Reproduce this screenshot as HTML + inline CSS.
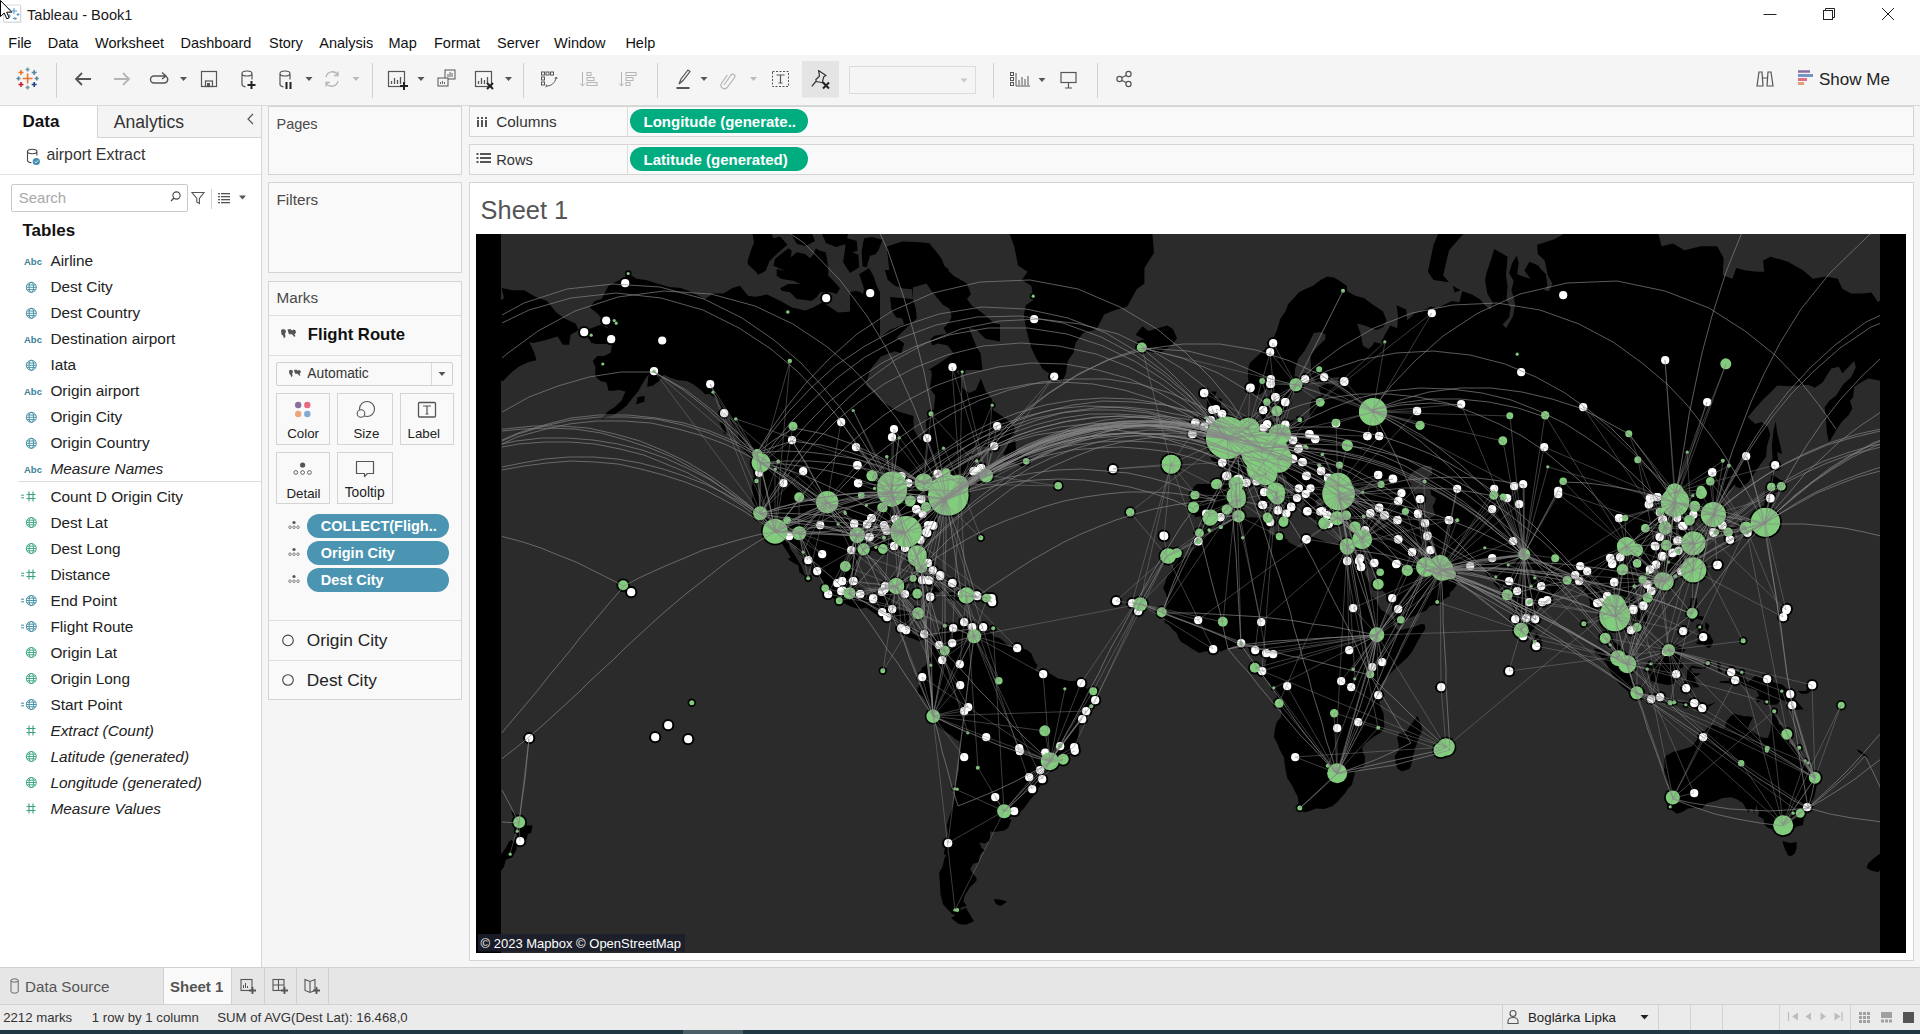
<!DOCTYPE html>
<html><head><meta charset="utf-8">
<style>
*{margin:0;padding:0;box-sizing:border-box}
html,body{width:1920px;height:1034px;overflow:hidden;background:#fff;font-family:"Liberation Sans",sans-serif;position:relative}
.a{position:absolute}
.t{position:absolute;white-space:nowrap;line-height:1}
</style></head><body>
<div class="t" style="left:27.0px;top:7.7px;font-size:14.6px;color:#1a1a1a;">Tableau - Book1</div>
<svg class="a" style="left:0.0px;top:0.0px;" width="26" height="26" viewBox="0 0 26 26"><rect x="4.5" y="6" width="17" height="17" fill="#e8e8e8"/><rect x="3.5" y="5" width="17" height="17" fill="#fff" stroke="#d0d0d0" stroke-width="0.8"/><g stroke="#5a9bd0" stroke-width="1.1"><path d="M14 8v6M11 11h6M9 14v4M7 16h4M15 17v3M13 18.5h4M9 8v3M7.5 9.5h3M18 13v3M16.5 14.5h3"/></g><path d="M0.5 0.5 L0.5 16.5 L4.2 13 L6.8 18.8 L9.2 17.8 L6.7 12.2 L11.8 12.2 Z" fill="#fff" stroke="#000" stroke-width="1"/></svg>
<svg class="a" style="left:1760.0px;top:4.0px;" width="140" height="20" viewBox="0 0 140 20"><g stroke="#222" stroke-width="1" fill="none"><path d="M3.5 10.5h13"/><rect x="63.5" y="6.5" width="9" height="9"/><path d="M65.5 6.5v-2h9v9h-2"/><path d="M122 4l12 12M134 4l-12 12"/></g></svg>
<div class="t" style="left:8.3px;top:35.5px;font-size:14.5px;color:#111;">File</div>
<div class="t" style="left:47.8px;top:35.5px;font-size:14.5px;color:#111;">Data</div>
<div class="t" style="left:95.0px;top:35.5px;font-size:14.5px;color:#111;">Worksheet</div>
<div class="t" style="left:180.5px;top:35.5px;font-size:14.5px;color:#111;">Dashboard</div>
<div class="t" style="left:269.0px;top:35.5px;font-size:14.5px;color:#111;">Story</div>
<div class="t" style="left:319.3px;top:35.5px;font-size:14.5px;color:#111;">Analysis</div>
<div class="t" style="left:388.5px;top:35.5px;font-size:14.5px;color:#111;">Map</div>
<div class="t" style="left:434.0px;top:35.5px;font-size:14.5px;color:#111;">Format</div>
<div class="t" style="left:497.0px;top:35.5px;font-size:14.5px;color:#111;">Server</div>
<div class="t" style="left:554.0px;top:35.5px;font-size:14.5px;color:#111;">Window</div>
<div class="t" style="left:625.4px;top:35.5px;font-size:14.5px;color:#111;">Help</div>
<div class="a" style="left:0.0px;top:55.0px;width:1920.0px;height:50.0px;background:#f5f5f5"></div>
<div class="a" style="left:0.0px;top:105.0px;width:1920.0px;height:1.0px;background:#d9d9d9"></div>
<div class="a" style="left:56.4px;top:63.0px;width:1.0px;height:35.0px;background:#d0d0d0"></div>
<div class="a" style="left:372.4px;top:63.0px;width:1.0px;height:35.0px;background:#d0d0d0"></div>
<div class="a" style="left:523.4px;top:63.0px;width:1.0px;height:35.0px;background:#d0d0d0"></div>
<div class="a" style="left:656.5px;top:63.0px;width:1.0px;height:35.0px;background:#d0d0d0"></div>
<div class="a" style="left:993.0px;top:63.0px;width:1.0px;height:35.0px;background:#d0d0d0"></div>
<div class="a" style="left:1097.0px;top:63.0px;width:1.0px;height:35.0px;background:#d0d0d0"></div>
<svg class="a" style="left:0.0px;top:0.0px;" width="1920" height="110" viewBox="0 0 1920 110"><g stroke-width="1.6"><path stroke="#e8762b" d="M22.6 78.5h10.0M27.6 73.5v10.0"/><path stroke="#e8762b" d="M18.5 72.5h5.0M21.0 70.0v5.0"/><path stroke="#5b879b" d="M31.7 72.5h5.0M34.2 70.0v5.0"/><path stroke="#c72035" d="M18.5 84.5h5.0M21.0 82.0v5.0"/><path stroke="#1f457e" d="M31.7 84.5h5.0M34.2 82.0v5.0"/><path stroke="#7099a6" d="M25.6 69.5h4.0M27.6 67.5v4.0"/><path stroke="#7099a6" d="M25.6 87.5h4.0M27.6 85.5v4.0"/><path stroke="#59879b" d="M16.5 78.5h4.0M18.5 76.5v4.0"/><path stroke="#59879b" d="M34.7 78.5h4.0M36.7 76.5v4.0"/></g><path d="M91 79H76M82 73l-6 6 6 6" stroke="#555" stroke-width="1.8" fill="none"/><path d="M114 79h15M123 73l6 6-6 6" stroke="#b5b5b5" stroke-width="1.8" fill="none"/><path d="M166 76h-12a3.5 3.5 0 0 0 0 7h10a3.5 3.5 0 0 0 2-6.5M162 72.5l4 3.5-4 3" stroke="#555" stroke-width="1.4" fill="none"/><path d="M180.0 77.0h7l-3.5 4z" fill="#555"/><rect x="201.5" y="71.5" width="15" height="15" fill="none" stroke="#555" stroke-width="1.2"/><rect x="205.5" y="81" width="7" height="5.5" fill="none" stroke="#555" stroke-width="1.2"/><rect x="207" y="83" width="3" height="3.5" fill="#555"/><path d="M242 73.5v11c0 1.2 1.5 2 3.5 2.3M242 73.5c0-1.5 2.5-2.5 5-2.5s5 1 5 2.5v6M242 73.5c0 1.5 2.5 2.5 5 2.5s5-1 5-2.5" stroke="#555" stroke-width="1.2" fill="none"/><path d="M247.5 85h8M251.5 81v8" stroke="#222" stroke-width="2"/><path d="M280 73.5v11c0 1.2 1.5 2 3.5 2.3M280 73.5c0-1.5 2.5-2.5 5-2.5s5 1 5 2.5v6M280 73.5c0 1.5 2.5 2.5 5 2.5s5-1 5-2.5" stroke="#555" stroke-width="1.2" fill="none"/><path d="M286.5 82v7M290.5 82v7" stroke="#222" stroke-width="2"/><path d="M305.5 77.0h7l-3.5 4z" fill="#555"/><path d="M326 77a6.5 6.5 0 0 1 12-2M338 81a6.5 6.5 0 0 1-12 2M338 71.5v4h-4M326 86.5v-4h4" stroke="#b5b5b5" stroke-width="1.3" fill="none"/><path d="M352.5 77.0h7l-3.5 4z" fill="#bbb"/><rect x="388.5" y="71.5" width="16" height="15" fill="none" stroke="#555" stroke-width="1.2"/><path d="M391.5 84v-3M394.5 84v-6M397.5 84v-4M400.5 84v-7" stroke="#555" stroke-width="1.3"/><path d="M400 86h8M404 82v8" stroke="#222" stroke-width="2"/><path d="M417.5 77.0h7l-3.5 4z" fill="#555"/><rect x="445" y="70" width="10" height="9" fill="#f4f4f4" stroke="#555" stroke-width="1"/><rect x="438" y="78" width="10" height="8" fill="#f4f4f4" stroke="#555" stroke-width="1"/><path d="M448 77v-3M450 77v-5M452 77v-4M440.5 84v-2M442.5 84v-3M444.5 84v-2" stroke="#555" stroke-width="0.9"/><rect x="475.5" y="71.5" width="16" height="15" fill="none" stroke="#555" stroke-width="1.2"/><path d="M478.5 84v-3M481.5 84v-6M484.5 84v-4M487.5 84v-7" stroke="#555" stroke-width="1.3"/><path d="M487 83l6 6M493 83l-6 6" stroke="#222" stroke-width="2"/><path d="M505.0 77.0h7l-3.5 4z" fill="#555"/><g fill="none" stroke="#555" stroke-width="1"><rect x="541.5" y="72" width="3" height="3"/><rect x="546" y="72" width="3" height="3"/><rect x="550.5" y="72" width="3" height="3"/><rect x="541.5" y="77" width="3" height="3"/><rect x="541.5" y="82" width="3" height="3"/><path d="M547 86c4 0 8-3 9-8M555 78.5l1.2-1.5 1 2M546 84.5l1 1.5-1.5 1"/></g><g fill="none" stroke="#b5b5b5" stroke-width="1"><path d="M582.5 72v14M580 83.5l2.5 2.5 2.5-2.5"/><rect x="587" y="72.5" width="4" height="3"/><rect x="587" y="77.5" width="7" height="3"/><rect x="587" y="82.5" width="10" height="3"/></g><g fill="none" stroke="#b5b5b5" stroke-width="1"><path d="M621.5 72v14M619 83.5l2.5 2.5 2.5-2.5"/><rect x="626" y="72.5" width="10" height="3"/><rect x="626" y="77.5" width="7" height="3"/><rect x="626" y="82.5" width="4" height="3"/></g><path d="M679 84l2-5 7-9 2 1.5-7 9-4 3.5z" fill="none" stroke="#555" stroke-width="1.2"/><path d="M676.5 88h13" stroke="#555" stroke-width="2"/><path d="M700.5 77.0h7l-3.5 4z" fill="#555"/><path d="M724 85l7-10a2.2 2.2 0 0 1 3.6 2.5l-7.5 10a3.5 3.5 0 0 1-5.7-4l6-8.5" fill="none" stroke="#b5b5b5" stroke-width="1.2"/><path d="M750.0 77.0h7l-3.5 4z" fill="#bbb"/><rect x="772.5" y="71.5" width="16" height="15" fill="none" stroke="#555" stroke-width="1" stroke-dasharray="2 1.5"/><path d="M776.5 75h8M780.5 75v8M778.5 83h4" stroke="#555" stroke-width="1.2" fill="none"/><rect x="802" y="61" width="37" height="36.5" fill="#e4e4e4"/><path d="M818.5 70.5l7.5 5-2.2 1.2-1.3 4.8 1.5 1.5-7.8-1.5-.3-2 3.5-3.3-.2-2.5z M815.8 81.5l-4 4.8" fill="none" stroke="#333" stroke-width="1.2" stroke-linejoin="round"/><path d="M823 82.5l6 6M829 82.5l-6 6" stroke="#222" stroke-width="2"/><rect x="849.5" y="66.5" width="126" height="27" fill="#f5f5f5" stroke="#dcdcdc"/><path d="M960.5 78.5h7l-3.5 4z" fill="#c8c8c8"/><g fill="none" stroke="#555" stroke-width="1"><rect x="1010.5" y="72.5" width="3" height="3"/><rect x="1010.5" y="77.5" width="3" height="3"/><rect x="1010.5" y="82.5" width="3" height="3"/><path d="M1016 73v13h14M1019 85v-5M1022 85v-8M1025 85v-6M1028 85v-9"/></g><path d="M1038.5 78.0h7l-3.5 4z" fill="#555"/><g fill="none" stroke="#555" stroke-width="1.2"><rect x="1061" y="72.5" width="15" height="10"/><path d="M1068.5 83v5M1065 88h7"/></g><g fill="none" stroke="#555" stroke-width="1.2"><circle cx="1119.5" cy="79" r="2.6"/><circle cx="1128.5" cy="74" r="2.6"/><circle cx="1128.5" cy="84" r="2.6"/><path d="M1121.7 77.8l4.6-2.5M1121.7 80.2l4.6 2.5"/></g><g fill="none" stroke="#555" stroke-width="1.2"><path d="M1757 86l2-14h3l1 14zM1767 86l1-14h3l2 14zM1762 78h6"/></g><path d="M1798 71.5h12M1798 75.5h15M1798 79.5h9M1798 83.5h6" stroke-width="2.6" stroke="#8b6ea3"/><path d="M1798 75.5h15" stroke-width="2.6" stroke="#7096c8"/><path d="M1798 79.5h9" stroke-width="2.6" stroke="#e86a7f"/><path d="M1798 83.5h6" stroke-width="2.6" stroke="#f0a070"/></svg>
<div class="t" style="left:1819.0px;top:70.9px;font-size:17.0px;color:#222;">Show Me</div>
<div class="a" style="left:0.0px;top:106.0px;width:1920.0px;height:861.0px;background:#f5f5f5"></div>
<div class="a" style="left:0.0px;top:106.0px;width:261.0px;height:861.0px;background:#fff"></div>
<div class="a" style="left:261.0px;top:106.0px;width:1.0px;height:861.0px;background:#d6d6d6"></div>
<div class="a" style="left:97.0px;top:106.0px;width:164.0px;height:32.0px;background:#f4f4f4;border-left:1px solid #d4d4d4;border-bottom:1px solid #d4d4d4"></div>
<div class="t" style="left:22.6px;top:112.6px;font-size:17.0px;color:#111;font-weight:bold">Data</div>
<div class="t" style="left:113.7px;top:113.7px;font-size:17.6px;color:#333;">Analytics</div>
<svg class="a" style="left:244.0px;top:112.0px;" width="12" height="14" viewBox="0 0 12 14"><path d="M9 2L4 7l5 5" fill="none" stroke="#555" stroke-width="1.2"/></svg>
<div class="a" style="left:0.0px;top:174.0px;width:261.0px;height:1.0px;background:#e2e2e2"></div>
<svg class="a" style="left:24.0px;top:147.0px;" width="20" height="20" viewBox="0 0 20 20"><path d="M3.5 4.5v9c0 1.3 2 2 4 2.2M3.5 4.5c0-1.4 2.3-2.2 4.7-2.2s4.7.8 4.7 2.2v4M3.5 4.5c0 1.4 2.3 2.2 4.7 2.2s4.7-.8 4.7-2.2" fill="none" stroke="#444" stroke-width="1.1"/><circle cx="12.3" cy="14.5" r="3.6" fill="#3d8bb0"/><path d="M10.5 14.5l1.3 1.3 2.3-2.5" fill="none" stroke="#fff" stroke-width="1"/></svg>
<div class="t" style="left:46.4px;top:146.7px;font-size:15.9px;color:#333;">airport Extract</div>
<div class="a" style="left:10.5px;top:184.0px;width:177.0px;height:27.5px;border:1px solid #c9c9c9;border-radius:2px;background:#fff"></div>
<div class="t" style="left:18.7px;top:190.0px;font-size:15.0px;color:#a8a8a8;">Search</div>
<svg class="a" style="left:165.0px;top:186.0px;" width="90" height="24" viewBox="0 0 90 24"><circle cx="11.5" cy="9.5" r="3.6" fill="none" stroke="#444" stroke-width="1.1"/><path d="M9 12l-3 3" stroke="#444" stroke-width="1.2"/><path d="M27 6.5h12l-4.6 6v5l-2.6-1.5v-3.5z" fill="none" stroke="#555" stroke-width="1.1"/><path d="M46.5 3v20" stroke="#d0d0d0"/><g fill="#555"><rect x="53" y="7" width="2" height="1.3"/><rect x="56" y="7" width="9" height="1.3"/><rect x="53" y="10" width="2" height="1.3"/><rect x="56" y="10" width="9" height="1.3"/><rect x="53" y="13" width="2" height="1.3"/><rect x="56" y="13" width="9" height="1.3"/><rect x="53" y="16" width="2" height="1.3"/><rect x="56" y="16" width="9" height="1.3"/></g><path d="M74 9.5h7l-3.5 4z" fill="#555"/></svg>
<div class="t" style="left:22.5px;top:222.1px;font-size:17.0px;color:#111;font-weight:bold">Tables</div>
<div class="t" style="left:50.4px;top:253.3px;font-size:15.4px;color:#222;">Airline</div>
<div class="t" style="left:50.4px;top:279.3px;font-size:15.4px;color:#222;">Dest City</div>
<div class="t" style="left:50.4px;top:305.3px;font-size:15.4px;color:#222;">Dest Country</div>
<div class="t" style="left:50.4px;top:331.3px;font-size:15.4px;color:#222;">Destination airport</div>
<div class="t" style="left:50.4px;top:357.3px;font-size:15.4px;color:#222;">Iata</div>
<div class="t" style="left:50.4px;top:383.3px;font-size:15.4px;color:#222;">Origin airport</div>
<div class="t" style="left:50.4px;top:409.3px;font-size:15.4px;color:#222;">Origin City</div>
<div class="t" style="left:50.4px;top:435.3px;font-size:15.4px;color:#222;">Origin Country</div>
<div class="t" style="left:50.4px;top:461.3px;font-size:15.4px;color:#222;font-style:italic">Measure Names</div>
<div class="a" style="left:18.0px;top:481.0px;width:243.0px;height:1.0px;background:#dcdcdc"></div>
<div class="t" style="left:50.4px;top:488.5px;font-size:15.4px;color:#222;">Count D Origin City</div>
<div class="t" style="left:50.4px;top:514.5px;font-size:15.4px;color:#222;">Dest Lat</div>
<div class="t" style="left:50.4px;top:540.5px;font-size:15.4px;color:#222;">Dest Long</div>
<div class="t" style="left:50.4px;top:566.5px;font-size:15.4px;color:#222;">Distance</div>
<div class="t" style="left:50.4px;top:592.5px;font-size:15.4px;color:#222;">End Point</div>
<div class="t" style="left:50.4px;top:618.5px;font-size:15.4px;color:#222;">Flight Route</div>
<div class="t" style="left:50.4px;top:644.5px;font-size:15.4px;color:#222;">Origin Lat</div>
<div class="t" style="left:50.4px;top:670.5px;font-size:15.4px;color:#222;">Origin Long</div>
<div class="t" style="left:50.4px;top:696.5px;font-size:15.4px;color:#222;">Start Point</div>
<div class="t" style="left:50.4px;top:722.5px;font-size:15.4px;color:#222;font-style:italic">Extract (Count)</div>
<div class="t" style="left:50.4px;top:748.5px;font-size:15.4px;color:#222;font-style:italic">Latitude (generated)</div>
<div class="t" style="left:50.4px;top:774.5px;font-size:15.4px;color:#222;font-style:italic">Longitude (generated)</div>
<div class="t" style="left:50.4px;top:800.5px;font-size:15.4px;color:#222;font-style:italic">Measure Values</div>
<svg class="a" style="left:0.0px;top:0.0px;" width="60" height="830" viewBox="0 0 60 830"><text x="24" y="264.8" font-family="Liberation Sans" font-size="9.5" font-weight="bold" fill="#3b7f98">Abc</text><g fill="none" stroke="#3c8aa2" stroke-width="0.9"><circle cx="31.3" cy="287.3" r="5"/><ellipse cx="31.3" cy="287.3" rx="2.2" ry="5"/><path d="M26.3 287.3h10M26.8 285.0h9M26.8 289.6h9"/></g><g fill="none" stroke="#3c8aa2" stroke-width="0.9"><circle cx="31.3" cy="313.3" r="5"/><ellipse cx="31.3" cy="313.3" rx="2.2" ry="5"/><path d="M26.3 313.3h10M26.8 311.0h9M26.8 315.6h9"/></g><text x="24" y="342.8" font-family="Liberation Sans" font-size="9.5" font-weight="bold" fill="#3b7f98">Abc</text><g fill="none" stroke="#3c8aa2" stroke-width="0.9"><circle cx="31.3" cy="365.3" r="5"/><ellipse cx="31.3" cy="365.3" rx="2.2" ry="5"/><path d="M26.3 365.3h10M26.8 363.0h9M26.8 367.6h9"/></g><text x="24" y="394.8" font-family="Liberation Sans" font-size="9.5" font-weight="bold" fill="#3b7f98">Abc</text><g fill="none" stroke="#3c8aa2" stroke-width="0.9"><circle cx="31.3" cy="417.3" r="5"/><ellipse cx="31.3" cy="417.3" rx="2.2" ry="5"/><path d="M26.3 417.3h10M26.8 415.0h9M26.8 419.6h9"/></g><g fill="none" stroke="#3c8aa2" stroke-width="0.9"><circle cx="31.3" cy="443.3" r="5"/><ellipse cx="31.3" cy="443.3" rx="2.2" ry="5"/><path d="M26.3 443.3h10M26.8 441.0h9M26.8 445.6h9"/></g><text x="24" y="472.8" font-family="Liberation Sans" font-size="9.5" font-weight="bold" fill="#3b7f98">Abc</text><path d="M29 491.5v10M33 491.5v10M26.5 494.5h9M26.5 498.5h9" stroke="#38a37a" stroke-width="1.1"/><path d="M21 495.2h3M21 497.8h3" stroke="#38a37a" stroke-width="1"/><g fill="none" stroke="#38a37a" stroke-width="0.9"><circle cx="31.3" cy="522.5" r="5"/><ellipse cx="31.3" cy="522.5" rx="2.2" ry="5"/><path d="M26.3 522.5h10M26.8 520.2h9M26.8 524.8h9"/></g><g fill="none" stroke="#38a37a" stroke-width="0.9"><circle cx="31.3" cy="548.5" r="5"/><ellipse cx="31.3" cy="548.5" rx="2.2" ry="5"/><path d="M26.3 548.5h10M26.8 546.2h9M26.8 550.8h9"/></g><path d="M29 569.5v10M33 569.5v10M26.5 572.5h9M26.5 576.5h9" stroke="#38a37a" stroke-width="1.1"/><path d="M21 573.2h3M21 575.8h3" stroke="#38a37a" stroke-width="1"/><g fill="none" stroke="#3c8aa2" stroke-width="0.9"><circle cx="31.3" cy="600.5" r="5"/><ellipse cx="31.3" cy="600.5" rx="2.2" ry="5"/><path d="M26.3 600.5h10M26.8 598.2h9M26.8 602.8h9"/></g><path d="M21 599.2h3M21 601.8h3" stroke="#3c8aa2" stroke-width="1"/><g fill="none" stroke="#3c8aa2" stroke-width="0.9"><circle cx="31.3" cy="626.5" r="5"/><ellipse cx="31.3" cy="626.5" rx="2.2" ry="5"/><path d="M26.3 626.5h10M26.8 624.2h9M26.8 628.8h9"/></g><path d="M21 625.2h3M21 627.8h3" stroke="#3c8aa2" stroke-width="1"/><g fill="none" stroke="#38a37a" stroke-width="0.9"><circle cx="31.3" cy="652.5" r="5"/><ellipse cx="31.3" cy="652.5" rx="2.2" ry="5"/><path d="M26.3 652.5h10M26.8 650.2h9M26.8 654.8h9"/></g><g fill="none" stroke="#38a37a" stroke-width="0.9"><circle cx="31.3" cy="678.5" r="5"/><ellipse cx="31.3" cy="678.5" rx="2.2" ry="5"/><path d="M26.3 678.5h10M26.8 676.2h9M26.8 680.8h9"/></g><g fill="none" stroke="#3c8aa2" stroke-width="0.9"><circle cx="31.3" cy="704.5" r="5"/><ellipse cx="31.3" cy="704.5" rx="2.2" ry="5"/><path d="M26.3 704.5h10M26.8 702.2h9M26.8 706.8h9"/></g><path d="M21 703.2h3M21 705.8h3" stroke="#3c8aa2" stroke-width="1"/><path d="M29 725.5v10M33 725.5v10M26.5 728.5h9M26.5 732.5h9" stroke="#38a37a" stroke-width="1.1"/><g fill="none" stroke="#38a37a" stroke-width="0.9"><circle cx="31.3" cy="756.5" r="5"/><ellipse cx="31.3" cy="756.5" rx="2.2" ry="5"/><path d="M26.3 756.5h10M26.8 754.2h9M26.8 758.8h9"/></g><g fill="none" stroke="#38a37a" stroke-width="0.9"><circle cx="31.3" cy="782.5" r="5"/><ellipse cx="31.3" cy="782.5" rx="2.2" ry="5"/><path d="M26.3 782.5h10M26.8 780.2h9M26.8 784.8h9"/></g><path d="M29 803.5v10M33 803.5v10M26.5 806.5h9M26.5 810.5h9" stroke="#38a37a" stroke-width="1.1"/></svg>
<div class="a" style="left:268.0px;top:105.5px;width:194.0px;height:69.5px;border:1px solid #d4d4d4;background:#f9f9f9"></div>
<div class="t" style="left:276.5px;top:116.9px;font-size:14.5px;color:#4a4a4a;">Pages</div>
<div class="a" style="left:268.0px;top:181.5px;width:194.0px;height:91.5px;border:1px solid #d4d4d4;background:#f9f9f9"></div>
<div class="t" style="left:276.5px;top:192.2px;font-size:15.3px;color:#4a4a4a;">Filters</div>
<div class="a" style="left:268.0px;top:281.0px;width:194.0px;height:419.0px;border:1px solid #d4d4d4;background:#f9f9f9"></div>
<div class="t" style="left:276.4px;top:290.2px;font-size:15.3px;color:#4a4a4a;">Marks</div>
<div class="a" style="left:269.0px;top:315.0px;width:192.0px;height:1.0px;background:#dedede"></div>
<div class="t" style="left:307.8px;top:326.9px;font-size:16.7px;color:#111;font-weight:bold">Flight Route</div>
<div class="a" style="left:269.0px;top:355.0px;width:192.0px;height:1.0px;background:#dedede"></div>
<div class="a" style="left:276.4px;top:362.3px;width:177.0px;height:23.5px;border:1px solid #d0d0d0;background:#f9f9f9;border-radius:2px"></div>
<div class="a" style="left:431.0px;top:363.0px;width:1.0px;height:22.0px;background:#d8d8d8"></div>
<div class="t" style="left:307.3px;top:367.2px;font-size:13.8px;color:#333;">Automatic</div>
<svg class="a" style="left:0.0px;top:0.0px;" width="470" height="700" viewBox="0 0 470 700"><path d="M281 330l2.5-1 2 1 .5 2-1 1.5.5 3-1.5 2-1-3-1.5-1z M287.5 329.5l3-.5 1.5 1.5 1.5-1 2 .8.5 2.5-1.5 1.5 1 2-1.5.5-1-1.5-2-1.5-1 1-1.5-1.5z" fill="#555"/><path d="M289 370.5l2-.8 1.6.8.4 1.6-.8 1.2.4 2.4-1.2 1.6-.8-2.4-1.2-.8z M294 370l2.4-.4 1.2 1.2 1.2-.8 1.6.6.4 2-1.2 1.2.8 1.6-1.2.4-.8-1.2-1.6-1.2-.8.8-1.2-1.2z" fill="#555"/><path d="M438.5 372h7l-3.5 4z" fill="#555"/><g fill="#f9f9f9" stroke="#d4d4d4"><rect x="276.5" y="393.5" width="53" height="51"/><rect x="337.5" y="393.5" width="55" height="51"/><rect x="400.5" y="393.5" width="53" height="51"/><rect x="276.5" y="452.5" width="53" height="51"/><rect x="337.5" y="452.5" width="55" height="51"/></g><circle cx="298.2" cy="405" r="3.2" fill="#8a6f9e"/><circle cx="307.3" cy="405" r="3.2" fill="#e8697e"/><circle cx="298.2" cy="414" r="3.2" fill="#eea57a"/><circle cx="307.3" cy="414" r="3.2" fill="#85aad2"/><g fill="none" stroke="#555" stroke-width="1.1"><circle cx="367" cy="409" r="7.5"/><circle cx="361" cy="413.5" r="3.8" fill="#f9f9f9"/></g><rect x="418.5" y="402.5" width="17" height="14.5" rx="1" fill="none" stroke="#555" stroke-width="1.3"/><path d="M423 406h8M427 406v8M425.5 414h3" stroke="#555" stroke-width="1.2" fill="none"/><circle cx="302.6" cy="465" r="2.6" fill="#555"/><g fill="none" stroke="#555" stroke-width="0.9"><circle cx="295.8" cy="472.5" r="1.9"/><circle cx="302.6" cy="472.5" r="1.9"/><circle cx="309.4" cy="472.5" r="1.9"/></g><path d="M356.5 461.5h17v12h-6l-3 3v-3h-8z" fill="none" stroke="#555" stroke-width="1.2" stroke-linejoin="round"/><circle cx="294" cy="522.5" r="1.6" fill="#555"/><g fill="none" stroke="#555" stroke-width="0.7"><circle cx="290" cy="527.2" r="1.3"/><circle cx="294" cy="527.2" r="1.3"/><circle cx="298" cy="527.2" r="1.3"/></g><circle cx="294" cy="549.5" r="1.6" fill="#555"/><g fill="none" stroke="#555" stroke-width="0.7"><circle cx="290" cy="554.2" r="1.3"/><circle cx="294" cy="554.2" r="1.3"/><circle cx="298" cy="554.2" r="1.3"/></g><circle cx="294" cy="576.5" r="1.6" fill="#555"/><g fill="none" stroke="#555" stroke-width="0.7"><circle cx="290" cy="581.2" r="1.3"/><circle cx="294" cy="581.2" r="1.3"/><circle cx="298" cy="581.2" r="1.3"/></g><g fill="none" stroke="#444" stroke-width="1.1"><circle cx="288" cy="640.4" r="5.3"/><circle cx="288" cy="680" r="5.3"/></g><path d="M269 620.5h192M269 660.5h192" stroke="#dedede"/></svg>
<div class="t" style="left:287.2px;top:427.4px;font-size:13.3px;color:#222;">Color</div>
<div class="t" style="left:353.5px;top:427.4px;font-size:13.3px;color:#222;">Size</div>
<div class="t" style="left:407.5px;top:427.4px;font-size:13.3px;color:#222;">Label</div>
<div class="t" style="left:286.5px;top:486.5px;font-size:13.3px;color:#222;">Detail</div>
<div class="t" style="left:344.7px;top:486.1px;font-size:13.8px;color:#222;">Tooltip</div>
<div class="a" style="left:307.0px;top:514.0px;width:142.0px;height:24.0px;background:#4b95b2;border-radius:12px"></div>
<div class="t" style="left:320.8px;top:519.1px;font-size:14.5px;color:#fff;font-weight:bold">COLLECT(Fligh..</div>
<div class="a" style="left:307.0px;top:541.0px;width:142.0px;height:24.0px;background:#4b95b2;border-radius:12px"></div>
<div class="t" style="left:320.8px;top:546.1px;font-size:14.5px;color:#fff;font-weight:bold">Origin City</div>
<div class="a" style="left:307.0px;top:568.0px;width:142.0px;height:24.0px;background:#4b95b2;border-radius:12px"></div>
<div class="t" style="left:320.8px;top:573.0px;font-size:14.5px;color:#fff;font-weight:bold">Dest City</div>
<div class="t" style="left:306.8px;top:632.2px;font-size:17.3px;color:#222;">Origin City</div>
<div class="t" style="left:306.8px;top:671.8px;font-size:17.3px;color:#222;">Dest City</div>
<div class="a" style="left:468.5px;top:105.5px;width:1445.0px;height:31.5px;border:1px solid #d4d4d4;background:#f9f9f9"></div>
<div class="a" style="left:627.0px;top:106.0px;width:1.0px;height:30.0px;background:#dcdcdc"></div>
<div class="a" style="left:468.5px;top:143.5px;width:1445.0px;height:31.5px;border:1px solid #d4d4d4;background:#f9f9f9"></div>
<div class="a" style="left:627.0px;top:144.0px;width:1.0px;height:30.0px;background:#dcdcdc"></div>
<svg class="a" style="left:474.0px;top:110.0px;" width="20" height="60" viewBox="0 0 20 60"><g fill="#555"><rect x="3" y="7" width="2" height="2"/><rect x="7" y="7" width="2" height="2"/><rect x="11" y="7" width="2" height="2"/><rect x="3" y="10" width="2" height="7"/><rect x="7" y="10" width="2" height="7"/><rect x="11" y="10" width="2" height="7"/><rect x="2.5" y="43" width="2" height="2"/><rect x="6" y="43" width="11" height="2"/><rect x="2.5" y="47" width="2" height="2"/><rect x="6" y="47" width="11" height="2"/><rect x="2.5" y="51" width="2" height="2"/><rect x="6" y="51" width="11" height="2"/></g></svg>
<div class="t" style="left:496.3px;top:114.1px;font-size:15.3px;color:#333;">Columns</div>
<div class="t" style="left:496.3px;top:152.6px;font-size:14.6px;color:#333;">Rows</div>
<div class="a" style="left:630.0px;top:109.0px;width:178.0px;height:24.0px;background:#00ac80;border-radius:12px"></div>
<div class="t" style="left:643.5px;top:114.2px;font-size:15.0px;color:#fff;font-weight:bold">Longitude (generate..</div>
<div class="a" style="left:630.0px;top:147.0px;width:178.0px;height:24.0px;background:#00ac80;border-radius:12px"></div>
<div class="t" style="left:643.5px;top:151.9px;font-size:15.0px;color:#fff;font-weight:bold">Latitude (generated)</div>
<div class="a" style="left:468.5px;top:181.5px;width:1445.0px;height:779.0px;background:#fff;border:1px solid #d4d4d4"></div>
<div class="t" style="left:480.6px;top:198.3px;font-size:25.4px;color:#555;">Sheet 1</div>
<svg class="a" style="left:476px;top:234px" width="1430" height="719" viewBox="0 0 1430 719">
<rect width="1430" height="719" fill="#2b2b2b"/>
<g fill="#000"><path d="M108.8,99.9 114.9,94.2 125.2,90.4 132.9,95.2 126.0,85.5 122.6,80.6 113.8,73.4 118.7,67.1 125.6,65.0 132.5,51.7 143.6,46.0 153.2,40.1 160.5,44.8 169.7,46.0 181.2,49.4 193.4,52.9 204.9,54.0 216.4,58.5 228.7,65.0 237.5,59.6 247.1,59.6 256.6,54.0 263.9,51.7 272.0,61.7 279.6,62.8 291.1,60.6 304.5,67.1 316.0,73.4 329.4,76.5 337.1,73.4 346.7,68.2 362.0,78.5 375.4,77.5 385.0,73.4 388.8,49.4 394.5,37.7 398.4,55.1 405.6,62.8 413.7,72.4 421.4,82.6 425.2,60.6 436.7,59.6 440.9,71.3 432.8,91.4 423.3,96.1 417.5,108.1 407.9,114.3 404.5,122.9 394.5,135.2 389.6,150.8 395.7,156.7 406.0,167.6 421.4,177.3 437.4,182.0 437.8,195.7 444.3,206.3 448.2,204.5 450.8,198.9 449.7,186.0 457.7,175.9 459.3,161.8 453.9,154.5 455.8,140.8 453.9,128.7 467.3,129.5 476.9,135.2 484.6,141.5 486.5,153.8 493.0,158.9 499.9,156.0 504.9,144.6 509.5,156.7 516.0,165.4 517.1,175.9 524.8,181.3 532.4,186.6 538.2,192.5 539.0,200.8 533.6,205.7 522.9,213.0 511.4,212.4 499.1,213.0 491.5,218.3 483.8,228.7 480.0,232.6 486.5,227.0 494.1,220.1 506.0,221.2 504.5,228.7 504.5,233.8 511.4,237.6 517.9,239.3 522.1,235.4 523.6,237.6 519.0,241.5 509.5,245.3 502.6,250.6 499.5,247.9 505.6,240.9 498.0,242.0 494.1,245.3 486.5,248.5 481.9,253.7 484.2,257.9 484.7,260.2 478.8,261.5 470.4,264.5 469.2,266.0 468.9,270.1 465.8,274.0 463.5,271.5 465.0,277.0 462.0,281.3 460.4,283.2 462.3,287.5 463.5,291.8 459.3,294.1 454.3,297.4 449.3,301.0 444.0,305.1 440.9,311.0 441.3,317.2 444.0,322.5 445.9,329.4 445.5,334.5 442.8,336.6 439.7,333.2 435.9,326.4 435.5,319.8 430.9,315.4 425.6,316.8 421.4,313.7 415.6,313.7 410.2,315.0 411.0,319.4 406.0,319.4 399.1,317.2 393.4,316.8 389.6,318.5 383.0,323.3 379.6,327.7 380.0,333.2 378.5,340.4 378.1,348.3 380.4,354.9 384.2,360.6 388.8,363.5 392.6,365.1 398.4,363.5 402.2,363.9 406.0,359.4 406.4,353.7 413.7,351.6 419.4,351.6 417.5,356.6 416.4,363.9 414.8,367.9 413.3,373.9 417.1,374.7 423.3,374.3 429.8,375.1 434.0,377.9 432.8,383.8 432.5,389.7 431.7,393.6 434.8,397.5 437.8,400.6 441.7,402.2 446.3,400.2 450.5,399.8 456.2,402.9 454.7,407.2 452.8,404.1 448.2,401.8 444.7,404.5 444.7,408.0 441.7,406.8 436.7,404.5 432.1,402.9 424.4,397.9 424.4,393.2 419.8,388.5 417.1,385.8 409.9,384.2 402.6,382.2 396.5,377.9 390.7,373.5 383.0,375.1 375.4,372.7 367.7,369.1 360.1,365.9 353.2,361.8 348.2,356.2 349.3,351.6 347.4,347.1 344.7,344.2 339.4,338.7 334.4,334.5 332.9,329.4 329.0,325.9 326.4,322.0 322.9,319.8 319.5,313.2 312.9,307.9 313.7,314.1 317.9,319.8 321.8,325.9 325.6,332.4 328.3,340.0 331.7,345.8 330.2,343.8 323.3,337.9 322.5,331.5 316.0,328.1 311.8,325.1 314.9,323.3 311.0,317.6 306.1,309.7 304.1,304.2 302.2,300.1 298.8,297.4 294.9,295.5 290.7,294.6 289.2,290.4 285.7,285.2 283.5,280.4 281.5,278.4 278.5,272.0 276.2,266.6 276.9,258.4 275.8,253.2 277.7,244.7 278.1,235.4 277.3,228.7 275.0,223.6 281.5,224.7 283.1,220.1 279.6,215.4 273.9,212.4 268.1,208.8 262.8,205.1 261.6,198.9 256.6,192.5 254.0,186.0 252.8,181.3 249.0,180.7 244.8,172.5 240.9,165.4 233.7,159.7 229.4,160.4 224.1,155.2 216.8,150.0 210.7,147.0 202.6,146.2 195.3,143.9 187.7,140.8 183.9,146.2 177.0,151.5 171.2,153.0 172.4,142.3 177.3,137.6 170.4,143.1 165.9,150.8 162.0,157.5 155.9,164.7 150.5,171.8 145.2,175.9 137.1,181.3 130.2,183.3 124.9,185.3 132.1,177.3 137.9,173.8 145.5,166.8 149.4,157.5 143.6,156.0 137.9,156.7 132.5,156.7 130.6,148.5 124.5,147.0 119.1,142.3 119.5,133.6 116.8,127.0 121.4,122.0 128.3,122.0 134.8,118.6 136.0,110.7 129.5,109.9 120.7,109.9 115.7,109.0 111.8,103.5Z"/><path d="M456.2,402.9 459.3,402.5 463.1,396.7 466.2,393.6 468.9,392.4 473.4,391.3 478.0,388.1 479.2,390.5 477.3,392.8 478.8,395.9 480.3,393.6 483.8,391.3 484.6,388.9 485.3,391.6 491.1,394.0 496.4,395.2 503.7,397.1 509.5,395.2 515.6,394.8 513.3,397.5 519.0,402.9 523.6,404.1 529.4,409.1 533.6,413.0 540.1,413.4 545.8,414.1 551.2,416.1 555.4,419.5 557.3,424.5 559.3,428.7 561.6,431.0 559.3,436.0 565.0,439.4 569.6,438.3 575.3,440.2 581.9,444.4 586.5,445.2 593.0,447.1 599.9,447.1 605.2,450.2 610.6,454.4 616.7,455.9 618.6,462.1 619.0,466.7 617.9,471.4 613.3,476.4 609.4,480.7 605.6,485.8 603.7,489.4 602.9,496.1 602.5,504.5 600.6,508.5 599.1,513.4 596.0,519.1 592.2,524.1 589.9,526.6 586.1,527.0 581.5,528.2 575.7,530.7 570.7,534.1 566.9,538.3 566.5,545.6 565.4,550.4 561.6,554.8 558.5,561.0 553.9,566.0 550.8,570.5 547.8,574.6 543.9,577.9 538.6,578.3 534.4,577.0 529.0,574.6 528.6,577.4 533.6,580.7 533.2,584.9 535.5,585.9 532.4,593.6 528.6,596.5 518.3,598.0 514.1,597.5 514.4,603.4 513.7,607.0 508.3,609.5 503.3,608.5 505.6,614.1 509.1,616.7 506.0,618.3 503.7,621.4 502.6,628.4 497.6,629.4 494.1,634.9 496.0,638.2 500.6,643.9 500.3,647.3 494.1,653.1 490.7,658.4 488.4,662.6 487.6,667.5 490.7,671.9 486.5,673.1 482.6,674.4 480.7,681.4 476.1,680.1 471.2,675.0 466.9,670.0 464.6,660.8 463.9,649.0 463.1,638.8 466.6,632.7 468.5,624.1 471.5,619.8 470.4,613.6 471.2,606.0 471.9,600.0 470.8,590.7 473.8,581.6 476.9,572.3 478.4,565.5 479.2,556.6 479.6,550.0 481.1,543.5 483.0,535.0 482.6,527.8 483.8,519.1 484.2,512.2 483.4,507.3 479.2,504.9 475.0,501.3 467.3,496.5 461.6,491.4 460.0,486.2 457.4,482.3 453.1,475.3 450.1,468.3 447.0,462.9 442.0,459.0 441.3,454.0 445.1,449.0 446.6,446.0 442.8,444.4 444.3,439.4 445.9,433.7 449.7,431.4 451.6,427.2 455.8,421.8 456.2,414.9 455.8,409.9 454.7,407.2Z"/><path d="M730.1,289.0 726.7,297.4 723.6,299.2 720.1,301.0 717.1,304.7 715.2,311.9 715.9,314.6 712.5,319.0 708.6,322.9 703.3,324.6 697.5,331.5 695.6,337.0 691.4,342.1 689.1,348.7 687.2,354.1 689.9,359.4 691.0,364.7 689.5,373.1 688.3,376.3 685.7,379.1 688.3,384.2 688.7,388.5 693.3,391.6 696.4,395.2 700.6,399.1 702.1,403.3 705.2,408.0 710.6,411.0 716.3,414.9 723.2,419.1 729.7,417.2 737.4,416.1 745.0,417.6 750.8,414.9 757.3,412.6 763.0,411.4 769.9,411.8 773.8,416.1 776.4,419.5 780.3,419.1 785.3,418.4 788.7,421.4 790.2,426.4 789.5,432.2 788.3,437.1 786.4,439.1 789.1,443.7 794.8,450.2 798.7,455.2 799.8,459.4 802.1,464.8 804.0,470.6 805.6,477.2 805.2,482.7 800.6,488.2 799.1,494.1 797.9,503.3 800.6,508.1 804.0,516.3 807.9,523.3 808.2,526.6 809.8,537.1 811.3,543.9 815.5,550.4 819.0,557.4 822.0,563.2 822.4,569.1 823.2,575.6 826.2,577.4 829.3,578.3 835.1,576.5 840.0,574.6 848.1,575.1 851.5,573.7 856.1,572.3 860.7,568.7 865.3,563.2 869.5,558.8 871.8,554.8 876.0,550.4 877.6,544.3 878.7,540.1 878.3,537.9 882.9,535.8 887.2,533.3 888.7,529.9 889.1,522.8 887.5,519.5 886.0,514.2 889.1,509.7 893.7,505.7 899.0,502.1 904.8,498.5 908.2,494.1 908.2,487.8 907.5,479.6 904.4,472.6 903.2,467.5 903.6,462.1 901.3,459.4 902.9,455.2 904.8,451.3 906.7,447.5 910.5,443.7 914.4,439.4 919.7,434.1 926.2,428.3 932.0,423.0 936.2,417.6 939.3,411.8 942.3,406.0 946.1,399.4 949.2,395.2 948.8,390.5 945.0,390.1 938.5,392.8 930.8,394.4 925.1,395.9 921.2,395.6 918.6,392.4 916.3,388.5 918.6,387.3 913.6,381.8 910.5,378.7 905.2,375.9 902.9,371.9 900.2,365.9 896.3,362.7 895.2,359.4 894.0,349.6 889.8,342.1 888.3,337.5 885.2,332.4 882.6,327.7 880.3,323.3 877.6,316.3 876.4,310.1 872.2,308.3 867.6,310.1 863.4,311.4 857.3,310.1 848.8,307.4 842.7,305.1 836.6,302.9 831.2,304.2 828.5,310.1 825.5,314.1 819.7,311.9 812.8,308.3 810.9,305.1 804.4,302.9 796.8,301.5 792.9,299.2 791.4,296.9 794.5,293.2 794.8,289.9 793.3,286.1 795.2,283.2 791.4,282.3 787.9,282.3 782.2,283.7 775.7,283.2 769.9,283.7 764.2,284.2 758.4,285.6 752.7,288.5 748.1,291.3 744.3,292.2 739.3,291.8 733.9,291.8 732.0,288.5Z"/><path d="M1298.6,477.2 1302.0,484.7 1302.8,490.2 1306.2,491.4 1309.3,494.1 1309.7,499.3 1311.6,502.1 1313.1,509.7 1317.7,512.2 1322.7,515.4 1325.4,520.4 1329.2,524.1 1331.1,528.7 1336.9,534.1 1338.8,538.3 1339.5,544.8 1341.1,550.4 1339.2,558.8 1338.0,563.7 1334.2,569.6 1331.9,574.6 1330.4,579.3 1327.7,585.4 1326.9,591.2 1320.8,592.6 1317.3,594.6 1313.1,598.5 1309.3,595.0 1306.2,594.6 1302.4,597.5 1296.6,595.5 1291.3,593.6 1288.2,590.2 1287.5,584.9 1282.1,582.1 1283.2,578.3 1281.3,575.6 1280.6,570.0 1279.8,574.6 1277.1,580.7 1278.6,578.8 1275.6,574.6 1272.1,578.3 1270.6,575.6 1266.8,569.1 1261.4,565.5 1255.3,563.2 1246.8,564.1 1239.2,566.9 1231.5,569.1 1226.2,574.2 1219.7,573.7 1212.0,574.6 1205.9,578.3 1200.9,579.8 1195.5,576.0 1193.2,575.6 1195.9,571.0 1195.9,565.5 1193.6,558.8 1192.8,552.2 1190.2,546.5 1187.1,540.1 1188.6,532.8 1188.2,524.9 1190.5,521.6 1197.0,517.9 1203.9,516.3 1208.2,515.0 1215.8,512.6 1220.8,506.1 1221.9,501.3 1225.8,503.3 1226.9,498.5 1231.5,494.1 1236.1,490.2 1241.9,491.4 1244.2,493.7 1249.1,494.1 1249.9,488.2 1253.0,483.9 1257.6,479.6 1262.2,480.7 1267.9,482.3 1273.3,482.3 1277.1,483.5 1274.8,487.4 1273.3,490.2 1271.7,494.1 1274.8,496.5 1280.6,500.5 1286.3,503.7 1292.0,503.7 1294.7,496.1 1295.1,488.2 1295.9,483.1 1297.4,478.4Z"/><path d="M1306.6,607.0 1313.9,609.0 1320.8,608.0 1320.4,614.6 1318.9,619.3 1315.4,621.9 1312.0,621.4 1308.9,615.1 1307.0,609.5Z"/><path d="M1414.2,576.5 1420.4,581.6 1425.0,586.4 1428.0,591.6 1435.7,591.6 1434.2,599.0 1430.7,600.0 1430.0,604.4 1425.4,611.0 1422.3,610.0 1423.1,603.4 1418.5,599.5 1421.5,594.1 1421.1,588.8 1415.4,580.7Z"/><path d="M1414.6,606.0 1420.4,609.5 1419.2,616.2 1415.0,623.5 1408.9,625.7 1406.6,633.8 1402.0,638.2 1395.1,636.6 1390.5,633.8 1392.4,628.9 1398.2,624.1 1405.8,618.3 1409.6,612.6 1411.9,607.5Z"/><path d="M941.5,481.9 945.4,492.1 946.1,496.9 943.5,502.1 938.5,516.3 934.7,532.8 933.1,535.0 925.8,537.5 921.2,534.5 919.7,528.7 918.6,522.4 922.4,516.3 922.8,510.2 921.2,504.1 923.2,499.3 930.4,497.3 933.9,492.1 936.6,488.6 939.6,483.9Z"/><path d="M731.2,288.0 728.6,285.6 724.4,282.3 718.6,283.2 719.0,276.5 716.3,274.5 718.2,268.1 719.4,262.5 718.6,257.9 717.1,253.2 721.3,250.1 729.7,250.1 738.1,250.6 745.8,251.1 748.1,244.7 748.1,237.1 744.3,230.4 735.8,226.4 734.3,223.6 741.2,221.2 746.6,222.4 745.4,216.0 748.1,217.7 753.5,217.1 758.4,213.0 760.0,208.2 765.0,206.3 768.8,202.6 770.7,197.0 774.9,193.2 780.3,192.5 784.5,191.9 786.8,189.3 785.6,183.3 783.7,179.3 784.1,171.8 785.6,168.3 793.3,164.0 792.2,170.4 794.5,173.2 791.8,177.3 789.5,181.3 791.0,184.7 794.8,189.3 800.6,186.6 807.5,189.9 815.9,186.0 823.9,184.7 828.2,186.6 833.5,183.3 833.9,175.2 835.4,166.1 839.3,164.0 844.3,169.0 846.2,163.3 844.6,159.7 842.7,153.0 850.4,150.0 860.0,150.8 868.4,147.7 863.0,143.1 854.2,143.9 840.4,147.7 834.7,141.5 835.1,131.1 833.9,121.2 842.7,111.6 849.2,105.4 849.6,100.8 845.0,98.0 837.7,98.9 834.3,106.3 828.5,116.9 822.4,124.5 819.0,135.2 818.6,142.3 824.3,145.4 822.4,152.3 817.4,159.7 815.9,169.0 813.6,175.2 807.5,178.6 802.1,180.0 801.7,172.5 797.9,164.0 795.6,155.2 792.9,148.5 791.8,153.8 785.3,159.7 779.5,161.8 774.2,156.0 773.0,150.0 771.9,142.3 772.2,134.4 773.8,128.7 779.5,123.7 785.3,118.6 792.2,112.5 796.8,105.4 801.0,96.1 804.4,84.6 809.4,77.5 812.1,70.3 817.1,65.0 822.8,58.5 829.3,55.1 837.0,51.7 844.6,46.0 851.5,42.5 858.0,43.6 863.8,47.1 870.7,51.7 871.4,57.3 879.1,61.7 887.9,63.9 896.3,70.3 907.1,77.5 910.5,86.5 907.1,93.3 900.2,96.1 888.7,91.4 881.0,89.4 884.9,100.8 886.8,111.6 892.5,115.1 896.3,111.6 898.3,108.1 905.9,109.9 907.8,102.6 914.4,91.4 921.2,94.2 922.0,81.6 920.5,71.3 930.1,75.5 931.2,86.5 938.5,79.6 944.2,77.5 955.0,72.4 961.5,74.5 967.2,71.3 976.0,67.1 983.3,68.2 986.4,57.3 995.9,60.6 1003.6,65.0 1010.1,72.4 1014.3,75.5 1016.6,68.2 1011.3,59.6 1009.0,46.0 1010.5,38.9 1015.1,25.3 1018.2,14.9 1024.7,18.8 1031.6,22.7 1030.0,41.3 1031.6,51.7 1030.4,66.1 1034.6,73.4 1033.1,83.6 1026.6,90.4 1030.0,94.2 1036.9,82.6 1039.2,71.3 1038.1,65.0 1035.4,56.2 1037.7,47.1 1033.1,38.9 1036.2,29.1 1040.8,21.4 1042.7,29.1 1041.1,40.1 1046.9,42.5 1054.6,44.8 1048.4,36.5 1053.4,27.8 1062.2,31.6 1064.9,35.3 1069.9,40.1 1071.4,51.7 1068.0,56.2 1072.9,57.3 1076.4,49.4 1071.8,41.3 1068.7,26.6 1061.8,20.1 1061.1,10.8 1078.3,5.3 1086.0,1.1 1089.8,-3.2 1135.8,-3.2 1181.7,-3.2 1185.6,12.2 1197.0,9.5 1208.5,16.2 1225.0,12.2 1234.2,12.2 1241.1,12.2 1247.6,24.0 1246.8,41.3 1256.4,44.8 1260.3,34.0 1269.8,36.5 1280.6,37.7 1288.2,37.7 1287.1,26.6 1294.7,22.7 1312.0,27.8 1327.3,36.5 1336.9,44.8 1350.3,42.5 1361.8,44.8 1366.4,55.1 1375.2,59.6 1386.7,59.6 1395.5,58.5 1402.0,68.2 1407.0,63.9 1404.7,54.0 1415.4,56.2 1427.3,56.2 1438.4,62.8 1449.9,67.1 1459.4,78.5 1467.5,84.6 1478.6,89.4 1481.7,96.1 1473.6,100.8 1472.1,110.7 1466.0,110.7 1460.6,102.6 1448.0,106.3 1436.5,109.0 1432.2,108.1 1437.2,118.6 1439.5,126.2 1431.5,127.9 1421.5,132.8 1413.5,139.2 1406.2,147.0 1392.4,144.6 1384.7,148.5 1378.2,153.0 1377.1,163.3 1374.0,166.8 1376.3,174.5 1372.5,181.3 1365.6,188.0 1360.2,196.3 1353.0,208.2 1351.0,198.9 1349.9,186.0 1348.7,173.2 1353.3,166.8 1359.9,161.8 1367.5,150.0 1375.2,143.1 1379.8,133.6 1378.2,127.0 1370.2,135.2 1366.4,139.2 1362.9,132.8 1355.3,134.4 1346.4,148.5 1338.8,153.8 1332.3,150.8 1323.5,151.5 1313.9,152.3 1301.2,151.5 1294.7,158.2 1287.1,165.4 1279.0,174.5 1271.7,183.3 1279.4,189.9 1285.2,188.0 1291.7,192.5 1294.3,200.8 1290.9,212.4 1290.1,222.4 1283.6,231.5 1278.3,239.3 1271.7,249.0 1264.1,254.3 1258.3,252.2 1255.3,255.3 1252.6,256.9 1249.5,263.5 1244.9,268.6 1241.5,270.1 1244.5,275.5 1248.4,283.2 1248.8,289.4 1247.2,292.2 1241.1,294.1 1236.9,295.5 1237.3,290.4 1238.4,284.2 1235.7,279.9 1233.1,279.4 1230.8,277.0 1232.7,271.0 1228.8,269.1 1223.5,270.6 1218.5,274.0 1217.0,271.0 1220.4,266.6 1218.1,264.0 1214.7,267.1 1210.5,269.6 1206.6,273.0 1203.2,274.5 1205.1,277.9 1208.2,281.3 1211.6,282.3 1215.1,279.4 1221.2,281.3 1221.9,283.7 1216.2,285.2 1213.1,288.5 1210.1,292.7 1213.1,296.0 1215.4,303.3 1219.3,307.9 1219.7,311.4 1216.6,313.2 1219.7,315.9 1218.1,321.6 1215.1,325.5 1212.4,330.2 1210.8,334.5 1207.4,338.7 1203.9,341.3 1200.5,344.2 1195.5,346.3 1190.5,347.9 1187.9,348.7 1184.0,350.4 1178.3,351.6 1175.6,352.9 1174.4,356.2 1172.5,351.6 1168.3,351.2 1163.7,352.5 1161.4,355.3 1158.4,359.0 1157.6,362.7 1160.7,366.7 1164.5,371.5 1167.6,374.3 1169.9,377.1 1171.4,382.6 1171.0,388.1 1170.2,392.0 1166.4,394.0 1162.2,395.9 1160.7,399.1 1156.1,402.5 1154.1,402.2 1154.1,397.1 1152.6,395.6 1148.4,394.4 1146.5,389.3 1144.6,388.5 1141.9,386.9 1139.2,384.2 1136.1,384.2 1135.4,387.7 1132.7,394.4 1132.7,400.2 1136.5,403.3 1137.7,408.0 1140.7,409.5 1144.2,412.2 1147.6,415.7 1149.2,420.3 1148.8,424.1 1150.7,427.6 1151.8,430.6 1149.2,431.0 1144.6,427.6 1140.7,424.9 1138.4,421.0 1137.3,416.8 1136.9,411.8 1134.6,409.1 1131.5,405.6 1129.2,404.5 1129.6,399.4 1130.4,395.6 1130.8,390.1 1130.4,383.8 1127.3,378.7 1126.6,371.9 1124.3,370.3 1121.6,371.5 1117.8,374.7 1113.9,373.9 1113.9,368.3 1112.0,362.3 1109.3,358.6 1106.6,354.9 1105.1,351.2 1104.3,348.3 1102.4,346.7 1099.4,347.5 1096.7,350.0 1093.6,351.2 1090.6,350.8 1086.3,352.9 1085.2,356.6 1080.2,359.0 1075.6,363.5 1071.8,366.7 1068.0,369.9 1064.1,372.7 1060.7,377.1 1059.9,383.8 1058.8,388.9 1058.4,395.6 1056.1,396.3 1053.4,401.4 1049.6,404.9 1046.1,401.8 1044.2,395.9 1041.9,390.5 1039.2,386.2 1038.1,379.5 1035.4,374.7 1033.1,367.5 1032.0,361.8 1031.2,355.7 1030.8,352.0 1031.2,348.7 1029.3,348.3 1025.4,353.7 1022.8,354.5 1019.3,351.2 1017.0,347.9 1020.1,346.3 1015.5,344.2 1011.3,341.7 1009.0,337.9 1007.4,335.3 999.8,335.8 990.2,336.2 988.3,336.6 980.6,335.3 974.1,334.1 971.8,329.4 968.4,328.1 963.4,329.8 957.6,329.4 952.7,325.9 948.8,324.2 947.3,319.8 945.0,314.6 940.4,314.1 937.7,316.3 936.6,319.0 938.5,322.9 941.5,326.4 944.2,330.2 945.0,334.9 947.3,337.9 948.8,332.4 950.4,334.9 950.4,340.0 954.2,340.4 959.6,340.8 965.3,335.3 968.4,331.1 969.1,337.0 969.9,340.4 974.1,342.5 977.2,342.9 981.8,347.5 979.9,352.0 976.8,356.2 974.1,358.6 973.7,362.3 969.5,364.3 964.5,368.7 960.3,369.9 953.4,372.3 950.0,376.7 942.3,379.5 938.9,381.8 932.7,384.2 927.0,385.8 923.2,386.9 919.3,386.9 918.2,383.8 916.6,378.7 916.3,375.1 915.9,370.7 912.8,366.7 909.0,359.0 904.4,354.9 902.5,351.2 901.7,345.8 899.0,340.8 896.0,337.5 894.0,333.2 891.8,330.2 889.1,325.9 887.2,323.8 886.0,319.4 885.2,323.3 883.7,325.1 881.4,322.5 878.7,317.2 877.6,315.9 876.4,310.1 878.3,311.0 883.7,309.7 885.2,307.0 886.8,302.9 888.7,297.8 890.2,292.7 889.8,289.0 891.4,285.2 889.1,285.2 885.2,284.2 882.2,287.1 877.6,287.5 873.0,284.2 869.9,284.7 866.5,287.5 861.1,284.7 857.7,283.2 857.3,278.9 855.4,276.5 855.7,271.0 853.1,271.0 854.6,267.1 857.3,266.6 861.9,266.6 864.6,264.0 863.8,262.5 861.1,261.5 860.0,258.9 860.0,255.8 858.0,255.8 860.0,251.1 862.3,249.0 863.0,244.7 866.5,240.9 869.5,237.1 871.4,233.8 877.6,234.9 881.4,237.6 877.2,240.4 881.4,245.3 888.7,242.6 892.9,240.4 887.5,237.6 886.4,235.4 896.0,231.5 902.9,230.4 899.0,234.3 897.5,237.1 897.5,241.5 894.4,243.1 898.3,244.7 904.8,250.1 908.6,253.2 912.1,257.4 912.1,261.0 907.8,263.5 904.0,263.0 899.4,264.0 894.4,262.5 891.8,262.0 887.5,258.4 882.9,258.9 879.1,259.4 875.3,261.5 869.9,263.0 864.6,262.5 863.8,263.5 858.8,264.0 856.1,265.0 853.8,267.6 853.1,265.5 849.6,264.0 844.6,264.5 840.4,265.5 839.3,268.6 842.0,272.5 840.0,274.0 844.6,277.4 841.6,278.9 840.0,281.8 841.2,285.6 838.9,286.1 835.8,283.7 833.5,279.4 834.3,277.0 832.0,274.0 829.7,270.6 827.0,266.6 827.4,262.0 825.5,258.4 823.6,255.8 819.7,253.2 815.5,250.6 810.9,246.9 809.8,242.6 807.5,240.9 804.8,238.7 802.5,238.7 799.8,240.9 799.8,245.3 801.7,248.5 804.8,250.6 806.7,255.8 810.5,258.9 814.0,258.9 814.0,261.0 818.6,263.5 823.6,267.6 822.8,269.6 818.6,266.6 816.3,270.1 818.2,274.0 816.3,276.5 814.0,278.9 812.5,277.4 813.6,275.0 812.8,268.6 810.2,267.6 807.5,264.5 805.2,262.5 801.0,261.0 799.1,258.9 795.6,256.3 792.9,253.7 791.8,248.5 786.8,245.8 784.1,248.5 781.4,249.0 777.6,252.7 772.6,251.6 770.3,251.1 765.3,251.6 764.6,256.9 760.7,262.5 755.8,263.5 751.6,271.0 753.5,275.0 750.0,280.4 746.6,282.3 744.3,284.7 735.8,284.7 733.5,286.1Z"/><path d="M730.9,213.6 736.6,211.8 741.2,210.0 747.7,209.4 758.1,206.9 759.2,198.2 753.8,193.2 751.9,188.6 746.6,178.6 744.3,173.8 745.8,164.7 738.1,164.0 740.8,157.5 733.5,157.5 730.9,165.4 731.2,173.8 730.9,180.7 733.9,184.0 739.7,183.3 741.2,189.9 740.8,193.8 734.7,193.8 737.0,200.1 732.8,203.2 739.3,205.7 735.5,207.5 732.8,210.6Z"/><path d="M729.7,200.8 729.0,193.8 729.7,188.6 731.6,186.0 729.0,181.3 724.0,180.7 720.1,184.0 719.8,188.0 714.4,188.0 714.8,193.2 715.9,198.2 712.9,201.4 715.2,205.1 722.1,204.5 728.2,201.4Z"/><path d="M666.5,116.0 676.1,118.6 683.7,119.5 695.2,111.6 701.0,104.5 697.2,95.2 691.4,91.4 681.8,94.2 672.3,97.1 666.5,92.3 659.6,100.8 668.4,105.4 660.8,107.2 665.7,113.4Z"/><path d="M586.1,148.5 578.4,143.1 566.9,135.2 560.4,124.5 555.4,114.3 550.4,96.1 547.8,81.6 549.7,71.3 557.3,66.1 555.4,51.7 545.8,46.0 551.6,37.7 542.0,31.6 538.2,12.2 532.4,-3.2 676.1,-3.2 678.0,18.8 668.4,34.0 668.4,49.4 660.8,55.1 651.2,72.4 637.8,76.5 628.2,80.6 620.5,95.2 607.1,98.9 599.5,109.0 597.6,118.6 591.8,127.0 589.9,139.2Z"/><path d="M525.5,228.1 538.2,228.7 547.4,233.2 550.8,228.7 549.7,223.0 540.1,216.6 539.3,205.1 532.4,210.0 527.5,220.1 529.4,223.0Z"/><path d="M505.6,214.8 516.4,217.7 515.2,219.5Z"/><path d="M506.4,233.8 515.2,234.3 511.4,236.5Z"/><path d="M279.6,224.1 274.6,222.4 265.4,214.2 260.9,209.4 264.3,208.8 272.0,212.4 277.7,217.1Z"/><path d="M247.8,188.6 243.2,188.6 248.6,200.1 250.9,200.1Z"/><path d="M168.5,167.6 160.1,170.4 161.6,163.3 168.5,161.8Z"/><path d="M427.5,350.0 434.8,345.8 441.3,344.6 447.8,346.3 455.8,350.4 462.7,353.3 468.5,356.6 465.4,358.2 455.1,358.2 457.0,355.3 452.0,351.6 444.3,349.6 438.6,348.3 432.8,350.0Z"/><path d="M467.3,364.3 473.8,358.2 481.5,358.6 488.4,361.8 490.7,363.5 484.6,365.1 478.8,367.5 475.0,365.1Z"/><path d="M452.8,364.3 458.1,363.9 460.8,366.3 456.2,366.7Z"/><path d="M495.3,363.9 501.4,364.3 501.0,365.9 495.3,365.9Z"/><path d="M455.8,328.9 457.7,330.7 454.7,337.0 453.1,336.2Z"/><path d="M1058.4,411.0 1063.7,412.6 1066.4,407.2 1063.7,402.9 1059.9,398.3 1058.8,403.3Z"/><path d="M1216.2,337.0 1219.7,337.0 1218.1,343.3 1215.4,349.6 1213.1,346.3 1213.1,342.1Z"/><path d="M1168.7,361.0 1174.8,357.4 1177.9,359.4 1176.0,363.9 1172.2,365.1 1168.7,363.9Z"/><path d="M1254.1,296.0 1260.3,291.3 1267.9,289.9 1273.7,289.0 1277.1,282.3 1278.6,284.2 1283.2,281.3 1287.1,276.0 1288.6,268.6 1289.8,262.5 1294.7,261.5 1295.9,268.6 1296.6,272.0 1292.8,277.0 1292.4,283.7 1291.3,289.4 1289.0,292.7 1285.2,294.1 1282.1,294.6 1277.5,294.6 1272.9,299.7 1269.8,295.0 1264.1,295.5 1259.1,297.8Z"/><path d="M1289.0,261.0 1293.6,259.4 1301.2,258.4 1306.2,253.7 1310.1,251.6 1307.0,247.9 1296.6,240.4 1295.1,242.6 1294.3,251.6 1290.1,251.6 1288.6,256.9Z"/><path d="M1249.1,300.6 1254.1,297.4 1258.0,301.5 1256.4,308.8 1253.4,311.0 1251.4,309.7 1249.9,302.9Z"/><path d="M1260.3,300.6 1266.0,296.0 1268.7,296.4 1267.5,300.6 1262.2,302.9Z"/><path d="M1297.4,237.1 1302.4,232.6 1301.2,218.3 1306.2,220.1 1301.2,198.9 1299.7,187.3 1297.4,197.0 1295.9,211.2 1296.6,225.9 1296.3,233.8Z"/><path d="M1214.7,363.9 1220.8,363.9 1221.2,369.9 1218.5,374.7 1220.0,381.8 1227.7,382.6 1226.9,386.6 1222.3,385.0 1217.4,383.4 1214.7,380.2 1215.8,377.1 1211.6,376.3 1213.9,371.9Z"/><path d="M1219.7,409.1 1224.2,406.0 1227.3,403.3 1233.4,399.8 1237.3,407.2 1235.7,411.8 1232.7,414.5 1227.7,410.7 1221.2,409.9Z"/><path d="M1220.0,390.5 1224.6,393.6 1223.9,399.4 1221.6,395.6Z"/><path d="M1229.6,387.7 1233.4,391.6 1231.5,397.5 1229.2,393.6Z"/><path d="M1201.6,403.3 1210.5,392.0 1211.6,395.6 1203.9,403.3Z"/><path d="M1213.9,383.8 1218.1,385.8 1217.0,388.5 1213.9,386.6Z"/><path d="M1117.8,414.5 1126.2,416.1 1130.8,421.4 1137.3,427.6 1141.5,429.1 1150.3,434.1 1153.0,439.8 1158.7,447.5 1158.0,458.3 1153.4,458.6 1144.6,451.3 1139.6,445.6 1133.1,435.2 1130.4,429.5 1124.3,422.2 1119.3,419.1Z"/><path d="M1156.1,462.1 1158.7,459.0 1167.6,460.2 1176.0,462.5 1184.0,462.5 1191.3,465.6 1190.9,469.1 1177.9,467.5 1168.3,466.0 1160.7,464.4Z"/><path d="M1193.2,468.3 1208.5,468.3 1223.1,468.7 1223.1,470.2 1208.5,470.2 1195.1,469.8Z"/><path d="M1226.2,476.1 1231.5,471.0 1240.0,468.3 1233.4,472.6 1228.5,474.9Z"/><path d="M1170.2,429.9 1172.9,428.3 1177.9,429.9 1185.6,423.7 1189.4,418.4 1195.1,416.1 1200.1,409.5 1203.6,412.2 1209.7,416.1 1205.9,419.1 1203.6,424.1 1207.8,432.2 1203.2,436.0 1200.1,442.9 1198.2,449.8 1191.7,451.0 1181.7,449.0 1174.8,447.1 1173.3,440.6 1170.2,436.0Z"/><path d="M1210.5,457.1 1213.9,457.5 1213.5,447.1 1217.7,453.6 1223.1,453.3 1218.1,443.3 1225.0,439.4 1216.6,439.1 1214.7,434.1 1225.8,434.9 1232.3,430.3 1228.8,434.5 1216.2,431.4 1211.6,435.6 1210.5,445.6 1207.8,447.5Z"/><path d="M1241.1,427.6 1245.3,430.6 1243.8,434.1 1246.5,437.9 1242.3,437.1 1241.5,432.2Z"/><path d="M1243.0,448.6 1253.7,449.4 1252.6,446.7 1244.9,447.1Z"/><path d="M1254.5,440.6 1260.3,437.5 1266.8,439.4 1271.7,448.6 1279.4,441.7 1289.0,445.2 1296.6,447.9 1306.2,450.6 1312.0,455.9 1318.9,459.0 1316.6,463.7 1320.4,467.1 1327.7,475.3 1321.5,475.7 1313.9,470.6 1304.3,466.4 1301.2,470.6 1292.8,471.0 1285.9,467.1 1281.3,468.3 1279.8,464.0 1283.2,462.1 1280.6,456.3 1270.6,452.9 1264.9,450.2 1261.4,451.3 1258.3,446.7 1264.9,444.4 1258.3,443.7Z"/><path d="M1321.5,457.1 1329.2,457.1 1335.0,452.1 1336.1,456.3 1331.1,459.8 1325.4,459.8Z"/><path d="M1380.9,515.0 1386.7,518.3 1392.4,523.7 1389.7,523.3 1382.1,517.5Z"/><path d="M951.9,37.7 957.6,10.8 963.4,-3.2 990.2,-3.2 973.0,16.2 967.2,41.3 973.0,48.3 957.6,46.0Z"/><path d="M976.8,51.7 984.5,56.2 978.7,58.5Z"/><path d="M800.2,278.9 804.0,277.4 812.5,277.0 810.5,284.7 807.5,283.2 801.0,280.4Z"/><path d="M784.1,263.5 790.2,263.0 789.5,273.0 786.8,274.0 784.9,273.0Z"/><path d="M785.6,256.3 788.7,253.2 789.5,257.4 787.9,261.5 786.0,259.9Z"/><path d="M842.7,291.3 853.4,291.3 852.7,292.7 846.5,293.2 842.7,292.2Z"/><path d="M876.4,292.7 882.6,290.8 885.2,289.4 882.6,293.2 878.7,294.6Z"/><path d="M517.9,665.1 525.5,665.7 531.3,667.5 524.8,671.9 519.8,670.0Z"/><path d="M489.9,673.8 498.0,687.3 489.9,690.7 482.6,690.0 475.0,684.0 482.6,679.5 486.5,675.0Z"/><path d="M1330.0,476.8 1331.1,475.7 1329.2,476.1Z"/><path d="M469.2,612.6 471.2,613.6 471.2,620.9 467.7,620.4Z"/><path d="M-647.8,288.0 -650.4,285.6 -654.7,282.3 -660.4,283.2 -660.0,276.5 -662.7,274.5 -660.8,268.1 -659.6,262.5 -660.4,257.9 -661.9,253.2 -657.7,250.1 -649.3,250.1 -640.9,250.6 -633.2,251.1 -630.9,244.7 -630.9,237.1 -634.7,230.4 -643.2,226.4 -644.7,223.6 -637.8,221.2 -632.4,222.4 -633.6,216.0 -630.9,217.7 -625.5,217.1 -620.6,213.0 -619.0,208.2 -614.1,206.3 -610.2,202.6 -608.3,197.0 -604.1,193.2 -598.7,192.5 -594.5,191.9 -592.2,189.3 -593.4,183.3 -595.3,179.3 -594.9,171.8 -593.4,168.3 -585.7,164.0 -586.9,170.4 -584.6,173.2 -587.2,177.3 -589.5,181.3 -588.0,184.7 -584.2,189.3 -578.4,186.6 -571.5,189.9 -563.1,186.0 -555.1,184.7 -550.9,186.6 -545.5,183.3 -545.1,175.2 -543.6,166.1 -539.7,164.0 -534.8,169.0 -532.8,163.3 -534.4,159.7 -536.3,153.0 -528.6,150.0 -519.1,150.8 -510.6,147.7 -516.0,143.1 -524.8,143.9 -538.6,147.7 -544.3,141.5 -544.0,131.1 -545.1,121.2 -536.3,111.6 -529.8,105.4 -529.4,100.8 -534.0,98.0 -541.3,98.9 -544.7,106.3 -550.5,116.9 -556.6,124.5 -560.0,135.2 -560.4,142.3 -554.7,145.4 -556.6,152.3 -561.6,159.7 -563.1,169.0 -565.4,175.2 -571.5,178.6 -576.9,180.0 -577.3,172.5 -581.1,164.0 -583.4,155.2 -586.1,148.5 -587.2,153.8 -593.8,159.7 -599.5,161.8 -604.9,156.0 -606.0,150.0 -607.2,142.3 -606.8,134.4 -605.2,128.7 -599.5,123.7 -593.8,118.6 -586.9,112.5 -582.3,105.4 -578.1,96.1 -574.6,84.6 -569.6,77.5 -566.9,70.3 -562.0,65.0 -556.2,58.5 -549.7,55.1 -542.0,51.7 -534.4,46.0 -527.5,42.5 -521.0,43.6 -515.2,47.1 -508.3,51.7 -507.6,57.3 -499.9,61.7 -491.1,63.9 -482.7,70.3 -471.9,77.5 -468.5,86.5 -471.9,93.3 -478.8,96.1 -490.3,91.4 -498.0,89.4 -494.2,100.8 -492.2,111.6 -486.5,115.1 -482.7,111.6 -480.8,108.1 -473.1,109.9 -471.2,102.6 -464.7,91.4 -457.8,94.2 -457.0,81.6 -458.5,71.3 -449.0,75.5 -447.8,86.5 -440.5,79.6 -434.8,77.5 -424.1,72.4 -417.5,74.5 -411.8,71.3 -403.0,67.1 -395.7,68.2 -392.6,57.3 -383.1,60.6 -375.4,65.0 -368.9,72.4 -364.7,75.5 -362.4,68.2 -367.8,59.6 -370.0,46.0 -368.5,38.9 -363.9,25.3 -360.9,14.9 -354.3,18.8 -347.4,22.7 -349.0,41.3 -347.4,51.7 -348.6,66.1 -344.4,73.4 -345.9,83.6 -352.4,90.4 -349.0,94.2 -342.1,82.6 -339.8,71.3 -340.9,65.0 -343.6,56.2 -341.3,47.1 -345.9,38.9 -342.9,29.1 -338.3,21.4 -336.3,29.1 -337.9,40.1 -332.1,42.5 -324.5,44.8 -330.6,36.5 -325.6,27.8 -316.8,31.6 -314.1,35.3 -309.1,40.1 -307.6,51.7 -311.1,56.2 -306.1,57.3 -302.6,49.4 -307.2,41.3 -310.3,26.6 -317.2,20.1 -318.0,10.8 -300.7,5.3 -293.1,1.1 -289.2,-3.2 -243.3,-3.2 -197.3,-3.2 -193.5,12.2 -182.0,9.5 -170.5,16.2 -154.0,12.2 -144.8,12.2 -137.9,12.2 -131.4,24.0 -132.2,41.3 -122.6,44.8 -118.8,34.0 -109.2,36.5 -98.5,37.7 -90.8,37.7 -91.9,26.6 -84.3,22.7 -67.0,27.8 -51.7,36.5 -42.1,44.8 -28.7,42.5 -17.3,44.8 -12.7,55.1 -3.8,59.6 7.6,59.6 16.5,58.5 23.0,68.2 28.0,63.9 25.7,54.0 36.4,56.2 48.3,56.2 59.4,62.8 70.9,67.1 80.4,78.5 88.5,84.6 99.6,89.4 102.6,96.1 94.6,100.8 93.1,110.7 86.9,110.7 81.6,102.6 68.9,106.3 57.4,109.0 53.2,108.1 58.2,118.6 60.5,126.2 52.5,127.9 42.5,132.8 34.5,139.2 27.2,147.0 13.4,144.6 5.7,148.5 -0.8,153.0 -1.9,163.3 -5.0,166.8 -2.7,174.5 -6.5,181.3 -13.4,188.0 -18.8,196.3 -26.1,208.2 -28.0,198.9 -29.1,186.0 -30.3,173.2 -25.7,166.8 -19.2,161.8 -11.5,150.0 -3.8,143.1 0.8,133.6 -0.8,127.0 -8.8,135.2 -12.7,139.2 -16.1,132.8 -23.8,134.4 -32.6,148.5 -40.2,153.8 -46.7,150.8 -55.6,151.5 -65.1,152.3 -77.8,151.5 -84.3,158.2 -91.9,165.4 -100.0,174.5 -107.3,183.3 -99.6,189.9 -93.9,188.0 -87.4,192.5 -84.7,200.8 -88.1,212.4 -88.9,222.4 -95.4,231.5 -100.8,239.3 -107.3,249.0 -114.9,254.3 -120.7,252.2 -123.7,255.3 -126.4,256.9 -129.5,263.5 -134.1,268.6 -137.5,270.1 -134.5,275.5 -130.6,283.2 -130.3,289.4 -131.8,292.2 -137.9,294.1 -142.1,295.5 -141.7,290.4 -140.6,284.2 -143.3,279.9 -146.0,279.4 -148.3,277.0 -146.3,271.0 -150.2,269.1 -155.5,270.6 -160.5,274.0 -162.0,271.0 -158.6,266.6 -160.9,264.0 -164.3,267.1 -168.6,269.6 -172.4,273.0 -175.8,274.5 -173.9,277.9 -170.9,281.3 -167.4,282.3 -164.0,279.4 -157.8,281.3 -157.1,283.7 -162.8,285.2 -165.9,288.5 -168.9,292.7 -165.9,296.0 -163.6,303.3 -159.7,307.9 -159.4,311.4 -162.4,313.2 -159.4,315.9 -160.9,321.6 -164.0,325.5 -166.6,330.2 -168.2,334.5 -171.6,338.7 -175.1,341.3 -178.5,344.2 -183.5,346.3 -188.5,347.9 -191.2,348.7 -195.0,350.4 -200.7,351.6 -203.4,352.9 -204.6,356.2 -206.5,351.6 -210.7,351.2 -215.3,352.5 -217.6,355.3 -220.7,359.0 -221.4,362.7 -218.4,366.7 -214.5,371.5 -211.5,374.3 -209.2,377.1 -207.6,382.6 -208.0,388.1 -208.8,392.0 -212.6,394.0 -216.8,395.9 -218.4,399.1 -223.0,402.5 -224.9,402.2 -224.9,397.1 -226.4,395.6 -230.6,394.4 -232.5,389.3 -234.4,388.5 -237.1,386.9 -239.8,384.2 -242.9,384.2 -243.6,387.7 -246.3,394.4 -246.3,400.2 -242.5,403.3 -241.3,408.0 -238.3,409.5 -234.8,412.2 -231.4,415.7 -229.8,420.3 -230.2,424.1 -228.3,427.6 -227.2,430.6 -229.8,431.0 -234.4,427.6 -238.3,424.9 -240.6,421.0 -241.7,416.8 -242.1,411.8 -244.4,409.1 -247.5,405.6 -249.8,404.5 -249.4,399.4 -248.6,395.6 -248.2,390.1 -248.6,383.8 -251.7,378.7 -252.4,371.9 -254.7,370.3 -257.4,371.5 -261.3,374.7 -265.1,373.9 -265.1,368.3 -267.0,362.3 -269.7,358.6 -272.4,354.9 -273.9,351.2 -274.7,348.3 -276.6,346.7 -279.6,347.5 -282.3,350.0 -285.4,351.2 -288.5,350.8 -292.7,352.9 -293.8,356.6 -298.8,359.0 -303.4,363.5 -307.2,366.7 -311.1,369.9 -314.9,372.7 -318.3,377.1 -319.1,383.8 -320.3,388.9 -320.6,395.6 -322.9,396.3 -325.6,401.4 -329.4,404.9 -332.9,401.8 -334.8,395.9 -337.1,390.5 -339.8,386.2 -340.9,379.5 -343.6,374.7 -345.9,367.5 -347.1,361.8 -347.8,355.7 -348.2,352.0 -347.8,348.7 -349.7,348.3 -353.6,353.7 -356.3,354.5 -359.7,351.2 -362.0,347.9 -358.9,346.3 -363.5,344.2 -367.8,341.7 -370.0,337.9 -371.6,335.3 -379.2,335.8 -388.8,336.2 -390.7,336.6 -398.4,335.3 -404.9,334.1 -407.2,329.4 -410.7,328.1 -415.6,329.8 -421.4,329.4 -426.4,325.9 -430.2,324.2 -431.7,319.8 -434.0,314.6 -438.6,314.1 -441.3,316.3 -442.4,319.0 -440.5,322.9 -437.5,326.4 -434.8,330.2 -434.0,334.9 -431.7,337.9 -430.2,332.4 -428.7,334.9 -428.7,340.0 -424.8,340.4 -419.5,340.8 -413.7,335.3 -410.7,331.1 -409.9,337.0 -409.1,340.4 -404.9,342.5 -401.8,342.9 -397.2,347.5 -399.2,352.0 -402.2,356.2 -404.9,358.6 -405.3,362.3 -409.5,364.3 -414.5,368.7 -418.7,369.9 -425.6,372.3 -429.0,376.7 -436.7,379.5 -440.1,381.8 -446.3,384.2 -452.0,385.8 -455.9,386.9 -459.7,386.9 -460.8,383.8 -462.4,378.7 -462.7,375.1 -463.1,370.7 -466.2,366.7 -470.0,359.0 -474.6,354.9 -476.5,351.2 -477.3,345.8 -480.0,340.8 -483.1,337.5 -485.0,333.2 -487.3,330.2 -489.9,325.9 -491.9,323.8 -493.0,319.4 -493.8,323.3 -495.3,325.1 -497.6,322.5 -500.3,317.2 -501.4,315.9 -502.6,310.1 -500.7,311.0 -495.3,309.7 -493.8,307.0 -492.2,302.9 -490.3,297.8 -488.8,292.7 -489.2,289.0 -487.6,285.2 -489.9,285.2 -493.8,284.2 -496.8,287.1 -501.4,287.5 -506.0,284.2 -509.1,284.7 -512.5,287.5 -517.9,284.7 -521.4,283.2 -521.7,278.9 -523.7,276.5 -523.3,271.0 -526.0,271.0 -524.4,267.1 -521.7,266.6 -517.1,266.6 -514.5,264.0 -515.2,262.5 -517.9,261.5 -519.1,258.9 -519.1,255.8 -521.0,255.8 -519.1,251.1 -516.8,249.0 -516.0,244.7 -512.5,240.9 -509.5,237.1 -507.6,233.8 -501.4,234.9 -497.6,237.6 -501.8,240.4 -497.6,245.3 -490.3,242.6 -486.1,240.4 -491.5,237.6 -492.6,235.4 -483.1,231.5 -476.2,230.4 -480.0,234.3 -481.5,237.1 -481.5,241.5 -484.6,243.1 -480.8,244.7 -474.2,250.1 -470.4,253.2 -467.0,257.4 -467.0,261.0 -471.2,263.5 -475.0,263.0 -479.6,264.0 -484.6,262.5 -487.3,262.0 -491.5,258.4 -496.1,258.9 -499.9,259.4 -503.7,261.5 -509.1,263.0 -514.5,262.5 -515.2,263.5 -520.2,264.0 -522.9,265.0 -525.2,267.6 -526.0,265.5 -529.4,264.0 -534.4,264.5 -538.6,265.5 -539.7,268.6 -537.1,272.5 -539.0,274.0 -534.4,277.4 -537.4,278.9 -539.0,281.8 -537.8,285.6 -540.1,286.1 -543.2,283.7 -545.5,279.4 -544.7,277.0 -547.0,274.0 -549.3,270.6 -552.0,266.6 -551.6,262.0 -553.5,258.4 -555.4,255.8 -559.3,253.2 -563.5,250.6 -568.1,246.9 -569.2,242.6 -571.5,240.9 -574.2,238.7 -576.5,238.7 -579.2,240.9 -579.2,245.3 -577.3,248.5 -574.2,250.6 -572.3,255.8 -568.5,258.9 -565.0,258.9 -565.0,261.0 -560.4,263.5 -555.4,267.6 -556.2,269.6 -560.4,266.6 -562.7,270.1 -560.8,274.0 -562.7,276.5 -565.0,278.9 -566.6,277.4 -565.4,275.0 -566.2,268.6 -568.9,267.6 -571.5,264.5 -573.8,262.5 -578.1,261.0 -580.0,258.9 -583.4,256.3 -586.1,253.7 -587.2,248.5 -592.2,245.8 -594.9,248.5 -597.6,249.0 -601.4,252.7 -606.4,251.6 -608.7,251.1 -613.7,251.6 -614.4,256.9 -618.3,262.5 -623.3,263.5 -627.5,271.0 -625.5,275.0 -629.0,280.4 -632.4,282.3 -634.7,284.7 -643.2,284.7 -645.5,286.1Z"/><path d="M35.2,576.5 41.4,581.6 46.0,586.4 49.0,591.6 56.7,591.6 55.1,599.0 51.7,600.0 50.9,604.4 46.3,611.0 43.3,610.0 44.0,603.4 39.4,599.5 42.5,594.1 42.1,588.8 36.4,580.7Z"/><path d="M35.6,606.0 41.4,609.5 40.2,616.2 36.0,623.5 29.9,625.7 27.6,633.8 23.0,638.2 16.1,636.6 11.5,633.8 13.4,628.9 19.1,624.1 26.8,618.3 30.6,612.6 32.9,607.5Z"/><path d="M276.5,0.0 295.7,0.0 297.3,4.2 304.0,2.5 311.5,10.8 300.7,20.0 295.7,25.0 293.2,27.5 289.8,36.7 282.3,40.8 279.0,36.7 272.3,30.8 271.5,27.5 274.8,16.7 278.2,8.3Z"/><path d="M300.7,41.7 300.7,35.0 309.0,36.7 297.3,31.7 299.0,25.0 312.3,14.2 315.7,16.7 314.8,23.3 320.7,18.3 329.0,20.0 334.0,24.2 337.3,20.8 339.8,14.2 344.0,16.7 349.8,18.3 352.3,33.3 352.3,41.7 357.3,46.7 364.0,54.2 360.7,60.0 355.7,58.3 344.0,58.3 340.7,63.3 335.7,66.7 320.7,65.0 314.0,58.3 305.7,56.7 304.0,54.2 312.3,50.0 324.8,50.0 317.3,46.7 305.7,45.0Z"/><path d="M315.0,0.0 336.0,0.0 339.0,7.0 330.0,12.0 321.0,10.0Z"/><path d="M346.0,0.0 372.0,0.0 370.0,10.0 360.0,13.0 350.0,9.0Z"/><path d="M370.0,4.0 380.7,6.7 381.5,16.7 376.5,18.3 382.3,20.8 383.2,33.3 374.0,39.0 367.0,28.0 369.0,16.0Z"/><path d="M388.2,4.2 395.7,2.9 406.5,5.8 402.3,16.7 399.0,20.4 394.0,21.7 390.7,33.3 386.5,32.5 385.7,16.7 387.3,8.3Z"/><path d="M383.2,40.0 393.2,34.2 397.3,41.7 400.7,51.7 404.0,58.3 407.3,63.3 411.5,66.7 413.2,75.0 419.8,83.3 424.0,88.0 374.0,88.0 374.0,58.3 379.0,56.7 384.8,58.3 390.7,63.3Z"/><path d="M410.7,12.5 426.5,7.5 444.0,8.3 453.2,9.2 460.7,18.3 465.7,25.0 468.2,31.7 480.7,41.7 489.8,47.5 491.0,66.0 504.5,76.4 518.1,90.0 509.8,104.6 504.5,112.0 505.6,120.3 504.5,127.6 497.2,128.7 488.9,121.4 478.4,116.1 468.0,112.0 455.5,109.9 454.4,105.7 457.6,100.5 453.0,92.0 439.0,84.0 429.0,78.0 420.7,75.0 425.7,66.7 437.3,57.5 449.0,49.2 437.3,53.3 418.2,50.0 414.0,42.5Z"/><path d="M424.0,88.0 439.0,86.0 446.0,96.0 436.0,102.0 419.0,100.0 410.0,92.0Z"/><path d="M420.0,115.1 423.1,105.7 432.5,101.5 440.8,97.3 445.0,103.6 441.9,109.9 445.0,115.1 436.7,120.3 426.2,120.3Z"/><path d="M431.4,122.4 437.7,122.4 435.6,128.7 430.4,127.6Z"/></g><path fill="#2b2b2b" d="M931.6,245.3 934.7,239.8 941.2,235.4 948.8,231.5 955.7,232.6 956.1,240.9 949.2,245.3 947.3,246.9 949.2,252.2 954.6,255.8 955.0,261.0 959.9,264.0 958.8,268.6 956.5,272.0 959.2,281.8 951.1,285.2 945.4,282.8 940.4,277.9 940.0,274.0 942.3,267.6 945.0,266.6 942.7,264.0 938.9,259.4 935.0,253.7 934.7,249.5Z"/><g fill="#000"><path d="M404.0,36.0 524.0,36.0 524.0,136.0 404.0,136.0Z"/></g><g fill="#2b2b2b"><path d="M436.9,53.4 450.4,49.5 454.3,55.3 462.0,65.0 466.9,70.8 473.6,74.7 475.6,82.4 473.6,87.3 467.8,94.0 470.7,99.8 458.2,101.8 454.3,105.6 456.2,111.4 462.0,109.5 471.7,111.4 477.5,119.2 464.0,128.8 452.4,136.0 404.0,136.0 404.0,123.0 418.5,117.2 425.3,119.2 428.2,109.5 420.4,103.7 428.2,96.0 440.8,84.4 439.8,74.7 436.9,65.0Z"/><path d="M404.0,36.0 408.8,36.0 411.7,45.7 418.5,51.5 427.2,54.4 435.9,55.3 436.9,65.0 414.0,63.0 415.6,76.6 420.4,83.4 426.2,84.4 428.2,90.2 413.7,96.0 404.0,103.7Z"/><path d="M471.7,36.0 524.0,36.0 524.0,90.2 518.1,89.2 509.4,81.5 500.7,74.7 495.9,71.8 491.0,65.0 494.9,60.2 491.0,49.5 477.5,41.8Z"/><path d="M493.0,94.0 500.7,96.0 509.4,104.7 524.0,107.6 524.0,136.0 506.5,136.0 504.6,119.2 500.7,113.4 496.8,103.7Z"/></g>
<g fill="#000"><circle cx="751.2" cy="203.8" r="22.9"/><circle cx="472.3" cy="261.2" r="22.0"/><circle cx="785.0" cy="217.5" r="21.7"/><circle cx="749.4" cy="204.0" r="21.0"/><circle cx="793.9" cy="219.5" r="21.0"/><circle cx="862.6" cy="260.1" r="18.1"/><circle cx="430.3" cy="297.7" r="17.3"/><circle cx="1138.8" cy="381.8" r="17.2"/><circle cx="416.2" cy="252.5" r="16.7"/><circle cx="416.1" cy="257.1" r="16.6"/><circle cx="1289.2" cy="288.2" r="16.2"/><circle cx="1199.2" cy="267.8" r="15.9"/><circle cx="1289.9" cy="288.1" r="15.9"/><circle cx="897.2" cy="177.8" r="15.4"/><circle cx="862.2" cy="252.5" r="15.4"/><circle cx="802.5" cy="225.0" r="15.4"/><circle cx="428.2" cy="298.0" r="15.4"/><circle cx="1198.8" cy="269.2" r="15.4"/><circle cx="896.4" cy="177.9" r="15.2"/><circle cx="299.2" cy="297.2" r="14.2"/><circle cx="467.5" cy="268.0" r="14.2"/><circle cx="1217.2" cy="335.8" r="14.2"/><circle cx="1237.5" cy="280.5" r="14.2"/><circle cx="1237.1" cy="280.7" r="13.9"/><circle cx="1138.2" cy="372.8" r="13.9"/><circle cx="1217.2" cy="309.2" r="13.7"/><circle cx="770.7" cy="196.3" r="13.3"/><circle cx="782.3" cy="235.0" r="13.3"/><circle cx="1218.8" cy="336.2" r="13.2"/><circle cx="772.5" cy="195.0" r="12.9"/><circle cx="790.0" cy="240.0" r="12.9"/><circle cx="351.2" cy="268.2" r="12.9"/><circle cx="966.2" cy="335.5" r="12.9"/><circle cx="1218.8" cy="309.1" r="12.5"/><circle cx="481.8" cy="251.7" r="12.5"/><circle cx="964.1" cy="331.7" r="12.3"/><circle cx="802.5" cy="200.0" r="11.7"/><circle cx="415.8" cy="263.0" r="11.7"/><circle cx="886.2" cy="305.2" r="11.7"/><circle cx="950.0" cy="333.0" r="11.7"/><circle cx="861.2" cy="539.2" r="11.7"/><circle cx="1307.2" cy="591.2" r="11.7"/><circle cx="805.5" cy="200.2" r="11.4"/><circle cx="799.7" cy="258.2" r="11.4"/><circle cx="760.1" cy="262.1" r="11.4"/><circle cx="285.0" cy="228.8" r="11.2"/><circle cx="695.2" cy="230.2" r="11.2"/><circle cx="441.2" cy="323.0" r="11.2"/><circle cx="1150.4" cy="312.5" r="11.2"/><circle cx="441.2" cy="320.8" r="11.2"/><circle cx="885.8" cy="305.6" r="11.0"/><circle cx="695.3" cy="230.1" r="11.0"/><circle cx="1150.2" cy="312.2" r="10.7"/><circle cx="1151.2" cy="430.2" r="10.7"/><circle cx="573.8" cy="527.2" r="10.7"/><circle cx="1189.0" cy="347.7" r="10.5"/><circle cx="447.9" cy="248.3" r="10.5"/><circle cx="447.5" cy="248.2" r="10.4"/><circle cx="1198.8" cy="258.0" r="10.4"/><circle cx="761.2" cy="265.5" r="10.4"/><circle cx="970.0" cy="513.0" r="10.4"/><circle cx="1186.2" cy="346.8" r="10.2"/><circle cx="490.6" cy="361.4" r="9.8"/><circle cx="420.2" cy="352.2" r="9.7"/><circle cx="1142.2" cy="424.2" r="9.7"/><circle cx="381.2" cy="301.1" r="9.6"/><circle cx="420.2" cy="351.9" r="9.6"/><circle cx="948.7" cy="331.7" r="9.4"/><circle cx="692.4" cy="322.0" r="9.4"/><circle cx="483.8" cy="250.0" r="9.2"/><circle cx="760.0" cy="250.0" r="9.2"/><circle cx="381.2" cy="301.2" r="9.2"/><circle cx="900.8" cy="400.8" r="9.2"/><circle cx="871.2" cy="311.8" r="9.2"/><circle cx="735.0" cy="283.0" r="9.2"/><circle cx="801.2" cy="263.0" r="9.2"/><circle cx="490.0" cy="361.8" r="9.2"/><circle cx="1045.2" cy="396.2" r="9.2"/><circle cx="734.0" cy="284.3" r="9.1"/><circle cx="871.3" cy="313.3" r="9.1"/><circle cx="964.8" cy="516.0" r="9.0"/><circle cx="284.2" cy="279.2" r="8.7"/><circle cx="323.2" cy="299.2" r="8.7"/><circle cx="691.2" cy="322.2" r="8.7"/><circle cx="664.2" cy="370.2" r="8.7"/><circle cx="861.2" cy="284.2" r="8.7"/><circle cx="498.2" cy="402.2" r="8.7"/><circle cx="528.2" cy="577.2" r="8.7"/><circle cx="1196.8" cy="563.5" r="8.7"/><circle cx="860.7" cy="284.3" r="8.5"/><circle cx="510.2" cy="241.6" r="8.5"/><circle cx="457.2" cy="482.2" r="8.4"/><circle cx="819.8" cy="150.8" r="8.2"/><circle cx="1189.2" cy="294.2" r="8.2"/><circle cx="1160.8" cy="458.8" r="8.2"/><circle cx="1160.6" cy="315.9" r="8.2"/><circle cx="1189.0" cy="293.5" r="8.2"/><circle cx="510.0" cy="241.2" r="8.0"/><circle cx="762.5" cy="282.2" r="8.0"/><circle cx="1269.8" cy="294.2" r="8.0"/><circle cx="1192.8" cy="416.2" r="8.0"/><circle cx="820.0" cy="150.8" r="7.9"/><circle cx="1270.2" cy="293.5" r="7.8"/><circle cx="445.2" cy="332.9" r="7.8"/><circle cx="387.7" cy="315.3" r="7.8"/><circle cx="373.5" cy="359.3" r="7.8"/><circle cx="442.2" cy="379.2" r="7.7"/><circle cx="1048.2" cy="320.2" r="7.7"/><circle cx="43.2" cy="588.2" r="7.7"/><circle cx="1338.8" cy="543.8" r="7.7"/><circle cx="848.1" cy="289.1" r="7.5"/><circle cx="879.0" cy="293.0" r="7.5"/><circle cx="396.2" cy="241.8" r="7.2"/><circle cx="871.2" cy="211.2" r="7.2"/><circle cx="1249.8" cy="129.8" r="7.2"/><circle cx="373.2" cy="359.2" r="7.2"/><circle cx="387.2" cy="315.2" r="7.2"/><circle cx="902.2" cy="350.2" r="7.2"/><circle cx="931.2" cy="336.2" r="7.2"/><circle cx="848.2" cy="289.8" r="7.2"/><circle cx="717.5" cy="273.0" r="7.2"/><circle cx="568.8" cy="496.8" r="7.2"/><circle cx="1031.2" cy="360.8" r="7.2"/><circle cx="1129.2" cy="404.2" r="7.2"/><circle cx="1161.2" cy="316.8" r="7.2"/><circle cx="1146.2" cy="335.8" r="7.2"/><circle cx="1216.2" cy="379.2" r="7.2"/><circle cx="1310.8" cy="500.2" r="7.2"/><circle cx="587.2" cy="525.2" r="7.2"/><circle cx="1190.4" cy="311.2" r="7.1"/><circle cx="1218.8" cy="272.6" r="7.1"/><circle cx="1225.6" cy="259.0" r="7.1"/><circle cx="1213.4" cy="286.1" r="7.1"/><circle cx="1147.0" cy="335.5" r="7.1"/><circle cx="717.5" cy="273.7" r="7.1"/><circle cx="763.0" cy="282.4" r="7.1"/><circle cx="800.7" cy="176.9" r="7.1"/><circle cx="871.3" cy="211.8" r="7.1"/><circle cx="931.3" cy="336.5" r="7.1"/><circle cx="395.8" cy="241.6" r="7.1"/><circle cx="369.4" cy="332.3" r="7.1"/><circle cx="434.4" cy="266.6" r="7.1"/><circle cx="281.2" cy="220.0" r="6.7"/><circle cx="665.8" cy="113.5" r="6.7"/><circle cx="801.2" cy="177.2" r="6.7"/><circle cx="741.2" cy="250.0" r="6.7"/><circle cx="147.2" cy="351.2" r="6.7"/><circle cx="323.2" cy="263.2" r="6.7"/><circle cx="369.2" cy="332.2" r="6.7"/><circle cx="468.8" cy="416.8" r="6.7"/><circle cx="450.0" cy="273.0" r="6.7"/><circle cx="685.8" cy="378.2" r="6.7"/><circle cx="746.8" cy="387.8" r="6.7"/><circle cx="778.8" cy="433.8" r="6.7"/><circle cx="878.8" cy="293.0" r="6.7"/><circle cx="751.2" cy="275.5" r="6.7"/><circle cx="1190.2" cy="311.2" r="6.7"/><circle cx="1218.8" cy="271.8" r="6.7"/><circle cx="1225.0" cy="260.0" r="6.7"/><circle cx="975.0" cy="340.5" r="6.7"/><circle cx="739.8" cy="250.4" r="6.5"/><circle cx="750.4" cy="275.6" r="6.5"/><circle cx="792.0" cy="284.3" r="6.5"/><circle cx="807.5" cy="288.2" r="6.5"/><circle cx="870.3" cy="281.4" r="6.5"/><circle cx="701.1" cy="319.1" r="6.5"/><circle cx="1172.1" cy="364.0" r="6.4"/><circle cx="407.0" cy="314.7" r="6.4"/><circle cx="406.0" cy="273.4" r="6.4"/><circle cx="441.2" cy="360.0" r="6.4"/><circle cx="317.0" cy="192.2" r="6.2"/><circle cx="470.0" cy="238.8" r="6.2"/><circle cx="944.2" cy="191.2" r="6.2"/><circle cx="1026.8" cy="206.8" r="6.2"/><circle cx="1225.0" cy="256.2" r="6.2"/><circle cx="406.8" cy="315.2" r="6.2"/><circle cx="441.2" cy="359.2" r="6.2"/><circle cx="433.8" cy="268.0" r="6.2"/><circle cx="700.0" cy="319.2" r="6.2"/><circle cx="803.2" cy="469.2" r="6.2"/><circle cx="791.2" cy="283.0" r="6.2"/><circle cx="807.8" cy="286.8" r="6.2"/><circle cx="1017.8" cy="261.2" r="6.2"/><circle cx="1091.2" cy="346.2" r="6.2"/><circle cx="1161.2" cy="393.2" r="6.2"/><circle cx="1213.8" cy="285.5" r="6.2"/><circle cx="1251.8" cy="298.0" r="6.2"/><circle cx="1171.2" cy="363.8" r="6.2"/><circle cx="1324.2" cy="579.2" r="6.2"/><circle cx="1169.4" cy="294.2" r="6.0"/><circle cx="1305.4" cy="252.2" r="6.0"/><circle cx="1252.6" cy="298.3" r="6.0"/><circle cx="718.5" cy="261.1" r="6.0"/><circle cx="844.2" cy="168.2" r="6.0"/><circle cx="943.8" cy="191.5" r="6.0"/><circle cx="723.3" cy="298.8" r="6.0"/><circle cx="844.2" cy="168.2" r="6.0"/><circle cx="1069.2" cy="181.2" r="6.0"/><circle cx="654.2" cy="278.2" r="6.0"/><circle cx="858.2" cy="479.2" r="6.0"/><circle cx="1234.4" cy="247.5" r="5.8"/><circle cx="1166.7" cy="345.7" r="5.8"/><circle cx="1295.3" cy="252.9" r="5.8"/><circle cx="510.2" cy="364.1" r="5.8"/><circle cx="1234.2" cy="247.2" r="5.7"/><circle cx="1305.2" cy="252.2" r="5.7"/><circle cx="407.5" cy="274.2" r="5.7"/><circle cx="719.5" cy="261.0" r="5.7"/><circle cx="894.2" cy="440.2" r="5.7"/><circle cx="617.2" cy="457.2" r="5.7"/><circle cx="1079.2" cy="324.2" r="5.7"/><circle cx="1169.2" cy="294.2" r="5.7"/><circle cx="859.7" cy="188.6" r="5.6"/><circle cx="1184.3" cy="278.0" r="5.5"/><circle cx="1161.2" cy="329.4" r="5.5"/><circle cx="470.3" cy="238.9" r="5.5"/><circle cx="582.2" cy="251.8" r="5.5"/><circle cx="1087.2" cy="247.2" r="5.5"/><circle cx="1295.2" cy="253.2" r="5.5"/><circle cx="311.2" cy="286.2" r="5.5"/><circle cx="349.2" cy="354.2" r="5.5"/><circle cx="723.8" cy="299.2" r="5.5"/><circle cx="924.8" cy="385.8" r="5.5"/><circle cx="904.2" cy="338.2" r="5.5"/><circle cx="511.2" cy="364.2" r="5.5"/><circle cx="522.8" cy="446.8" r="5.5"/><circle cx="790.8" cy="167.8" r="5.2"/><circle cx="1033.8" cy="181.8" r="5.2"/><circle cx="1152.8" cy="199.8" r="5.2"/><circle cx="1161.8" cy="225.8" r="5.2"/><circle cx="363.2" cy="366.8" r="5.2"/><circle cx="803.2" cy="302.2" r="5.2"/><circle cx="1027.2" cy="263.0" r="5.2"/><circle cx="1161.2" cy="329.2" r="5.2"/><circle cx="1365.2" cy="471.2" r="5.2"/><circle cx="1166.8" cy="346.2" r="5.2"/><circle cx="791.0" cy="168.2" r="5.2"/><circle cx="905.1" cy="250.4" r="5.2"/><circle cx="929.3" cy="277.5" r="5.2"/><circle cx="863.6" cy="231.1" r="5.2"/><circle cx="803.6" cy="302.7" r="5.2"/><circle cx="385.3" cy="261.5" r="5.1"/><circle cx="437.1" cy="344.4" r="5.1"/><circle cx="550.2" cy="227.2" r="5.0"/><circle cx="863.2" cy="231.2" r="5.0"/><circle cx="1265.2" cy="529.2" r="5.0"/><circle cx="843.2" cy="135.2" r="4.7"/><circle cx="905.2" cy="250.0" r="4.7"/><circle cx="385.2" cy="261.2" r="4.7"/><circle cx="437.2" cy="344.2" r="4.7"/><circle cx="722.2" cy="307.2" r="4.7"/><circle cx="929.8" cy="277.2" r="4.7"/><circle cx="1149.2" cy="284.2" r="4.7"/><circle cx="1149.1" cy="284.1" r="4.7"/><circle cx="786.2" cy="147.0" r="4.6"/><circle cx="1240.5" cy="298.3" r="4.4"/><circle cx="1201.9" cy="317.2" r="4.4"/><circle cx="455.0" cy="179.8" r="4.2"/><circle cx="215.8" cy="468.8" r="4.2"/><circle cx="406.8" cy="436.8" r="4.2"/><circle cx="504.8" cy="303.8" r="4.2"/><circle cx="583.8" cy="511.8" r="4.2"/><circle cx="1053.2" cy="368.2" r="4.2"/><circle cx="1107.8" cy="389.8" r="4.2"/><circle cx="1267.2" cy="406.8" r="4.2"/><circle cx="1194.2" cy="468.8" r="4.2"/><circle cx="1291.2" cy="514.2" r="4.2"/><circle cx="823.8" cy="574.0" r="4.2"/><circle cx="823.9" cy="185.7" r="4.0"/><circle cx="313.8" cy="127.0" r="4.0"/><circle cx="280.5" cy="247.0" r="4.0"/><circle cx="823.8" cy="185.8" r="4.0"/><circle cx="1158.5" cy="352.5" r="3.7"/><circle cx="1199.2" cy="342.3" r="3.7"/><circle cx="1171.4" cy="339.6" r="3.7"/><circle cx="504.8" cy="303.8" r="3.7"/><circle cx="408.0" cy="303.8" r="3.7"/><circle cx="302.2" cy="227.5" r="3.7"/><circle cx="867.0" cy="56.8" r="3.7"/><circle cx="829.2" cy="212.5" r="3.7"/><circle cx="843.2" cy="231.2" r="3.7"/><circle cx="1246.8" cy="226.8" r="3.7"/><circle cx="1252.8" cy="231.8" r="3.7"/><circle cx="332.2" cy="344.2" r="3.7"/><circle cx="468.8" cy="391.8" r="3.7"/><circle cx="765.2" cy="409.2" r="3.7"/><circle cx="902.2" cy="493.8" r="3.7"/><circle cx="745.0" cy="293.0" r="3.7"/><circle cx="517.2" cy="394.2" r="3.7"/><circle cx="615.2" cy="472.2" r="3.7"/><circle cx="981.2" cy="286.2" r="3.7"/><circle cx="1058.8" cy="407.8" r="3.7"/><circle cx="1231.8" cy="429.2" r="3.7"/><circle cx="1198.2" cy="468.2" r="3.7"/><circle cx="1298.2" cy="477.2" r="3.7"/><circle cx="1323.2" cy="513.8" r="3.7"/><circle cx="961.2" cy="368.0" r="3.7"/><circle cx="501.8" cy="533.8" r="3.7"/><circle cx="481.2" cy="676.0" r="3.7"/><circle cx="851.8" cy="531.8" r="3.7"/><circle cx="1290.8" cy="516.8" r="3.7"/><circle cx="830.7" cy="213.7" r="3.6"/><circle cx="887.7" cy="282.4" r="3.6"/><circle cx="948.7" cy="247.5" r="3.6"/><circle cx="744.6" cy="293.0" r="3.6"/><circle cx="259.8" cy="185.0" r="3.5"/><circle cx="311.8" cy="78.0" r="3.5"/><circle cx="410.8" cy="222.8" r="3.5"/><circle cx="877.2" cy="435.2" r="3.5"/><circle cx="1192.4" cy="328.1" r="3.3"/><circle cx="1216.8" cy="261.7" r="3.3"/><circle cx="500.7" cy="227.1" r="3.3"/><circle cx="846.1" cy="220.5" r="3.3"/><circle cx="766.8" cy="303.6" r="3.3"/><circle cx="886.8" cy="258.2" r="3.3"/><circle cx="733.0" cy="295.9" r="3.3"/><circle cx="126.8" cy="130.0" r="3.3"/><circle cx="178.0" cy="137.2" r="3.3"/><circle cx="908.8" cy="107.8" r="3.3"/><circle cx="846.8" cy="220.0" r="3.3"/><circle cx="948.2" cy="247.2" r="3.3"/><circle cx="729.5" cy="183.8" r="3.3"/><circle cx="1041.2" cy="120.2" r="3.3"/><circle cx="1211.2" cy="218.2" r="3.3"/><circle cx="1071.8" cy="232.8" r="3.3"/><circle cx="362.2" cy="290.2" r="3.3"/><circle cx="454.8" cy="431.2" r="3.3"/><circle cx="797.8" cy="453.8" r="3.3"/><circle cx="766.8" cy="303.8" r="3.3"/><circle cx="733.8" cy="296.8" r="3.3"/><circle cx="878.8" cy="444.8" r="3.3"/><circle cx="588.8" cy="454.8" r="3.3"/><circle cx="491.8" cy="498.8" r="3.3"/><circle cx="1008.8" cy="313.8" r="3.3"/><circle cx="1032.2" cy="330.8" r="3.3"/><circle cx="1019.8" cy="342.8" r="3.3"/><circle cx="1058.8" cy="343.8" r="3.3"/><circle cx="1055.2" cy="352.2" r="3.3"/><circle cx="1134.2" cy="410.8" r="3.3"/><circle cx="1158.2" cy="352.2" r="3.3"/><circle cx="1174.8" cy="429.8" r="3.3"/><circle cx="1171.2" cy="435.2" r="3.3"/><circle cx="1265.8" cy="438.2" r="3.3"/><circle cx="1209.8" cy="470.8" r="3.3"/><circle cx="1290.8" cy="467.8" r="3.3"/><circle cx="478.8" cy="554.8" r="3.3"/><circle cx="481.2" cy="555.2" r="3.3"/><circle cx="1329.2" cy="526.8" r="3.3"/><circle cx="1332.2" cy="528.8" r="3.3"/><circle cx="152.2" cy="39.5" r="3.3"/><circle cx="377.2" cy="176.5" r="3.3"/><circle cx="423.2" cy="203.8" r="3.3"/><circle cx="467.5" cy="214.2" r="3.3"/><circle cx="557.2" cy="62.2" r="3.3"/><circle cx="500.8" cy="226.8" r="3.3"/><circle cx="400.0" cy="293.0" r="3.3"/><circle cx="1223.8" cy="393.0" r="3.3"/><circle cx="478.8" cy="676.0" r="3.3"/><circle cx="398.5" cy="254.4" r="3.3"/><circle cx="390.4" cy="271.3" r="3.3"/><circle cx="369.4" cy="279.5" r="3.3"/><circle cx="399.9" cy="313.3" r="3.3"/><circle cx="138.2" cy="86.5" r="3.3"/><circle cx="140.2" cy="89.2" r="3.3"/><circle cx="115.2" cy="101.2" r="3.3"/><circle cx="237.0" cy="158.2" r="3.3"/><circle cx="299.2" cy="235.2" r="3.3"/><circle cx="486.2" cy="137.8" r="3.3"/><circle cx="516.2" cy="171.2" r="3.3"/><circle cx="327.2" cy="318.2" r="3.3"/><circle cx="368.8" cy="278.0" r="3.3"/><circle cx="1305.8" cy="457.2" r="3.3"/><circle cx="41.2" cy="597.2" r="3.3"/><circle cx="34.2" cy="620.2" r="3.3"/><circle cx="1194.2" cy="572.8" r="3.3"/><circle cx="1317.2" cy="579.2" r="3.3"/><circle cx="149.2" cy="49.2" r="6.1"/><circle cx="130.2" cy="86.5" r="6.1"/><circle cx="108.2" cy="98.2" r="6.1"/><circle cx="135.2" cy="105.2" r="6.1"/><circle cx="186.2" cy="106.5" r="6.1"/><circle cx="178.0" cy="137.2" r="6.1"/><circle cx="234.2" cy="150.2" r="6.1"/><circle cx="248.2" cy="179.2" r="6.1"/><circle cx="350.2" cy="64.2" r="6.1"/><circle cx="394.2" cy="59.2" r="6.1"/><circle cx="476.5" cy="133.2" r="6.1"/><circle cx="365.2" cy="188.2" r="6.1"/><circle cx="316.0" cy="206.2" r="6.1"/><circle cx="418.0" cy="195.0" r="6.1"/><circle cx="416.0" cy="203.2" r="6.1"/><circle cx="451.2" cy="204.2" r="6.1"/><circle cx="380.0" cy="213.2" r="6.1"/><circle cx="381.2" cy="231.2" r="6.1"/><circle cx="327.2" cy="237.2" r="6.1"/><circle cx="382.0" cy="249.2" r="6.1"/><circle cx="307.5" cy="249.2" r="6.1"/><circle cx="283.2" cy="238.8" r="6.1"/><circle cx="425.0" cy="242.5" r="6.1"/><circle cx="462.0" cy="240.0" r="6.1"/><circle cx="460.0" cy="250.0" r="6.1"/><circle cx="558.2" cy="85.2" r="6.1"/><circle cx="578.2" cy="142.5" r="6.1"/><circle cx="521.2" cy="192.2" r="6.1"/><circle cx="518.2" cy="212.2" r="6.1"/><circle cx="637.0" cy="235.2" r="6.1"/><circle cx="797.2" cy="109.2" r="6.1"/><circle cx="794.2" cy="118.2" r="6.1"/><circle cx="955.8" cy="79.2" r="6.1"/><circle cx="728.2" cy="159.0" r="6.1"/><circle cx="774.2" cy="154.2" r="6.1"/><circle cx="794.8" cy="145.0" r="6.1"/><circle cx="794.2" cy="150.0" r="6.1"/><circle cx="829.2" cy="145.2" r="6.1"/><circle cx="848.2" cy="143.2" r="6.1"/><circle cx="868.2" cy="147.2" r="6.1"/><circle cx="799.2" cy="163.2" r="6.1"/><circle cx="809.2" cy="168.2" r="6.1"/><circle cx="787.2" cy="176.2" r="6.1"/><circle cx="736.2" cy="175.8" r="6.1"/><circle cx="740.0" cy="175.0" r="6.1"/><circle cx="746.2" cy="180.0" r="6.1"/><circle cx="719.2" cy="189.2" r="6.1"/><circle cx="716.2" cy="200.0" r="6.1"/><circle cx="728.2" cy="192.5" r="6.1"/><circle cx="735.0" cy="186.2" r="6.1"/><circle cx="791.2" cy="190.0" r="6.1"/><circle cx="787.5" cy="193.8" r="6.1"/><circle cx="809.2" cy="191.2" r="6.1"/><circle cx="817.2" cy="206.2" r="6.1"/><circle cx="822.2" cy="215.2" r="6.1"/><circle cx="833.2" cy="200.2" r="6.1"/><circle cx="839.2" cy="205.2" r="6.1"/><circle cx="941.2" cy="177.2" r="6.1"/><circle cx="891.2" cy="202.2" r="6.1"/><circle cx="903.2" cy="202.2" r="6.1"/><circle cx="860.2" cy="189.2" r="6.1"/><circle cx="826.2" cy="228.2" r="6.1"/><circle cx="817.2" cy="225.0" r="6.1"/><circle cx="746.2" cy="228.8" r="6.1"/><circle cx="750.2" cy="242.2" r="6.1"/><circle cx="845.0" cy="237.2" r="6.1"/><circle cx="852.2" cy="244.2" r="6.1"/><circle cx="830.2" cy="242.2" r="6.1"/><circle cx="902.2" cy="241.2" r="6.1"/><circle cx="917.2" cy="245.2" r="6.1"/><circle cx="761.2" cy="245.0" r="6.1"/><circle cx="770.0" cy="248.8" r="6.1"/><circle cx="497.5" cy="237.5" r="6.1"/><circle cx="505.0" cy="235.0" r="6.1"/><circle cx="1087.2" cy="61.2" r="6.1"/><circle cx="1189.2" cy="126.2" r="6.1"/><circle cx="1045.2" cy="138.2" r="6.1"/><circle cx="985.2" cy="170.2" r="6.1"/><circle cx="1107.2" cy="173.2" r="6.1"/><circle cx="1068.2" cy="213.2" r="6.1"/><circle cx="1231.2" cy="168.2" r="6.1"/><circle cx="1270.2" cy="222.2" r="6.1"/><circle cx="1236.2" cy="238.2" r="6.1"/><circle cx="1299.2" cy="231.2" r="6.1"/><circle cx="1047.2" cy="250.2" r="6.1"/><circle cx="1038.2" cy="252.2" r="6.1"/><circle cx="1018.2" cy="254.8" r="6.1"/><circle cx="981.2" cy="254.8" r="6.1"/><circle cx="1082.2" cy="256.8" r="6.1"/><circle cx="155.2" cy="358.2" r="6.1"/><circle cx="53.2" cy="504.2" r="6.1"/><circle cx="192.2" cy="491.2" r="6.1"/><circle cx="179.2" cy="503.2" r="6.1"/><circle cx="212.2" cy="505.2" r="6.1"/><circle cx="332.2" cy="326.2" r="6.1"/><circle cx="346.2" cy="320.2" r="6.1"/><circle cx="341.2" cy="337.2" r="6.1"/><circle cx="344.2" cy="291.2" r="6.1"/><circle cx="313.2" cy="302.2" r="6.1"/><circle cx="352.2" cy="360.2" r="6.1"/><circle cx="365.2" cy="357.2" r="6.1"/><circle cx="361.2" cy="349.2" r="6.1"/><circle cx="366.2" cy="347.2" r="6.1"/><circle cx="377.2" cy="347.2" r="6.1"/><circle cx="384.2" cy="360.2" r="6.1"/><circle cx="397.2" cy="365.2" r="6.1"/><circle cx="406.2" cy="357.2" r="6.1"/><circle cx="409.2" cy="352.2" r="6.1"/><circle cx="406.2" cy="378.2" r="6.1"/><circle cx="411.2" cy="383.2" r="6.1"/><circle cx="416.2" cy="375.2" r="6.1"/><circle cx="425.2" cy="394.2" r="6.1"/><circle cx="430.2" cy="396.2" r="6.1"/><circle cx="448.2" cy="400.2" r="6.1"/><circle cx="463.2" cy="411.2" r="6.1"/><circle cx="466.2" cy="426.2" r="6.1"/><circle cx="446.2" cy="443.2" r="6.1"/><circle cx="454.2" cy="363.2" r="6.1"/><circle cx="446.2" cy="346.2" r="6.1"/><circle cx="452.2" cy="346.2" r="6.1"/><circle cx="464.2" cy="342.2" r="6.1"/><circle cx="476.2" cy="349.2" r="6.1"/><circle cx="477.2" cy="394.2" r="6.1"/><circle cx="476.2" cy="409.2" r="6.1"/><circle cx="378.2" cy="290.2" r="6.1"/><circle cx="391.2" cy="290.2" r="6.1"/><circle cx="395.2" cy="284.2" r="6.1"/><circle cx="393.2" cy="303.2" r="6.1"/><circle cx="375.2" cy="316.2" r="6.1"/><circle cx="418.2" cy="312.2" r="6.1"/><circle cx="429.2" cy="313.2" r="6.1"/><circle cx="409.2" cy="294.2" r="6.1"/><circle cx="419.2" cy="285.2" r="6.1"/><circle cx="440.2" cy="275.2" r="6.1"/><circle cx="445.2" cy="265.2" r="6.1"/><circle cx="456.2" cy="291.2" r="6.1"/><circle cx="450.2" cy="298.2" r="6.1"/><circle cx="688.2" cy="302.2" r="6.1"/><circle cx="640.2" cy="367.2" r="6.1"/><circle cx="656.2" cy="369.2" r="6.1"/><circle cx="662.2" cy="377.2" r="6.1"/><circle cx="722.2" cy="386.2" r="6.1"/><circle cx="785.2" cy="388.2" r="6.1"/><circle cx="737.2" cy="415.2" r="6.1"/><circle cx="765.2" cy="409.2" r="6.1"/><circle cx="779.2" cy="416.2" r="6.1"/><circle cx="790.2" cy="419.2" r="6.1"/><circle cx="797.2" cy="420.2" r="6.1"/><circle cx="786.2" cy="437.2" r="6.1"/><circle cx="811.2" cy="452.2" r="6.1"/><circle cx="873.2" cy="416.2" r="6.1"/><circle cx="896.2" cy="433.2" r="6.1"/><circle cx="906.2" cy="428.2" r="6.1"/><circle cx="865.2" cy="447.2" r="6.1"/><circle cx="875.2" cy="453.2" r="6.1"/><circle cx="902.2" cy="461.2" r="6.1"/><circle cx="882.2" cy="488.2" r="6.1"/><circle cx="861.2" cy="494.2" r="6.1"/><circle cx="830.2" cy="305.2" r="6.1"/><circle cx="877.2" cy="374.2" r="6.1"/><circle cx="916.2" cy="364.2" r="6.1"/><circle cx="922.2" cy="375.2" r="6.1"/><circle cx="871.2" cy="327.2" r="6.1"/><circle cx="884.2" cy="324.2" r="6.1"/><circle cx="885.2" cy="333.2" r="6.1"/><circle cx="898.2" cy="329.2" r="6.1"/><circle cx="920.2" cy="330.2" r="6.1"/><circle cx="936.2" cy="318.2" r="6.1"/><circle cx="954.2" cy="316.2" r="6.1"/><circle cx="922.2" cy="305.2" r="6.1"/><circle cx="951.2" cy="302.2" r="6.1"/><circle cx="942.2" cy="280.2" r="6.1"/><circle cx="949.2" cy="289.2" r="6.1"/><circle cx="921.2" cy="286.2" r="6.1"/><circle cx="908.2" cy="281.2" r="6.1"/><circle cx="894.2" cy="279.2" r="6.1"/><circle cx="903.2" cy="274.2" r="6.1"/><circle cx="831.2" cy="277.2" r="6.1"/><circle cx="815.2" cy="273.2" r="6.1"/><circle cx="802.2" cy="276.2" r="6.1"/><circle cx="794.2" cy="288.2" r="6.1"/><circle cx="787.2" cy="271.2" r="6.1"/><circle cx="722.2" cy="307.2" r="6.1"/><circle cx="744.2" cy="283.2" r="6.1"/><circle cx="732.2" cy="282.2" r="6.1"/><circle cx="922.2" cy="267.2" r="6.1"/><circle cx="944.2" cy="265.2" r="6.1"/><circle cx="889.2" cy="296.2" r="6.1"/><circle cx="846.2" cy="277.2" r="6.1"/><circle cx="851.2" cy="281.2" r="6.1"/><circle cx="541.2" cy="414.2" r="6.1"/><circle cx="507.2" cy="393.2" r="6.1"/><circle cx="488.2" cy="388.2" r="6.1"/><circle cx="496.2" cy="393.2" r="6.1"/><circle cx="483.8" cy="430.2" r="6.1"/><circle cx="484.2" cy="451.2" r="6.1"/><circle cx="492.2" cy="473.2" r="6.1"/><circle cx="488.2" cy="477.2" r="6.1"/><circle cx="567.2" cy="440.2" r="6.1"/><circle cx="605.2" cy="449.2" r="6.1"/><circle cx="619.2" cy="466.2" r="6.1"/><circle cx="610.2" cy="477.2" r="6.1"/><circle cx="606.2" cy="485.2" r="6.1"/><circle cx="510.2" cy="503.2" r="6.1"/><circle cx="543.2" cy="514.2" r="6.1"/><circle cx="584.2" cy="512.2" r="6.1"/><circle cx="598.2" cy="513.2" r="6.1"/><circle cx="501.2" cy="362.2" r="6.1"/><circle cx="516.2" cy="368.2" r="6.1"/><circle cx="511.2" cy="364.2" r="6.1"/><circle cx="1082.2" cy="260.2" r="6.1"/><circle cx="1031.2" cy="264.2" r="6.1"/><circle cx="1043.2" cy="270.2" r="6.1"/><circle cx="1016.2" cy="275.2" r="6.1"/><circle cx="973.2" cy="286.2" r="6.1"/><circle cx="1037.2" cy="307.2" r="6.1"/><circle cx="1016.2" cy="324.2" r="6.1"/><circle cx="994.2" cy="332.2" r="6.1"/><circle cx="1033.2" cy="347.2" r="6.1"/><circle cx="1041.2" cy="357.2" r="6.1"/><circle cx="1065.2" cy="352.2" r="6.1"/><circle cx="1066.2" cy="368.2" r="6.1"/><circle cx="1071.2" cy="366.2" r="6.1"/><circle cx="1053.2" cy="368.2" r="6.1"/><circle cx="1039.2" cy="385.2" r="6.1"/><circle cx="1050.2" cy="384.2" r="6.1"/><circle cx="1059.2" cy="385.2" r="6.1"/><circle cx="1047.2" cy="402.2" r="6.1"/><circle cx="1060.2" cy="412.2" r="6.1"/><circle cx="1033.2" cy="437.2" r="6.1"/><circle cx="965.2" cy="453.2" r="6.1"/><circle cx="1104.2" cy="332.2" r="6.1"/><circle cx="1111.2" cy="337.2" r="6.1"/><circle cx="1103.2" cy="347.2" r="6.1"/><circle cx="1099.2" cy="341.2" r="6.1"/><circle cx="1138.2" cy="348.2" r="6.1"/><circle cx="1131.2" cy="362.2" r="6.1"/><circle cx="1121.2" cy="369.2" r="6.1"/><circle cx="1144.2" cy="323.2" r="6.1"/><circle cx="1134.2" cy="324.2" r="6.1"/><circle cx="1136.2" cy="330.2" r="6.1"/><circle cx="1143.2" cy="284.2" r="6.1"/><circle cx="1173.8" cy="264.2" r="6.1"/><circle cx="1181.2" cy="263.2" r="6.1"/><circle cx="1173.2" cy="270.2" r="6.1"/><circle cx="1183.8" cy="278.2" r="6.1"/><circle cx="1186.2" cy="285.5" r="6.1"/><circle cx="1206.2" cy="291.8" r="6.1"/><circle cx="1183.8" cy="303.0" r="6.1"/><circle cx="1178.8" cy="311.8" r="6.1"/><circle cx="1201.2" cy="306.8" r="6.1"/><circle cx="1196.2" cy="319.2" r="6.1"/><circle cx="1186.2" cy="321.8" r="6.1"/><circle cx="1180.0" cy="330.5" r="6.1"/><circle cx="1173.8" cy="335.5" r="6.1"/><circle cx="1171.2" cy="350.5" r="6.1"/><circle cx="1175.0" cy="356.8" r="6.1"/><circle cx="1167.5" cy="372.2" r="6.1"/><circle cx="1157.5" cy="376.2" r="6.1"/><circle cx="1155.0" cy="396.2" r="6.1"/><circle cx="1246.2" cy="291.2" r="6.1"/><circle cx="1237.2" cy="298.2" r="6.1"/><circle cx="1253.8" cy="305.5" r="6.1"/><circle cx="1271.2" cy="298.0" r="6.1"/><circle cx="1241.2" cy="331.2" r="6.1"/><circle cx="1294.2" cy="264.2" r="6.1"/><circle cx="1207.2" cy="397.2" r="6.1"/><circle cx="1227.2" cy="403.2" r="6.1"/><circle cx="1310.2" cy="376.2" r="6.1"/><circle cx="1307.2" cy="383.2" r="6.1"/><circle cx="1255.2" cy="438.2" r="6.1"/><circle cx="1259.2" cy="446.2" r="6.1"/><circle cx="1200.2" cy="440.2" r="6.1"/><circle cx="1210.2" cy="454.2" r="6.1"/><circle cx="1175.2" cy="465.2" r="6.1"/><circle cx="1184.2" cy="463.2" r="6.1"/><circle cx="1218.2" cy="469.2" r="6.1"/><circle cx="1226.2" cy="474.2" r="6.1"/><circle cx="1291.2" cy="445.2" r="6.1"/><circle cx="1336.2" cy="451.2" r="6.1"/><circle cx="1314.2" cy="460.2" r="6.1"/><circle cx="1316.2" cy="471.2" r="6.1"/><circle cx="1227.2" cy="503.2" r="6.1"/><circle cx="1190.0" cy="418.0" r="6.1"/><circle cx="1202.5" cy="316.8" r="6.1"/><circle cx="44.2" cy="607.2" r="6.1"/><circle cx="472.2" cy="609.2" r="6.1"/><circle cx="488.2" cy="523.2" r="6.1"/><circle cx="543.8" cy="517.2" r="6.1"/><circle cx="569.2" cy="518.5" r="6.1"/><circle cx="598.8" cy="516.8" r="6.1"/><circle cx="553.2" cy="543.2" r="6.1"/><circle cx="566.2" cy="545.2" r="6.1"/><circle cx="556.2" cy="555.2" r="6.1"/><circle cx="519.2" cy="563.2" r="6.1"/><circle cx="538.2" cy="577.2" r="6.1"/><circle cx="564.2" cy="536.2" r="6.1"/><circle cx="819.2" cy="523.2" r="6.1"/><circle cx="1218.2" cy="559.2" r="6.1"/><circle cx="1331.2" cy="573.2" r="6.1"/><circle cx="381.6" cy="231.4" r="6.1"/><circle cx="382.3" cy="249.3" r="6.1"/><circle cx="425.6" cy="242.2" r="6.1"/><circle cx="432.4" cy="249.0" r="6.1"/><circle cx="461.5" cy="239.5" r="6.1"/><circle cx="460.8" cy="250.4" r="6.1"/><circle cx="473.0" cy="244.3" r="6.1"/><circle cx="498.0" cy="236.8" r="6.1"/><circle cx="505.5" cy="234.1" r="6.1"/><circle cx="445.2" cy="265.3" r="6.1"/><circle cx="440.5" cy="275.4" r="6.1"/><circle cx="446.6" cy="280.1" r="6.1"/><circle cx="395.8" cy="284.2" r="6.1"/><circle cx="391.1" cy="290.3" r="6.1"/><circle cx="378.2" cy="289.6" r="6.1"/><circle cx="393.8" cy="303.2" r="6.1"/><circle cx="408.0" cy="291.0" r="6.1"/><circle cx="410.7" cy="297.1" r="6.1"/><circle cx="420.2" cy="285.6" r="6.1"/><circle cx="418.1" cy="312.0" r="6.1"/><circle cx="429.0" cy="314.0" r="6.1"/><circle cx="452.0" cy="291.0" r="6.1"/><circle cx="457.4" cy="291.7" r="6.1"/><circle cx="451.3" cy="299.1" r="6.1"/><circle cx="444.5" cy="305.9" r="6.1"/><circle cx="452.0" cy="328.9" r="6.1"/><circle cx="456.7" cy="336.3" r="6.1"/><circle cx="464.2" cy="341.1" r="6.1"/><circle cx="446.6" cy="345.8" r="6.1"/><circle cx="453.3" cy="346.5" r="6.1"/><circle cx="476.4" cy="349.2" r="6.1"/><circle cx="377.5" cy="347.2" r="6.1"/><circle cx="366.0" cy="347.2" r="6.1"/><circle cx="408.7" cy="355.3" r="6.1"/><circle cx="406.0" cy="358.0" r="6.1"/><circle cx="384.3" cy="360.0" r="6.1"/><circle cx="366.7" cy="356.6" r="6.1"/><circle cx="397.2" cy="364.1" r="6.1"/><circle cx="454.0" cy="362.7" r="6.1"/><circle cx="485.8" cy="360.0" r="6.1"/><circle cx="500.7" cy="361.4" r="6.1"/><circle cx="515.6" cy="364.1" r="6.1"/><circle cx="498.7" cy="236.8" r="6.1"/><circle cx="504.8" cy="234.1" r="6.1"/><circle cx="429.0" cy="360.0" r="6.1"/><circle cx="728.2" cy="159.2" r="6.1"/><circle cx="774.6" cy="153.7" r="6.1"/><circle cx="794.9" cy="149.9" r="6.1"/><circle cx="868.4" cy="147.9" r="6.1"/><circle cx="799.7" cy="163.4" r="6.1"/><circle cx="809.4" cy="168.2" r="6.1"/><circle cx="787.2" cy="176.0" r="6.1"/><circle cx="736.9" cy="176.0" r="6.1"/><circle cx="745.6" cy="179.8" r="6.1"/><circle cx="719.5" cy="188.6" r="6.1"/><circle cx="716.6" cy="200.2" r="6.1"/><circle cx="734.0" cy="186.6" r="6.1"/><circle cx="791.0" cy="190.5" r="6.1"/><circle cx="809.4" cy="190.5" r="6.1"/><circle cx="833.6" cy="200.2" r="6.1"/><circle cx="839.4" cy="205.0" r="6.1"/><circle cx="817.1" cy="206.0" r="6.1"/><circle cx="822.9" cy="214.7" r="6.1"/><circle cx="816.2" cy="224.3" r="6.1"/><circle cx="826.8" cy="228.2" r="6.1"/><circle cx="830.7" cy="241.7" r="6.1"/><circle cx="845.2" cy="236.9" r="6.1"/><circle cx="851.9" cy="243.7" r="6.1"/><circle cx="746.5" cy="228.2" r="6.1"/><circle cx="751.4" cy="241.7" r="6.1"/><circle cx="763.0" cy="244.6" r="6.1"/><circle cx="770.7" cy="248.5" r="6.1"/><circle cx="780.4" cy="247.5" r="6.1"/><circle cx="788.1" cy="258.2" r="6.1"/><circle cx="786.2" cy="270.8" r="6.1"/><circle cx="801.7" cy="276.6" r="6.1"/><circle cx="810.4" cy="279.5" r="6.1"/><circle cx="815.2" cy="272.7" r="6.1"/><circle cx="822.9" cy="254.3" r="6.1"/><circle cx="834.5" cy="254.3" r="6.1"/><circle cx="829.7" cy="260.1" r="6.1"/><circle cx="821.0" cy="264.0" r="6.1"/><circle cx="831.6" cy="277.5" r="6.1"/><circle cx="844.2" cy="277.5" r="6.1"/><circle cx="891.6" cy="202.1" r="6.1"/><circle cx="903.2" cy="202.1" r="6.1"/><circle cx="859.7" cy="189.5" r="6.1"/><circle cx="902.2" cy="240.8" r="6.1"/><circle cx="916.7" cy="244.6" r="6.1"/><circle cx="925.5" cy="259.2" r="6.1"/><circle cx="922.5" cy="266.9" r="6.1"/><circle cx="943.8" cy="265.0" r="6.1"/><circle cx="903.2" cy="273.7" r="6.1"/><circle cx="909.0" cy="281.4" r="6.1"/><circle cx="894.5" cy="279.5" r="6.1"/><circle cx="921.6" cy="286.2" r="6.1"/><circle cx="941.9" cy="279.5" r="6.1"/><circle cx="948.7" cy="289.1" r="6.1"/><circle cx="951.6" cy="301.7" r="6.1"/><circle cx="954.5" cy="316.2" r="6.1"/><circle cx="922.5" cy="305.6" r="6.1"/><circle cx="936.1" cy="318.1" r="6.1"/><circle cx="871.3" cy="326.9" r="6.1"/><circle cx="882.9" cy="326.9" r="6.1"/><circle cx="884.8" cy="332.7" r="6.1"/><circle cx="898.4" cy="328.8" r="6.1"/><circle cx="920.6" cy="329.8" r="6.1"/><circle cx="830.7" cy="305.6" r="6.1"/><circle cx="730.1" cy="279.5" r="6.1"/><circle cx="744.6" cy="283.3" r="6.1"/><circle cx="722.4" cy="307.5" r="6.1"/><circle cx="687.5" cy="301.7" r="6.1"/><circle cx="940.9" cy="176.9" r="6.1"/><circle cx="972.8" cy="286.2" r="6.1"/><circle cx="852.9" cy="290.1" r="6.1"/><circle cx="1236.4" cy="238.7" r="6.1"/><circle cx="1174.1" cy="265.1" r="6.1"/><circle cx="1181.5" cy="263.1" r="6.1"/><circle cx="1172.7" cy="270.5" r="6.1"/><circle cx="1143.0" cy="284.1" r="6.1"/><circle cx="1187.0" cy="285.4" r="6.1"/><circle cx="1207.3" cy="292.2" r="6.1"/><circle cx="1183.6" cy="303.0" r="6.1"/><circle cx="1179.5" cy="312.5" r="6.1"/><circle cx="1186.3" cy="322.7" r="6.1"/><circle cx="1197.1" cy="318.6" r="6.1"/><circle cx="1201.9" cy="306.4" r="6.1"/><circle cx="1201.2" cy="284.1" r="6.1"/><circle cx="1217.4" cy="280.7" r="6.1"/><circle cx="1246.5" cy="291.5" r="6.1"/><circle cx="1254.0" cy="305.7" r="6.1"/><circle cx="1237.7" cy="299.0" r="6.1"/><circle cx="1241.8" cy="330.8" r="6.1"/><circle cx="1294.6" cy="264.4" r="6.1"/><circle cx="1271.6" cy="299.0" r="6.1"/><circle cx="1134.2" cy="324.0" r="6.1"/><circle cx="1144.3" cy="323.3" r="6.1"/><circle cx="1136.2" cy="329.4" r="6.1"/><circle cx="1161.2" cy="329.4" r="6.1"/><circle cx="1180.2" cy="330.8" r="6.1"/><circle cx="1174.1" cy="335.5" r="6.1"/><circle cx="1205.2" cy="337.6" r="6.1"/><circle cx="1138.2" cy="348.4" r="6.1"/><circle cx="1171.4" cy="350.4" r="6.1"/><circle cx="1175.5" cy="357.2" r="6.1"/><circle cx="1131.4" cy="361.9" r="6.1"/><circle cx="1167.3" cy="371.4" r="6.1"/><circle cx="1157.2" cy="374.8" r="6.1"/><circle cx="1310.9" cy="374.8" r="6.1"/><circle cx="1125.4" cy="368.0" r="6.1"/></g><g fill="#fff"><circle cx="149.2" cy="49.2" r="4.1"/><circle cx="130.2" cy="86.5" r="4.1"/><circle cx="108.2" cy="98.2" r="4.1"/><circle cx="135.2" cy="105.2" r="4.1"/><circle cx="186.2" cy="106.5" r="4.1"/><circle cx="178.0" cy="137.2" r="4.1"/><circle cx="234.2" cy="150.2" r="4.1"/><circle cx="248.2" cy="179.2" r="4.1"/><circle cx="350.2" cy="64.2" r="4.1"/><circle cx="394.2" cy="59.2" r="4.1"/><circle cx="476.5" cy="133.2" r="4.1"/><circle cx="365.2" cy="188.2" r="4.1"/><circle cx="316.0" cy="206.2" r="4.1"/><circle cx="418.0" cy="195.0" r="4.1"/><circle cx="416.0" cy="203.2" r="4.1"/><circle cx="451.2" cy="204.2" r="4.1"/><circle cx="380.0" cy="213.2" r="4.1"/><circle cx="381.2" cy="231.2" r="4.1"/><circle cx="327.2" cy="237.2" r="4.1"/><circle cx="382.0" cy="249.2" r="4.1"/><circle cx="307.5" cy="249.2" r="4.1"/><circle cx="283.2" cy="238.8" r="4.1"/><circle cx="425.0" cy="242.5" r="4.1"/><circle cx="462.0" cy="240.0" r="4.1"/><circle cx="460.0" cy="250.0" r="4.1"/><circle cx="558.2" cy="85.2" r="4.1"/><circle cx="578.2" cy="142.5" r="4.1"/><circle cx="521.2" cy="192.2" r="4.1"/><circle cx="518.2" cy="212.2" r="4.1"/><circle cx="637.0" cy="235.2" r="4.1"/><circle cx="797.2" cy="109.2" r="4.1"/><circle cx="794.2" cy="118.2" r="4.1"/><circle cx="955.8" cy="79.2" r="4.1"/><circle cx="728.2" cy="159.0" r="4.1"/><circle cx="774.2" cy="154.2" r="4.1"/><circle cx="794.8" cy="145.0" r="4.1"/><circle cx="794.2" cy="150.0" r="4.1"/><circle cx="829.2" cy="145.2" r="4.1"/><circle cx="848.2" cy="143.2" r="4.1"/><circle cx="868.2" cy="147.2" r="4.1"/><circle cx="799.2" cy="163.2" r="4.1"/><circle cx="809.2" cy="168.2" r="4.1"/><circle cx="787.2" cy="176.2" r="4.1"/><circle cx="736.2" cy="175.8" r="4.1"/><circle cx="740.0" cy="175.0" r="4.1"/><circle cx="746.2" cy="180.0" r="4.1"/><circle cx="719.2" cy="189.2" r="4.1"/><circle cx="716.2" cy="200.0" r="4.1"/><circle cx="728.2" cy="192.5" r="4.1"/><circle cx="735.0" cy="186.2" r="4.1"/><circle cx="791.2" cy="190.0" r="4.1"/><circle cx="787.5" cy="193.8" r="4.1"/><circle cx="809.2" cy="191.2" r="4.1"/><circle cx="817.2" cy="206.2" r="4.1"/><circle cx="822.2" cy="215.2" r="4.1"/><circle cx="833.2" cy="200.2" r="4.1"/><circle cx="839.2" cy="205.2" r="4.1"/><circle cx="941.2" cy="177.2" r="4.1"/><circle cx="891.2" cy="202.2" r="4.1"/><circle cx="903.2" cy="202.2" r="4.1"/><circle cx="860.2" cy="189.2" r="4.1"/><circle cx="826.2" cy="228.2" r="4.1"/><circle cx="817.2" cy="225.0" r="4.1"/><circle cx="746.2" cy="228.8" r="4.1"/><circle cx="750.2" cy="242.2" r="4.1"/><circle cx="845.0" cy="237.2" r="4.1"/><circle cx="852.2" cy="244.2" r="4.1"/><circle cx="830.2" cy="242.2" r="4.1"/><circle cx="902.2" cy="241.2" r="4.1"/><circle cx="917.2" cy="245.2" r="4.1"/><circle cx="761.2" cy="245.0" r="4.1"/><circle cx="770.0" cy="248.8" r="4.1"/><circle cx="497.5" cy="237.5" r="4.1"/><circle cx="505.0" cy="235.0" r="4.1"/><circle cx="1087.2" cy="61.2" r="4.1"/><circle cx="1189.2" cy="126.2" r="4.1"/><circle cx="1045.2" cy="138.2" r="4.1"/><circle cx="985.2" cy="170.2" r="4.1"/><circle cx="1107.2" cy="173.2" r="4.1"/><circle cx="1068.2" cy="213.2" r="4.1"/><circle cx="1231.2" cy="168.2" r="4.1"/><circle cx="1270.2" cy="222.2" r="4.1"/><circle cx="1236.2" cy="238.2" r="4.1"/><circle cx="1299.2" cy="231.2" r="4.1"/><circle cx="1047.2" cy="250.2" r="4.1"/><circle cx="1038.2" cy="252.2" r="4.1"/><circle cx="1018.2" cy="254.8" r="4.1"/><circle cx="981.2" cy="254.8" r="4.1"/><circle cx="1082.2" cy="256.8" r="4.1"/><circle cx="155.2" cy="358.2" r="4.1"/><circle cx="53.2" cy="504.2" r="4.1"/><circle cx="192.2" cy="491.2" r="4.1"/><circle cx="179.2" cy="503.2" r="4.1"/><circle cx="212.2" cy="505.2" r="4.1"/><circle cx="332.2" cy="326.2" r="4.1"/><circle cx="346.2" cy="320.2" r="4.1"/><circle cx="341.2" cy="337.2" r="4.1"/><circle cx="344.2" cy="291.2" r="4.1"/><circle cx="313.2" cy="302.2" r="4.1"/><circle cx="352.2" cy="360.2" r="4.1"/><circle cx="365.2" cy="357.2" r="4.1"/><circle cx="361.2" cy="349.2" r="4.1"/><circle cx="366.2" cy="347.2" r="4.1"/><circle cx="377.2" cy="347.2" r="4.1"/><circle cx="384.2" cy="360.2" r="4.1"/><circle cx="397.2" cy="365.2" r="4.1"/><circle cx="406.2" cy="357.2" r="4.1"/><circle cx="409.2" cy="352.2" r="4.1"/><circle cx="406.2" cy="378.2" r="4.1"/><circle cx="411.2" cy="383.2" r="4.1"/><circle cx="416.2" cy="375.2" r="4.1"/><circle cx="425.2" cy="394.2" r="4.1"/><circle cx="430.2" cy="396.2" r="4.1"/><circle cx="448.2" cy="400.2" r="4.1"/><circle cx="463.2" cy="411.2" r="4.1"/><circle cx="466.2" cy="426.2" r="4.1"/><circle cx="446.2" cy="443.2" r="4.1"/><circle cx="454.2" cy="363.2" r="4.1"/><circle cx="446.2" cy="346.2" r="4.1"/><circle cx="452.2" cy="346.2" r="4.1"/><circle cx="464.2" cy="342.2" r="4.1"/><circle cx="476.2" cy="349.2" r="4.1"/><circle cx="477.2" cy="394.2" r="4.1"/><circle cx="476.2" cy="409.2" r="4.1"/><circle cx="378.2" cy="290.2" r="4.1"/><circle cx="391.2" cy="290.2" r="4.1"/><circle cx="395.2" cy="284.2" r="4.1"/><circle cx="393.2" cy="303.2" r="4.1"/><circle cx="375.2" cy="316.2" r="4.1"/><circle cx="418.2" cy="312.2" r="4.1"/><circle cx="429.2" cy="313.2" r="4.1"/><circle cx="409.2" cy="294.2" r="4.1"/><circle cx="419.2" cy="285.2" r="4.1"/><circle cx="440.2" cy="275.2" r="4.1"/><circle cx="445.2" cy="265.2" r="4.1"/><circle cx="456.2" cy="291.2" r="4.1"/><circle cx="450.2" cy="298.2" r="4.1"/><circle cx="688.2" cy="302.2" r="4.1"/><circle cx="640.2" cy="367.2" r="4.1"/><circle cx="656.2" cy="369.2" r="4.1"/><circle cx="662.2" cy="377.2" r="4.1"/><circle cx="722.2" cy="386.2" r="4.1"/><circle cx="785.2" cy="388.2" r="4.1"/><circle cx="737.2" cy="415.2" r="4.1"/><circle cx="765.2" cy="409.2" r="4.1"/><circle cx="779.2" cy="416.2" r="4.1"/><circle cx="790.2" cy="419.2" r="4.1"/><circle cx="797.2" cy="420.2" r="4.1"/><circle cx="786.2" cy="437.2" r="4.1"/><circle cx="811.2" cy="452.2" r="4.1"/><circle cx="873.2" cy="416.2" r="4.1"/><circle cx="896.2" cy="433.2" r="4.1"/><circle cx="906.2" cy="428.2" r="4.1"/><circle cx="865.2" cy="447.2" r="4.1"/><circle cx="875.2" cy="453.2" r="4.1"/><circle cx="902.2" cy="461.2" r="4.1"/><circle cx="882.2" cy="488.2" r="4.1"/><circle cx="861.2" cy="494.2" r="4.1"/><circle cx="830.2" cy="305.2" r="4.1"/><circle cx="877.2" cy="374.2" r="4.1"/><circle cx="916.2" cy="364.2" r="4.1"/><circle cx="922.2" cy="375.2" r="4.1"/><circle cx="871.2" cy="327.2" r="4.1"/><circle cx="884.2" cy="324.2" r="4.1"/><circle cx="885.2" cy="333.2" r="4.1"/><circle cx="898.2" cy="329.2" r="4.1"/><circle cx="920.2" cy="330.2" r="4.1"/><circle cx="936.2" cy="318.2" r="4.1"/><circle cx="954.2" cy="316.2" r="4.1"/><circle cx="922.2" cy="305.2" r="4.1"/><circle cx="951.2" cy="302.2" r="4.1"/><circle cx="942.2" cy="280.2" r="4.1"/><circle cx="949.2" cy="289.2" r="4.1"/><circle cx="921.2" cy="286.2" r="4.1"/><circle cx="908.2" cy="281.2" r="4.1"/><circle cx="894.2" cy="279.2" r="4.1"/><circle cx="903.2" cy="274.2" r="4.1"/><circle cx="831.2" cy="277.2" r="4.1"/><circle cx="815.2" cy="273.2" r="4.1"/><circle cx="802.2" cy="276.2" r="4.1"/><circle cx="794.2" cy="288.2" r="4.1"/><circle cx="787.2" cy="271.2" r="4.1"/><circle cx="722.2" cy="307.2" r="4.1"/><circle cx="744.2" cy="283.2" r="4.1"/><circle cx="732.2" cy="282.2" r="4.1"/><circle cx="922.2" cy="267.2" r="4.1"/><circle cx="944.2" cy="265.2" r="4.1"/><circle cx="889.2" cy="296.2" r="4.1"/><circle cx="846.2" cy="277.2" r="4.1"/><circle cx="851.2" cy="281.2" r="4.1"/><circle cx="541.2" cy="414.2" r="4.1"/><circle cx="507.2" cy="393.2" r="4.1"/><circle cx="488.2" cy="388.2" r="4.1"/><circle cx="496.2" cy="393.2" r="4.1"/><circle cx="483.8" cy="430.2" r="4.1"/><circle cx="484.2" cy="451.2" r="4.1"/><circle cx="492.2" cy="473.2" r="4.1"/><circle cx="488.2" cy="477.2" r="4.1"/><circle cx="567.2" cy="440.2" r="4.1"/><circle cx="605.2" cy="449.2" r="4.1"/><circle cx="619.2" cy="466.2" r="4.1"/><circle cx="610.2" cy="477.2" r="4.1"/><circle cx="606.2" cy="485.2" r="4.1"/><circle cx="510.2" cy="503.2" r="4.1"/><circle cx="543.2" cy="514.2" r="4.1"/><circle cx="584.2" cy="512.2" r="4.1"/><circle cx="598.2" cy="513.2" r="4.1"/><circle cx="501.2" cy="362.2" r="4.1"/><circle cx="516.2" cy="368.2" r="4.1"/><circle cx="511.2" cy="364.2" r="4.1"/><circle cx="1082.2" cy="260.2" r="4.1"/><circle cx="1031.2" cy="264.2" r="4.1"/><circle cx="1043.2" cy="270.2" r="4.1"/><circle cx="1016.2" cy="275.2" r="4.1"/><circle cx="973.2" cy="286.2" r="4.1"/><circle cx="1037.2" cy="307.2" r="4.1"/><circle cx="1016.2" cy="324.2" r="4.1"/><circle cx="994.2" cy="332.2" r="4.1"/><circle cx="1033.2" cy="347.2" r="4.1"/><circle cx="1041.2" cy="357.2" r="4.1"/><circle cx="1065.2" cy="352.2" r="4.1"/><circle cx="1066.2" cy="368.2" r="4.1"/><circle cx="1071.2" cy="366.2" r="4.1"/><circle cx="1053.2" cy="368.2" r="4.1"/><circle cx="1039.2" cy="385.2" r="4.1"/><circle cx="1050.2" cy="384.2" r="4.1"/><circle cx="1059.2" cy="385.2" r="4.1"/><circle cx="1047.2" cy="402.2" r="4.1"/><circle cx="1060.2" cy="412.2" r="4.1"/><circle cx="1033.2" cy="437.2" r="4.1"/><circle cx="965.2" cy="453.2" r="4.1"/><circle cx="1104.2" cy="332.2" r="4.1"/><circle cx="1111.2" cy="337.2" r="4.1"/><circle cx="1103.2" cy="347.2" r="4.1"/><circle cx="1099.2" cy="341.2" r="4.1"/><circle cx="1138.2" cy="348.2" r="4.1"/><circle cx="1131.2" cy="362.2" r="4.1"/><circle cx="1121.2" cy="369.2" r="4.1"/><circle cx="1144.2" cy="323.2" r="4.1"/><circle cx="1134.2" cy="324.2" r="4.1"/><circle cx="1136.2" cy="330.2" r="4.1"/><circle cx="1143.2" cy="284.2" r="4.1"/><circle cx="1173.8" cy="264.2" r="4.1"/><circle cx="1181.2" cy="263.2" r="4.1"/><circle cx="1173.2" cy="270.2" r="4.1"/><circle cx="1183.8" cy="278.2" r="4.1"/><circle cx="1186.2" cy="285.5" r="4.1"/><circle cx="1206.2" cy="291.8" r="4.1"/><circle cx="1183.8" cy="303.0" r="4.1"/><circle cx="1178.8" cy="311.8" r="4.1"/><circle cx="1201.2" cy="306.8" r="4.1"/><circle cx="1196.2" cy="319.2" r="4.1"/><circle cx="1186.2" cy="321.8" r="4.1"/><circle cx="1180.0" cy="330.5" r="4.1"/><circle cx="1173.8" cy="335.5" r="4.1"/><circle cx="1171.2" cy="350.5" r="4.1"/><circle cx="1175.0" cy="356.8" r="4.1"/><circle cx="1167.5" cy="372.2" r="4.1"/><circle cx="1157.5" cy="376.2" r="4.1"/><circle cx="1155.0" cy="396.2" r="4.1"/><circle cx="1246.2" cy="291.2" r="4.1"/><circle cx="1237.2" cy="298.2" r="4.1"/><circle cx="1253.8" cy="305.5" r="4.1"/><circle cx="1271.2" cy="298.0" r="4.1"/><circle cx="1241.2" cy="331.2" r="4.1"/><circle cx="1294.2" cy="264.2" r="4.1"/><circle cx="1207.2" cy="397.2" r="4.1"/><circle cx="1227.2" cy="403.2" r="4.1"/><circle cx="1310.2" cy="376.2" r="4.1"/><circle cx="1307.2" cy="383.2" r="4.1"/><circle cx="1255.2" cy="438.2" r="4.1"/><circle cx="1259.2" cy="446.2" r="4.1"/><circle cx="1200.2" cy="440.2" r="4.1"/><circle cx="1210.2" cy="454.2" r="4.1"/><circle cx="1175.2" cy="465.2" r="4.1"/><circle cx="1184.2" cy="463.2" r="4.1"/><circle cx="1218.2" cy="469.2" r="4.1"/><circle cx="1226.2" cy="474.2" r="4.1"/><circle cx="1291.2" cy="445.2" r="4.1"/><circle cx="1336.2" cy="451.2" r="4.1"/><circle cx="1314.2" cy="460.2" r="4.1"/><circle cx="1316.2" cy="471.2" r="4.1"/><circle cx="1227.2" cy="503.2" r="4.1"/><circle cx="1190.0" cy="418.0" r="4.1"/><circle cx="1202.5" cy="316.8" r="4.1"/><circle cx="44.2" cy="607.2" r="4.1"/><circle cx="472.2" cy="609.2" r="4.1"/><circle cx="488.2" cy="523.2" r="4.1"/><circle cx="543.8" cy="517.2" r="4.1"/><circle cx="569.2" cy="518.5" r="4.1"/><circle cx="598.8" cy="516.8" r="4.1"/><circle cx="553.2" cy="543.2" r="4.1"/><circle cx="566.2" cy="545.2" r="4.1"/><circle cx="556.2" cy="555.2" r="4.1"/><circle cx="519.2" cy="563.2" r="4.1"/><circle cx="538.2" cy="577.2" r="4.1"/><circle cx="564.2" cy="536.2" r="4.1"/><circle cx="819.2" cy="523.2" r="4.1"/><circle cx="1218.2" cy="559.2" r="4.1"/><circle cx="1331.2" cy="573.2" r="4.1"/><circle cx="381.6" cy="231.4" r="4.1"/><circle cx="382.3" cy="249.3" r="4.1"/><circle cx="425.6" cy="242.2" r="4.1"/><circle cx="432.4" cy="249.0" r="4.1"/><circle cx="461.5" cy="239.5" r="4.1"/><circle cx="460.8" cy="250.4" r="4.1"/><circle cx="473.0" cy="244.3" r="4.1"/><circle cx="498.0" cy="236.8" r="4.1"/><circle cx="505.5" cy="234.1" r="4.1"/><circle cx="445.2" cy="265.3" r="4.1"/><circle cx="440.5" cy="275.4" r="4.1"/><circle cx="446.6" cy="280.1" r="4.1"/><circle cx="395.8" cy="284.2" r="4.1"/><circle cx="391.1" cy="290.3" r="4.1"/><circle cx="378.2" cy="289.6" r="4.1"/><circle cx="393.8" cy="303.2" r="4.1"/><circle cx="408.0" cy="291.0" r="4.1"/><circle cx="410.7" cy="297.1" r="4.1"/><circle cx="420.2" cy="285.6" r="4.1"/><circle cx="418.1" cy="312.0" r="4.1"/><circle cx="429.0" cy="314.0" r="4.1"/><circle cx="452.0" cy="291.0" r="4.1"/><circle cx="457.4" cy="291.7" r="4.1"/><circle cx="451.3" cy="299.1" r="4.1"/><circle cx="444.5" cy="305.9" r="4.1"/><circle cx="452.0" cy="328.9" r="4.1"/><circle cx="456.7" cy="336.3" r="4.1"/><circle cx="464.2" cy="341.1" r="4.1"/><circle cx="446.6" cy="345.8" r="4.1"/><circle cx="453.3" cy="346.5" r="4.1"/><circle cx="476.4" cy="349.2" r="4.1"/><circle cx="377.5" cy="347.2" r="4.1"/><circle cx="366.0" cy="347.2" r="4.1"/><circle cx="408.7" cy="355.3" r="4.1"/><circle cx="406.0" cy="358.0" r="4.1"/><circle cx="384.3" cy="360.0" r="4.1"/><circle cx="366.7" cy="356.6" r="4.1"/><circle cx="397.2" cy="364.1" r="4.1"/><circle cx="454.0" cy="362.7" r="4.1"/><circle cx="485.8" cy="360.0" r="4.1"/><circle cx="500.7" cy="361.4" r="4.1"/><circle cx="515.6" cy="364.1" r="4.1"/><circle cx="498.7" cy="236.8" r="4.1"/><circle cx="504.8" cy="234.1" r="4.1"/><circle cx="429.0" cy="360.0" r="4.1"/><circle cx="728.2" cy="159.2" r="4.1"/><circle cx="774.6" cy="153.7" r="4.1"/><circle cx="794.9" cy="149.9" r="4.1"/><circle cx="868.4" cy="147.9" r="4.1"/><circle cx="799.7" cy="163.4" r="4.1"/><circle cx="809.4" cy="168.2" r="4.1"/><circle cx="787.2" cy="176.0" r="4.1"/><circle cx="736.9" cy="176.0" r="4.1"/><circle cx="745.6" cy="179.8" r="4.1"/><circle cx="719.5" cy="188.6" r="4.1"/><circle cx="716.6" cy="200.2" r="4.1"/><circle cx="734.0" cy="186.6" r="4.1"/><circle cx="791.0" cy="190.5" r="4.1"/><circle cx="809.4" cy="190.5" r="4.1"/><circle cx="833.6" cy="200.2" r="4.1"/><circle cx="839.4" cy="205.0" r="4.1"/><circle cx="817.1" cy="206.0" r="4.1"/><circle cx="822.9" cy="214.7" r="4.1"/><circle cx="816.2" cy="224.3" r="4.1"/><circle cx="826.8" cy="228.2" r="4.1"/><circle cx="830.7" cy="241.7" r="4.1"/><circle cx="845.2" cy="236.9" r="4.1"/><circle cx="851.9" cy="243.7" r="4.1"/><circle cx="746.5" cy="228.2" r="4.1"/><circle cx="751.4" cy="241.7" r="4.1"/><circle cx="763.0" cy="244.6" r="4.1"/><circle cx="770.7" cy="248.5" r="4.1"/><circle cx="780.4" cy="247.5" r="4.1"/><circle cx="788.1" cy="258.2" r="4.1"/><circle cx="786.2" cy="270.8" r="4.1"/><circle cx="801.7" cy="276.6" r="4.1"/><circle cx="810.4" cy="279.5" r="4.1"/><circle cx="815.2" cy="272.7" r="4.1"/><circle cx="822.9" cy="254.3" r="4.1"/><circle cx="834.5" cy="254.3" r="4.1"/><circle cx="829.7" cy="260.1" r="4.1"/><circle cx="821.0" cy="264.0" r="4.1"/><circle cx="831.6" cy="277.5" r="4.1"/><circle cx="844.2" cy="277.5" r="4.1"/><circle cx="891.6" cy="202.1" r="4.1"/><circle cx="903.2" cy="202.1" r="4.1"/><circle cx="859.7" cy="189.5" r="4.1"/><circle cx="902.2" cy="240.8" r="4.1"/><circle cx="916.7" cy="244.6" r="4.1"/><circle cx="925.5" cy="259.2" r="4.1"/><circle cx="922.5" cy="266.9" r="4.1"/><circle cx="943.8" cy="265.0" r="4.1"/><circle cx="903.2" cy="273.7" r="4.1"/><circle cx="909.0" cy="281.4" r="4.1"/><circle cx="894.5" cy="279.5" r="4.1"/><circle cx="921.6" cy="286.2" r="4.1"/><circle cx="941.9" cy="279.5" r="4.1"/><circle cx="948.7" cy="289.1" r="4.1"/><circle cx="951.6" cy="301.7" r="4.1"/><circle cx="954.5" cy="316.2" r="4.1"/><circle cx="922.5" cy="305.6" r="4.1"/><circle cx="936.1" cy="318.1" r="4.1"/><circle cx="871.3" cy="326.9" r="4.1"/><circle cx="882.9" cy="326.9" r="4.1"/><circle cx="884.8" cy="332.7" r="4.1"/><circle cx="898.4" cy="328.8" r="4.1"/><circle cx="920.6" cy="329.8" r="4.1"/><circle cx="830.7" cy="305.6" r="4.1"/><circle cx="730.1" cy="279.5" r="4.1"/><circle cx="744.6" cy="283.3" r="4.1"/><circle cx="722.4" cy="307.5" r="4.1"/><circle cx="687.5" cy="301.7" r="4.1"/><circle cx="940.9" cy="176.9" r="4.1"/><circle cx="972.8" cy="286.2" r="4.1"/><circle cx="852.9" cy="290.1" r="4.1"/><circle cx="1236.4" cy="238.7" r="4.1"/><circle cx="1174.1" cy="265.1" r="4.1"/><circle cx="1181.5" cy="263.1" r="4.1"/><circle cx="1172.7" cy="270.5" r="4.1"/><circle cx="1143.0" cy="284.1" r="4.1"/><circle cx="1187.0" cy="285.4" r="4.1"/><circle cx="1207.3" cy="292.2" r="4.1"/><circle cx="1183.6" cy="303.0" r="4.1"/><circle cx="1179.5" cy="312.5" r="4.1"/><circle cx="1186.3" cy="322.7" r="4.1"/><circle cx="1197.1" cy="318.6" r="4.1"/><circle cx="1201.9" cy="306.4" r="4.1"/><circle cx="1201.2" cy="284.1" r="4.1"/><circle cx="1217.4" cy="280.7" r="4.1"/><circle cx="1246.5" cy="291.5" r="4.1"/><circle cx="1254.0" cy="305.7" r="4.1"/><circle cx="1237.7" cy="299.0" r="4.1"/><circle cx="1241.8" cy="330.8" r="4.1"/><circle cx="1294.6" cy="264.4" r="4.1"/><circle cx="1271.6" cy="299.0" r="4.1"/><circle cx="1134.2" cy="324.0" r="4.1"/><circle cx="1144.3" cy="323.3" r="4.1"/><circle cx="1136.2" cy="329.4" r="4.1"/><circle cx="1161.2" cy="329.4" r="4.1"/><circle cx="1180.2" cy="330.8" r="4.1"/><circle cx="1174.1" cy="335.5" r="4.1"/><circle cx="1205.2" cy="337.6" r="4.1"/><circle cx="1138.2" cy="348.4" r="4.1"/><circle cx="1171.4" cy="350.4" r="4.1"/><circle cx="1175.5" cy="357.2" r="4.1"/><circle cx="1131.4" cy="361.9" r="4.1"/><circle cx="1167.3" cy="371.4" r="4.1"/><circle cx="1157.2" cy="374.8" r="4.1"/><circle cx="1310.9" cy="374.8" r="4.1"/><circle cx="1125.4" cy="368.0" r="4.1"/></g><g fill="#82cc7e"><circle cx="751.2" cy="203.8" r="21.2"/><circle cx="472.3" cy="261.2" r="20.3"/><circle cx="785.0" cy="217.5" r="20.0"/><circle cx="749.4" cy="204.0" r="19.3"/><circle cx="793.9" cy="219.5" r="19.3"/><circle cx="862.6" cy="260.1" r="16.4"/><circle cx="430.3" cy="297.7" r="15.6"/><circle cx="1138.8" cy="381.8" r="15.5"/><circle cx="416.2" cy="252.5" r="15.0"/><circle cx="416.1" cy="257.1" r="14.9"/><circle cx="1289.2" cy="288.2" r="14.5"/><circle cx="1199.2" cy="267.8" r="14.2"/><circle cx="1289.9" cy="288.1" r="14.2"/><circle cx="897.2" cy="177.8" r="13.8"/><circle cx="862.2" cy="252.5" r="13.8"/><circle cx="802.5" cy="225.0" r="13.8"/><circle cx="428.2" cy="298.0" r="13.8"/><circle cx="1198.8" cy="269.2" r="13.8"/><circle cx="896.4" cy="177.9" r="13.5"/><circle cx="299.2" cy="297.2" r="12.5"/><circle cx="467.5" cy="268.0" r="12.5"/><circle cx="1217.2" cy="335.8" r="12.5"/><circle cx="1237.5" cy="280.5" r="12.5"/><circle cx="1237.1" cy="280.7" r="12.2"/><circle cx="1138.2" cy="372.8" r="12.2"/><circle cx="1217.2" cy="309.2" r="12.0"/><circle cx="770.7" cy="196.3" r="11.6"/><circle cx="782.3" cy="235.0" r="11.6"/><circle cx="1218.8" cy="336.2" r="11.5"/><circle cx="772.5" cy="195.0" r="11.2"/><circle cx="790.0" cy="240.0" r="11.2"/><circle cx="351.2" cy="268.2" r="11.2"/><circle cx="966.2" cy="335.5" r="11.2"/><circle cx="1218.8" cy="309.1" r="10.8"/><circle cx="481.8" cy="251.7" r="10.8"/><circle cx="964.1" cy="331.7" r="10.6"/><circle cx="802.5" cy="200.0" r="10.0"/><circle cx="415.8" cy="263.0" r="10.0"/><circle cx="886.2" cy="305.2" r="10.0"/><circle cx="950.0" cy="333.0" r="10.0"/><circle cx="861.2" cy="539.2" r="10.0"/><circle cx="1307.2" cy="591.2" r="10.0"/><circle cx="805.5" cy="200.2" r="9.7"/><circle cx="799.7" cy="258.2" r="9.7"/><circle cx="760.1" cy="262.1" r="9.7"/><circle cx="285.0" cy="228.8" r="9.5"/><circle cx="695.2" cy="230.2" r="9.5"/><circle cx="441.2" cy="323.0" r="9.5"/><circle cx="1150.4" cy="312.5" r="9.5"/><circle cx="441.2" cy="320.8" r="9.5"/><circle cx="885.8" cy="305.6" r="9.3"/><circle cx="695.3" cy="230.1" r="9.3"/><circle cx="1150.2" cy="312.2" r="9.0"/><circle cx="1151.2" cy="430.2" r="9.0"/><circle cx="573.8" cy="527.2" r="9.0"/><circle cx="1189.0" cy="347.7" r="8.8"/><circle cx="447.9" cy="248.3" r="8.8"/><circle cx="447.5" cy="248.2" r="8.8"/><circle cx="1198.8" cy="258.0" r="8.8"/><circle cx="761.2" cy="265.5" r="8.8"/><circle cx="970.0" cy="513.0" r="8.8"/><circle cx="1186.2" cy="346.8" r="8.5"/><circle cx="490.6" cy="361.4" r="8.1"/><circle cx="420.2" cy="352.2" r="8.0"/><circle cx="1142.2" cy="424.2" r="8.0"/><circle cx="381.2" cy="301.1" r="7.9"/><circle cx="420.2" cy="351.9" r="7.9"/><circle cx="948.7" cy="331.7" r="7.7"/><circle cx="692.4" cy="322.0" r="7.7"/><circle cx="483.8" cy="250.0" r="7.5"/><circle cx="760.0" cy="250.0" r="7.5"/><circle cx="381.2" cy="301.2" r="7.5"/><circle cx="900.8" cy="400.8" r="7.5"/><circle cx="871.2" cy="311.8" r="7.5"/><circle cx="735.0" cy="283.0" r="7.5"/><circle cx="801.2" cy="263.0" r="7.5"/><circle cx="490.0" cy="361.8" r="7.5"/><circle cx="1045.2" cy="396.2" r="7.5"/><circle cx="734.0" cy="284.3" r="7.4"/><circle cx="871.3" cy="313.3" r="7.4"/><circle cx="964.8" cy="516.0" r="7.3"/><circle cx="284.2" cy="279.2" r="7.0"/><circle cx="323.2" cy="299.2" r="7.0"/><circle cx="691.2" cy="322.2" r="7.0"/><circle cx="664.2" cy="370.2" r="7.0"/><circle cx="861.2" cy="284.2" r="7.0"/><circle cx="498.2" cy="402.2" r="7.0"/><circle cx="528.2" cy="577.2" r="7.0"/><circle cx="1196.8" cy="563.5" r="7.0"/><circle cx="860.7" cy="284.3" r="6.8"/><circle cx="510.2" cy="241.6" r="6.8"/><circle cx="457.2" cy="482.2" r="6.8"/><circle cx="819.8" cy="150.8" r="6.5"/><circle cx="1189.2" cy="294.2" r="6.5"/><circle cx="1160.8" cy="458.8" r="6.5"/><circle cx="1160.6" cy="315.9" r="6.5"/><circle cx="1189.0" cy="293.5" r="6.5"/><circle cx="510.0" cy="241.2" r="6.2"/><circle cx="762.5" cy="282.2" r="6.2"/><circle cx="1269.8" cy="294.2" r="6.2"/><circle cx="1192.8" cy="416.2" r="6.2"/><circle cx="820.0" cy="150.8" r="6.2"/><circle cx="1270.2" cy="293.5" r="6.1"/><circle cx="445.2" cy="332.9" r="6.1"/><circle cx="387.7" cy="315.3" r="6.1"/><circle cx="373.5" cy="359.3" r="6.1"/><circle cx="442.2" cy="379.2" r="6.0"/><circle cx="1048.2" cy="320.2" r="6.0"/><circle cx="43.2" cy="588.2" r="6.0"/><circle cx="1338.8" cy="543.8" r="6.0"/><circle cx="848.1" cy="289.1" r="5.8"/><circle cx="879.0" cy="293.0" r="5.8"/><circle cx="396.2" cy="241.8" r="5.5"/><circle cx="871.2" cy="211.2" r="5.5"/><circle cx="1249.8" cy="129.8" r="5.5"/><circle cx="373.2" cy="359.2" r="5.5"/><circle cx="387.2" cy="315.2" r="5.5"/><circle cx="902.2" cy="350.2" r="5.5"/><circle cx="931.2" cy="336.2" r="5.5"/><circle cx="848.2" cy="289.8" r="5.5"/><circle cx="717.5" cy="273.0" r="5.5"/><circle cx="568.8" cy="496.8" r="5.5"/><circle cx="1031.2" cy="360.8" r="5.5"/><circle cx="1129.2" cy="404.2" r="5.5"/><circle cx="1161.2" cy="316.8" r="5.5"/><circle cx="1146.2" cy="335.8" r="5.5"/><circle cx="1216.2" cy="379.2" r="5.5"/><circle cx="1310.8" cy="500.2" r="5.5"/><circle cx="587.2" cy="525.2" r="5.5"/><circle cx="1190.4" cy="311.2" r="5.4"/><circle cx="1218.8" cy="272.6" r="5.4"/><circle cx="1225.6" cy="259.0" r="5.4"/><circle cx="1213.4" cy="286.1" r="5.4"/><circle cx="1147.0" cy="335.5" r="5.4"/><circle cx="717.5" cy="273.7" r="5.4"/><circle cx="763.0" cy="282.4" r="5.4"/><circle cx="800.7" cy="176.9" r="5.4"/><circle cx="871.3" cy="211.8" r="5.4"/><circle cx="931.3" cy="336.5" r="5.4"/><circle cx="395.8" cy="241.6" r="5.4"/><circle cx="369.4" cy="332.3" r="5.4"/><circle cx="434.4" cy="266.6" r="5.4"/><circle cx="281.2" cy="220.0" r="5.0"/><circle cx="665.8" cy="113.5" r="5.0"/><circle cx="801.2" cy="177.2" r="5.0"/><circle cx="741.2" cy="250.0" r="5.0"/><circle cx="147.2" cy="351.2" r="5.0"/><circle cx="323.2" cy="263.2" r="5.0"/><circle cx="369.2" cy="332.2" r="5.0"/><circle cx="468.8" cy="416.8" r="5.0"/><circle cx="450.0" cy="273.0" r="5.0"/><circle cx="685.8" cy="378.2" r="5.0"/><circle cx="746.8" cy="387.8" r="5.0"/><circle cx="778.8" cy="433.8" r="5.0"/><circle cx="878.8" cy="293.0" r="5.0"/><circle cx="751.2" cy="275.5" r="5.0"/><circle cx="1190.2" cy="311.2" r="5.0"/><circle cx="1218.8" cy="271.8" r="5.0"/><circle cx="1225.0" cy="260.0" r="5.0"/><circle cx="975.0" cy="340.5" r="5.0"/><circle cx="739.8" cy="250.4" r="4.8"/><circle cx="750.4" cy="275.6" r="4.8"/><circle cx="792.0" cy="284.3" r="4.8"/><circle cx="807.5" cy="288.2" r="4.8"/><circle cx="870.3" cy="281.4" r="4.8"/><circle cx="701.1" cy="319.1" r="4.8"/><circle cx="1172.1" cy="364.0" r="4.7"/><circle cx="407.0" cy="314.7" r="4.7"/><circle cx="406.0" cy="273.4" r="4.7"/><circle cx="441.2" cy="360.0" r="4.7"/><circle cx="317.0" cy="192.2" r="4.5"/><circle cx="470.0" cy="238.8" r="4.5"/><circle cx="944.2" cy="191.2" r="4.5"/><circle cx="1026.8" cy="206.8" r="4.5"/><circle cx="1225.0" cy="256.2" r="4.5"/><circle cx="406.8" cy="315.2" r="4.5"/><circle cx="441.2" cy="359.2" r="4.5"/><circle cx="433.8" cy="268.0" r="4.5"/><circle cx="700.0" cy="319.2" r="4.5"/><circle cx="803.2" cy="469.2" r="4.5"/><circle cx="791.2" cy="283.0" r="4.5"/><circle cx="807.8" cy="286.8" r="4.5"/><circle cx="1017.8" cy="261.2" r="4.5"/><circle cx="1091.2" cy="346.2" r="4.5"/><circle cx="1161.2" cy="393.2" r="4.5"/><circle cx="1213.8" cy="285.5" r="4.5"/><circle cx="1251.8" cy="298.0" r="4.5"/><circle cx="1171.2" cy="363.8" r="4.5"/><circle cx="1324.2" cy="579.2" r="4.5"/><circle cx="1169.4" cy="294.2" r="4.3"/><circle cx="1305.4" cy="252.2" r="4.3"/><circle cx="1252.6" cy="298.3" r="4.3"/><circle cx="718.5" cy="261.1" r="4.3"/><circle cx="844.2" cy="168.2" r="4.3"/><circle cx="943.8" cy="191.5" r="4.3"/><circle cx="723.3" cy="298.8" r="4.3"/><circle cx="844.2" cy="168.2" r="4.2"/><circle cx="1069.2" cy="181.2" r="4.2"/><circle cx="654.2" cy="278.2" r="4.2"/><circle cx="858.2" cy="479.2" r="4.2"/><circle cx="1234.4" cy="247.5" r="4.1"/><circle cx="1166.7" cy="345.7" r="4.1"/><circle cx="1295.3" cy="252.9" r="4.1"/><circle cx="510.2" cy="364.1" r="4.1"/><circle cx="1234.2" cy="247.2" r="4.0"/><circle cx="1305.2" cy="252.2" r="4.0"/><circle cx="407.5" cy="274.2" r="4.0"/><circle cx="719.5" cy="261.0" r="4.0"/><circle cx="894.2" cy="440.2" r="4.0"/><circle cx="617.2" cy="457.2" r="4.0"/><circle cx="1079.2" cy="324.2" r="4.0"/><circle cx="1169.2" cy="294.2" r="4.0"/><circle cx="859.7" cy="188.6" r="3.9"/><circle cx="1184.3" cy="278.0" r="3.8"/><circle cx="1161.2" cy="329.4" r="3.8"/><circle cx="470.3" cy="238.9" r="3.8"/><circle cx="582.2" cy="251.8" r="3.8"/><circle cx="1087.2" cy="247.2" r="3.8"/><circle cx="1295.2" cy="253.2" r="3.8"/><circle cx="311.2" cy="286.2" r="3.8"/><circle cx="349.2" cy="354.2" r="3.8"/><circle cx="723.8" cy="299.2" r="3.8"/><circle cx="924.8" cy="385.8" r="3.8"/><circle cx="904.2" cy="338.2" r="3.8"/><circle cx="511.2" cy="364.2" r="3.8"/><circle cx="522.8" cy="446.8" r="3.8"/><circle cx="790.8" cy="167.8" r="3.5"/><circle cx="1033.8" cy="181.8" r="3.5"/><circle cx="1152.8" cy="199.8" r="3.5"/><circle cx="1161.8" cy="225.8" r="3.5"/><circle cx="363.2" cy="366.8" r="3.5"/><circle cx="803.2" cy="302.2" r="3.5"/><circle cx="1027.2" cy="263.0" r="3.5"/><circle cx="1161.2" cy="329.2" r="3.5"/><circle cx="1365.2" cy="471.2" r="3.5"/><circle cx="1166.8" cy="346.2" r="3.5"/><circle cx="791.0" cy="168.2" r="3.5"/><circle cx="905.1" cy="250.4" r="3.5"/><circle cx="929.3" cy="277.5" r="3.5"/><circle cx="863.6" cy="231.1" r="3.5"/><circle cx="803.6" cy="302.7" r="3.5"/><circle cx="385.3" cy="261.5" r="3.4"/><circle cx="437.1" cy="344.4" r="3.4"/><circle cx="550.2" cy="227.2" r="3.2"/><circle cx="863.2" cy="231.2" r="3.2"/><circle cx="1265.2" cy="529.2" r="3.2"/><circle cx="843.2" cy="135.2" r="3.0"/><circle cx="905.2" cy="250.0" r="3.0"/><circle cx="385.2" cy="261.2" r="3.0"/><circle cx="437.2" cy="344.2" r="3.0"/><circle cx="722.2" cy="307.2" r="3.0"/><circle cx="929.8" cy="277.2" r="3.0"/><circle cx="1149.2" cy="284.2" r="3.0"/><circle cx="1149.1" cy="284.1" r="3.0"/><circle cx="786.2" cy="147.0" r="2.9"/><circle cx="1240.5" cy="298.3" r="2.7"/><circle cx="1201.9" cy="317.2" r="2.7"/><circle cx="455.0" cy="179.8" r="2.5"/><circle cx="215.8" cy="468.8" r="2.5"/><circle cx="406.8" cy="436.8" r="2.5"/><circle cx="504.8" cy="303.8" r="2.5"/><circle cx="583.8" cy="511.8" r="2.5"/><circle cx="1053.2" cy="368.2" r="2.5"/><circle cx="1107.8" cy="389.8" r="2.5"/><circle cx="1267.2" cy="406.8" r="2.5"/><circle cx="1194.2" cy="468.8" r="2.5"/><circle cx="1291.2" cy="514.2" r="2.5"/><circle cx="823.8" cy="574.0" r="2.5"/><circle cx="823.9" cy="185.7" r="2.3"/><circle cx="313.8" cy="127.0" r="2.2"/><circle cx="280.5" cy="247.0" r="2.2"/><circle cx="823.8" cy="185.8" r="2.2"/><circle cx="1158.5" cy="352.5" r="2.0"/><circle cx="1199.2" cy="342.3" r="2.0"/><circle cx="1171.4" cy="339.6" r="2.0"/><circle cx="504.8" cy="303.8" r="2.0"/><circle cx="408.0" cy="303.8" r="2.0"/><circle cx="302.2" cy="227.5" r="2.0"/><circle cx="867.0" cy="56.8" r="2.0"/><circle cx="829.2" cy="212.5" r="2.0"/><circle cx="843.2" cy="231.2" r="2.0"/><circle cx="1246.8" cy="226.8" r="2.0"/><circle cx="1252.8" cy="231.8" r="2.0"/><circle cx="332.2" cy="344.2" r="2.0"/><circle cx="468.8" cy="391.8" r="2.0"/><circle cx="765.2" cy="409.2" r="2.0"/><circle cx="902.2" cy="493.8" r="2.0"/><circle cx="745.0" cy="293.0" r="2.0"/><circle cx="517.2" cy="394.2" r="2.0"/><circle cx="615.2" cy="472.2" r="2.0"/><circle cx="981.2" cy="286.2" r="2.0"/><circle cx="1058.8" cy="407.8" r="2.0"/><circle cx="1231.8" cy="429.2" r="2.0"/><circle cx="1198.2" cy="468.2" r="2.0"/><circle cx="1298.2" cy="477.2" r="2.0"/><circle cx="1323.2" cy="513.8" r="2.0"/><circle cx="961.2" cy="368.0" r="2.0"/><circle cx="501.8" cy="533.8" r="2.0"/><circle cx="481.2" cy="676.0" r="2.0"/><circle cx="851.8" cy="531.8" r="2.0"/><circle cx="1290.8" cy="516.8" r="2.0"/><circle cx="830.7" cy="213.7" r="1.9"/><circle cx="887.7" cy="282.4" r="1.9"/><circle cx="948.7" cy="247.5" r="1.9"/><circle cx="744.6" cy="293.0" r="1.9"/><circle cx="259.8" cy="185.0" r="1.8"/><circle cx="311.8" cy="78.0" r="1.8"/><circle cx="410.8" cy="222.8" r="1.8"/><circle cx="877.2" cy="435.2" r="1.8"/><circle cx="1192.4" cy="328.1" r="1.6"/><circle cx="1216.8" cy="261.7" r="1.6"/><circle cx="500.7" cy="227.1" r="1.6"/><circle cx="846.1" cy="220.5" r="1.6"/><circle cx="766.8" cy="303.6" r="1.6"/><circle cx="886.8" cy="258.2" r="1.6"/><circle cx="733.0" cy="295.9" r="1.6"/><circle cx="126.8" cy="130.0" r="1.6"/><circle cx="178.0" cy="137.2" r="1.6"/><circle cx="908.8" cy="107.8" r="1.6"/><circle cx="846.8" cy="220.0" r="1.6"/><circle cx="948.2" cy="247.2" r="1.6"/><circle cx="729.5" cy="183.8" r="1.6"/><circle cx="1041.2" cy="120.2" r="1.6"/><circle cx="1211.2" cy="218.2" r="1.6"/><circle cx="1071.8" cy="232.8" r="1.6"/><circle cx="362.2" cy="290.2" r="1.6"/><circle cx="454.8" cy="431.2" r="1.6"/><circle cx="797.8" cy="453.8" r="1.6"/><circle cx="766.8" cy="303.8" r="1.6"/><circle cx="733.8" cy="296.8" r="1.6"/><circle cx="878.8" cy="444.8" r="1.6"/><circle cx="588.8" cy="454.8" r="1.6"/><circle cx="491.8" cy="498.8" r="1.6"/><circle cx="1008.8" cy="313.8" r="1.6"/><circle cx="1032.2" cy="330.8" r="1.6"/><circle cx="1019.8" cy="342.8" r="1.6"/><circle cx="1058.8" cy="343.8" r="1.6"/><circle cx="1055.2" cy="352.2" r="1.6"/><circle cx="1134.2" cy="410.8" r="1.6"/><circle cx="1158.2" cy="352.2" r="1.6"/><circle cx="1174.8" cy="429.8" r="1.6"/><circle cx="1171.2" cy="435.2" r="1.6"/><circle cx="1265.8" cy="438.2" r="1.6"/><circle cx="1209.8" cy="470.8" r="1.6"/><circle cx="1290.8" cy="467.8" r="1.6"/><circle cx="478.8" cy="554.8" r="1.6"/><circle cx="481.2" cy="555.2" r="1.6"/><circle cx="1329.2" cy="526.8" r="1.6"/><circle cx="1332.2" cy="528.8" r="1.6"/><circle cx="152.2" cy="39.5" r="1.6"/><circle cx="377.2" cy="176.5" r="1.6"/><circle cx="423.2" cy="203.8" r="1.6"/><circle cx="467.5" cy="214.2" r="1.6"/><circle cx="557.2" cy="62.2" r="1.6"/><circle cx="500.8" cy="226.8" r="1.6"/><circle cx="400.0" cy="293.0" r="1.6"/><circle cx="1223.8" cy="393.0" r="1.6"/><circle cx="478.8" cy="676.0" r="1.6"/><circle cx="398.5" cy="254.4" r="1.6"/><circle cx="390.4" cy="271.3" r="1.6"/><circle cx="369.4" cy="279.5" r="1.6"/><circle cx="399.9" cy="313.3" r="1.6"/><circle cx="138.2" cy="86.5" r="1.6"/><circle cx="140.2" cy="89.2" r="1.6"/><circle cx="115.2" cy="101.2" r="1.6"/><circle cx="237.0" cy="158.2" r="1.6"/><circle cx="299.2" cy="235.2" r="1.6"/><circle cx="486.2" cy="137.8" r="1.6"/><circle cx="516.2" cy="171.2" r="1.6"/><circle cx="327.2" cy="318.2" r="1.6"/><circle cx="368.8" cy="278.0" r="1.6"/><circle cx="1305.8" cy="457.2" r="1.6"/><circle cx="41.2" cy="597.2" r="1.6"/><circle cx="34.2" cy="620.2" r="1.6"/><circle cx="1194.2" cy="572.8" r="1.6"/><circle cx="1317.2" cy="579.2" r="1.6"/></g>
<path fill="none" stroke="#888888" stroke-opacity="0.55" stroke-width="0.8" d="M460,250 448,248 M1234,247 1238,280 M1234,247 1270,294 M428,298 441,323 M760,262 762,282 M797,109 772,195 M1252,298 1189,294 M1050,384 1045,396 M852,532 901,401 M365,357 420,352 M369,332 420,352 M902,241 861,284 M1107,173 1199,258 M407,437 442,379 M1196,319 1189,294 M1190,311 1189,294 M1018,255 1048,320 M779,434 901,401 M406,357 441,323 M844,168 802,225 M369,278 381,301 M1218,559 1138,373 M393,303 381,301 M564,536 574,527 M178,137 285,229 M523,447 498,402 M916,364 901,401 M408,291 381,301 M396,242 416,252 M447,280 448,248 M851,281 863,260 M418,312 445,333 M887,258 862,252 M803,469 861,539 M728,192 751,204 M1336,451 1339,544 M1218,559 1197,564 M1225,260 1238,280 M794,118 820,151 M582,252 510,241 M853,290 863,260 M1033,347 1048,320 M362,290 381,301 M429,360 420,352 M887,258 863,260 M416,252 416,257 M349,354 323,299 M1265,529 1307,591 M877,374 966,336 M408,274 428,298 M498,402 664,370 M476,349 490,362 M795,145 772,195 M786,147 802,200 M720,261 695,230 M1018,255 966,336 M1329,527 1339,544 M1111,337 1138,373 M1108,390 1139,382 M817,206 802,225 M419,285 428,298 M516,364 490,362 M1186,286 1189,294 M425,242 416,263 M936,318 901,401 M817,225 802,225 M1206,292 1189,294 M791,190 806,200 M695,230 760,262 M1134,411 1142,424 M1365,471 1339,544 M587,525 574,527 M1240,298 1238,280 M1059,408 1045,396 M1240,298 1270,294 M843,231 862,252 M610,477 457,482 M1149,284 1150,312 M1201,284 1238,280 M1194,469 1238,280 M811,452 861,539 M902,350 886,305 M931,336 886,305 M464,342 445,333 M844,168 820,151 M346,320 323,299 M951,302 901,401 M1190,311 1217,309 M510,241 472,261 M1196,319 1217,309 M886,305 861,284 M323,263 323,299 M815,273 802,225 M1254,306 1270,294 M1254,306 1238,280 M761,266 800,258 M722,386 664,370 M1041,357 861,284 M237,158 284,279 M829,145 820,151 M416,375 420,352 M1179,312 1189,294 M411,297 428,298 M314,127 285,229 M741,250 762,282 M472,609 528,577 M1316,471 1339,544 M543,514 498,402 M765,409 664,370 M582,252 484,250 M902,461 901,401 M879,293 886,305 M921,286 886,305 M843,231 802,225 M879,293 861,284 M1226,474 1193,416 M234,150 299,297 M332,326 323,299 M1168,372 1048,320 M1238,280 1199,269 M317,192 285,229 M973,286 964,332 M1291,445 1307,591 M452,346 468,268 M1199,258 1238,280 M795,145 820,151 M941,177 897,178 M728,159 751,204 M802,200 785,218 M352,360 442,379 M248,179 285,229 M448,400 442,379 M375,316 381,301 M787,271 801,263 M1158,376 1142,424 M1071,366 1150,312 M378,290 351,268 M787,176 802,200 M1227,503 1161,459 M1079,324 1045,396 M556,555 490,362 M416,263 416,257 M1206,292 1217,309 M1217,309 1189,294 M1298,477 1339,544 M400,313 381,301 M556,555 574,527 M510,241 484,250 M284,279 299,297 M406,357 420,352 M1065,352 1186,347 M1087,247 1150,312 M369,332 381,301 M1009,314 1048,320 M909,108 897,178 M450,273 448,248 M1161,317 1150,312 M948,247 886,305 M1161,329 1150,312 M966,336 950,333 M1217,309 1217,336 M956,79 897,178 M1270,222 1238,280 M351,268 381,301 M411,223 416,252 M656,369 664,370 M1247,227 1238,280 M418,195 468,268 M464,342 442,379 M846,277 863,260 M922,267 862,252 M861,284 863,260 M1069,181 1048,320 M800,258 790,240 M1043,270 1048,320 M1150,312 1186,347 M454,363 457,482 M1125,368 1138,373 M393,303 428,298 M888,282 863,260 M518,212 468,268 M861,494 861,539 M922,375 901,401 M1071,366 1045,396 M178,137 284,279 M735,186 785,218 M765,409 761,266 M1173,270 1199,269 M1027,263 1048,320 M492,473 442,379 M808,287 800,258 M782,235 794,220 M944,191 897,178 M1253,232 1199,258 M484,250 472,261 M363,367 420,352 M1289,288 1270,294 M1289,288 1238,280 M1324,579 1161,459 M416,257 428,298 M786,437 800,258 M1108,390 1217,336 M407,315 381,301 M399,254 448,248 M1214,286 1199,269 M468,214 484,250 M1043,270 966,336 M385,261 416,257 M920,330 950,333 M488,388 498,402 M801,263 802,225 M985,170 1048,320 M615,472 574,527 M921,286 964,332 M882,488 965,516 M1291,468 1151,430 M1033,437 1193,416 M839,205 802,200 M416,252 416,263 M719,189 772,195 M801,177 802,200 M519,563 528,577 M430,396 416,257 M544,517 574,527 M637,235 695,230 M824,186 802,200 M897,178 806,200 M640,367 691,322 M1201,284 1199,269 M901,401 950,333 M323,263 351,268 M1217,262 1189,294 M541,414 498,402 M720,261 760,262 M1050,384 1048,320 M803,469 871,312 M416,375 457,482 M484,451 420,352 M930,277 950,333 M1144,323 1150,312 M501,362 323,299 M408,274 416,263 M896,433 901,401 M469,392 442,379 M817,225 794,220 M502,534 490,362 M810,279 800,258 M1069,181 1150,312 M797,420 901,401 M1227,403 1048,320 M476,409 484,250 M762,282 761,266 M1053,368 1139,382 M476,349 442,379 M956,79 802,200 M802,200 794,220 M1072,233 1048,320 M848,290 871,312 M666,114 695,230 M365,188 416,257 M1336,451 1193,416 M1142,424 1045,396 M473,244 472,261 M785,388 871,312 M1146,336 1150,312 M803,302 762,282 M1047,250 1048,320 M446,443 457,482 M954,316 964,332 M510,503 457,482 M1184,303 1199,269 M1161,459 1193,416 M429,313 420,352 M819,523 970,513 M1171,364 1150,312 M437,344 420,352 M1099,341 1186,347 M1158,352 1186,347 M299,297 323,299 M830,305 871,312 M1199,258 1199,269 M1136,330 1150,312 M1219,272 1270,294 M906,428 886,305 M599,517 574,527 M821,264 790,240 M382,249 416,263 M1060,412 1151,430 M1173,270 1199,258 M416,203 416,252 M894,279 886,305 M767,304 801,263 M700,319 762,282 M457,336 498,402 M1174,336 1186,347 M472,261 510,241 M617,457 664,370 M964,332 966,336 M317,192 299,297 M871,211 806,200 M1027,207 1048,320 M1034,182 897,178 M898,329 871,312 M302,228 285,229 M1068,213 1048,320 M1225,260 1199,258 M718,273 760,250 M1045,396 1048,320 M550,227 468,268 M942,280 966,336 M770,249 761,266 M1295,253 1217,309 M688,302 695,230 M400,293 381,301 M916,364 966,336 M944,265 950,333 M820,151 806,200 M1131,362 1193,416 M578,142 510,241 M395,284 381,301 M470,239 472,261 M363,367 416,252 M553,543 574,527 M686,378 664,370 M654,278 691,322 M1199,269 1189,294 M384,360 490,362 M1267,407 1217,309 M462,240 484,250 M468,214 416,252 M868,147 820,151 M656,369 695,230 M1048,320 1045,396 M925,259 886,305 M1009,314 964,332 M1199,342 1186,347 M1033,437 1045,396 M802,276 801,263 M1066,368 1045,396 M791,283 801,263 M1171,350 1142,424 M1210,471 1161,459 M902,494 861,284 M716,200 751,204 M839,205 806,200 M1045,396 966,336 M1199,342 1238,280 M1171,435 1197,564 M801,177 806,200 M1079,324 1048,320 M843,135 820,151 M833,200 785,218 M419,285 416,252 M824,186 806,200 M619,466 691,322 M719,189 751,204 M1217,281 1238,280 M452,346 445,333 M780,248 790,240 M1311,500 1270,294 M800,258 801,263 M746,229 760,250 M299,235 299,297 M501,362 490,362 M931,336 950,333 M450,298 428,298 M366,347 420,352 M1210,454 1193,416 M1175,357 1186,347 M1232,429 1151,430 M1138,373 1139,382 M1225,256 1150,312 M1226,474 1139,382 M349,354 442,379 M285,229 351,268 M861,494 871,312 M1161,393 1161,459 M861,539 965,516 M761,245 790,240 M470,239 484,250 M831,277 861,284 M373,359 420,352 M1339,544 1307,591 M908,281 886,305 M909,108 806,200 M908,281 861,284 M496,393 498,402 M894,440 871,312 M409,294 381,301 M722,307 695,230 M1055,352 1199,258 M886,305 871,312 M518,212 510,241 M490,362 484,250 M1059,408 1150,312 M1211,218 1217,309 M970,513 965,516 M516,171 510,241 M1186,347 1217,309 M578,142 484,250 M760,262 760,250 M308,249 284,279 M486,138 510,241 M1299,231 1199,258 M903,274 863,260 M902,461 966,336 M1299,231 1289,288 M901,401 1045,396 M492,499 457,482 M445,333 441,323 M903,202 862,252 M871,312 862,252 M1207,397 1139,382 M1087,247 1048,320 M809,191 794,220 M848,143 897,178 M397,365 441,323 M598,513 664,370 M1247,227 1199,258 M1144,323 1139,382 M1180,330 1186,347 M736,176 751,204 M994,332 1048,320 M877,435 950,333 M498,238 510,241 M1104,332 1138,373 M716,200 695,230 M606,485 528,577 M1161,329 1199,269 M1199,269 1199,258 M248,179 351,268 M1210,471 1339,544 M469,417 498,402 M1193,416 1217,336 M865,447 901,401 M1331,573 1161,459 M798,454 861,539 M799,163 802,200 M791,168 806,200 M797,420 664,370 M1224,393 1193,416 M381,301 323,299 M889,296 886,305 M1219,272 1199,269 M788,258 790,240 M332,344 351,268 M1146,336 1139,382 M902,494 861,539 M1059,344 1142,424 M809,168 802,200 M1305,252 1186,347 M448,400 420,352 M1143,284 1150,312 M801,263 800,258 M477,394 498,402 M1200,440 1193,416 M1161,317 1217,336 M1153,200 1189,294 M488,477 420,352 M302,228 284,279 M1189,294 1217,309 M879,445 871,312 M822,215 806,200 M41,597 43,588 M390,271 416,257 M468,268 416,263 M1181,263 1189,294 M479,676 457,482 M516,171 484,250 M994,332 966,336 M981,286 861,284 M486,138 484,250 M774,154 772,195 M691,322 762,282 M1265,529 1151,430 M790,419 901,401 M790,240 782,235 M1020,343 863,260 M852,532 861,539 M873,416 871,312 M882,488 861,539 M1129,404 1142,424 M284,279 323,299 M950,333 861,284 M567,440 574,527 M408,304 381,301 M788,194 772,195 M785,218 790,240 M505,235 484,250 M863,260 861,284 M1266,438 1193,416 M409,355 420,352 M416,257 416,252 M884,324 886,305 M1205,338 1217,336 M746,180 772,195 M445,265 448,248 M794,288 761,266 M1031,264 1048,320 M327,237 284,279 M391,290 381,301 M387,315 381,301 M366,347 381,301 M1201,307 1217,309 M865,447 970,513 M891,202 897,178 M845,237 862,252 M1131,362 1138,373 M409,352 472,261 M373,359 381,301 M847,220 862,252 M751,204 785,218 M423,204 416,252 M311,286 284,279 M1192,328 1217,309 M260,185 448,248 M1198,468 1161,459 M847,220 863,260 M823,254 801,263 M381,231 323,299 M860,189 897,178 M1218,469 1161,459 M440,275 428,298 M425,242 416,252 M550,227 510,241 M397,365 420,352 M829,212 802,200 M666,114 820,151 M492,499 428,298 M1031,264 966,336 M1033,347 1161,459 M406,378 351,268 M1202,317 1217,309 M408,291 428,298 M1324,579 1307,591 M496,393 457,482 M896,433 966,336 M432,249 416,252 M377,176 416,252 M858,479 861,539 M1210,454 1138,373 M299,235 285,229 M523,447 468,268 M965,516 861,539 M902,241 862,252 M377,347 420,352 M311,286 299,297 M981,286 964,332 M965,453 970,513 M411,383 445,333 M1032,331 1138,373 M587,525 528,577 M1190,418 1138,373 M1332,529 1161,459 M1237,298 1238,280 M362,290 351,268 M1237,298 1270,294 M1246,291 1238,280 M1246,291 1270,294 M1259,446 1197,564 M728,159 802,200 M511,364 490,362 M469,392 420,352 M457,482 441,323 M352,360 381,301 M1136,330 1189,294 M1027,263 950,333 M985,170 897,178 M418,195 416,252 M950,333 964,332 M730,279 762,282 M381,301 351,268 M1291,514 1193,416 M448,248 472,261 M486,360 490,362 M425,394 416,263 M894,279 950,333 M323,299 284,279 M820,151 794,220 M516,368 490,362 M462,240 448,248 M871,327 861,284 M420,352 445,333 M377,347 442,379 M1241,331 1217,336 M833,200 806,200 M873,416 901,401 M1151,430 1199,269 M1038,252 1048,320 M486,360 351,268 M477,394 457,482 M476,409 498,402 M1038,252 897,178 M1048,320 966,336 M344,291 323,299 M1031,361 1045,396 M365,188 351,268 M1039,385 1045,396 M774,154 751,204 M501,227 510,241 M1218,469 1339,544 M1125,368 1139,382 M1103,347 1138,373 M1294,264 1289,288 M308,249 285,229 M740,175 751,204 M1271,298 1289,288 M316,206 285,229 M323,299 299,297 M390,271 416,263 M452,291 428,298 M498,238 416,252 M735,186 751,204 M724,299 761,266 M964,332 1048,320 M922,375 964,332 M567,440 498,402 M1217,281 1199,258 M925,386 950,333 M1236,238 1238,280 M1236,238 1270,294 M1072,233 1199,269 M1091,346 1045,396 M516,368 441,323 M772,195 785,218 M851,281 861,284 M1307,591 1161,459 M484,430 490,362 M746,180 751,204 M387,315 428,298 M770,249 760,250 M434,268 416,257 M853,290 861,284 M1175,357 1199,258 M1332,529 1339,544 M492,473 457,482 M1167,346 1151,430 M528,577 574,527 M1174,264 1189,294 M479,676 528,577 M863,231 862,252 M507,393 445,333 M521,192 472,261 M332,344 323,299 M942,280 950,333 M432,249 448,248 M445,333 457,482 M452,329 445,333 M829,212 806,200 M420,352 442,379 M1158,376 1139,382 M456,291 468,268 M1027,207 897,178 M619,466 574,527 M538,577 528,577 M442,379 498,402 M411,223 416,257 M501,227 484,250 M1068,213 1199,269 M406,378 420,352 M473,244 484,250 M463,411 442,379 M1291,468 1339,544 M867,57 785,218 M442,379 420,352 M455,431 420,352 M786,147 820,151 M885,333 871,312 M664,370 790,240 M973,286 871,312 M1329,527 1307,591 M835,254 862,252 M852,244 862,252 M1184,278 1189,294 M1306,457 1339,544 M1217,262 1199,258 M787,176 772,195 M1104,332 1150,312 M863,231 802,225 M327,318 323,299 M1365,471 1307,591 M407,315 428,298 M871,211 862,252 M799,163 820,151 M835,254 863,260 M1214,286 1217,309 M1194,573 1197,564 M780,248 760,250 M498,402 490,362 M441,359 416,263 M737,415 664,370 M1184,278 1217,336 M1186,347 1217,336 M1107,173 1189,294 M870,281 886,305 M809,168 820,151 M750,242 760,262 M1149,284 1199,269 M870,281 861,284 M605,449 691,322 M791,283 800,258 M1194,469 1161,459 M662,377 695,230 M396,242 416,263 M1082,257 1048,320 M606,485 574,527 M1059,344 1048,320 M761,245 760,250 M476,133 484,250 M897,178 820,151 M505,304 468,268 M787,271 761,266 M1143,284 1199,269 M1307,591 1339,544 M440,275 416,263 M734,297 762,282 M385,261 416,263 M517,394 498,402 M1259,446 1193,416 M1082,257 1189,294 M490,362 498,402 M1032,331 1048,320 M468,268 472,261 M1031,361 1139,382 M794,150 806,200 M949,289 964,332 M1082,260 1048,320 M313,302 299,297 M566,545 574,527 M411,297 381,301 M543,514 574,527 M1060,412 1045,396 M848,290 861,284 M1238,280 1270,294 M1171,364 1186,347 M730,184 772,195 M382,249 416,252 M891,202 806,200 M826,228 794,220 M484,451 457,482 M1167,346 1186,347 M430,396 442,379 M691,322 664,370 M450,273 468,268 M446,443 574,527 M846,277 861,284 M861,284 886,305 M1169,294 1189,294 M736,176 785,218 M448,248 416,252 M378,290 381,301 M416,263 416,252 M922,267 886,305 M888,282 886,305 M925,386 901,401 M941,177 863,260 M1066,368 1186,347 M450,298 441,323 M1241,331 1238,280 M817,206 806,200 M760,250 760,262 M917,245 862,252 M1314,460 1289,288 M1211,218 1199,258 M1331,573 1307,591 M505,235 510,241 M1270,222 1289,288 M53,504 43,588 M1016,275 1048,320 M1139,382 1138,373 M589,455 574,527 M741,250 760,250 M456,291 428,298 M446,346 468,268 M917,245 863,260 M1103,347 1048,320 M479,555 498,402 M884,324 871,312 M1250,130 1199,269 M569,497 574,527 M637,235 802,225 M948,247 950,333 M860,189 862,252 M1134,411 1151,430 M824,574 861,539 M922,305 886,305 M434,268 416,263 M1189,294 1199,269 M281,220 284,279 M806,200 772,195 M794,220 785,218 M802,225 785,218 M1134,324 1150,312 M1171,340 1189,294 M782,235 790,240 M751,204 772,195 M803,302 801,263 M1171,350 1186,347 M1339,544 1161,459 M1155,396 1150,312 M380,213 416,252 M954,316 950,333 M569,518 574,527 M466,426 468,268 M455,431 457,482 M1307,383 1217,336 M280,247 285,229 M451,204 472,261 M1082,260 1150,312 M391,290 416,263 M830,260 801,263 M1039,385 1048,320 M760,250 790,240 M327,318 351,268 M1190,418 1151,430 M1217,336 1189,294 M1202,317 1217,336 M862,252 871,312 M1162,226 1186,347 M44,607 43,588 M688,302 691,322 M1255,438 1193,416 M821,264 801,263 M516,364 428,298 M454,363 442,379 M981,255 966,336 M1193,416 1151,430 M346,320 284,279 M445,306 445,333 M384,360 420,352 M1091,346 1048,320 M791,168 772,195 M797,109 820,151 M1291,445 1193,416 M744,283 760,262 M1314,460 1339,544 M472,261 468,268 M794,150 820,151 M541,414 490,362 M902,350 901,401 M975,340 966,336 M829,145 897,178 M654,278 751,204 M894,440 901,401 M779,434 970,513 M961,368 1045,396 M845,237 863,260 M779,416 901,401 M925,259 863,260 M822,215 802,225 M790,240 802,225 M351,268 323,299 M871,327 871,312 M409,294 428,298 M904,338 886,305 M767,304 762,282 M1186,322 1217,309 M1266,438 1307,591 M730,184 751,204 M823,254 800,258 M1270,294 1199,269 M1250,130 1199,258 M662,377 664,370 M724,299 691,322 M1200,440 1151,430 M472,609 498,402 M1175,465 1161,459 M429,313 428,298 M455,180 448,248 M369,278 351,268 M283,239 285,229 M1153,200 1199,258 M877,374 901,401 M1217,336 1217,309 M779,416 800,258 M686,378 794,220 M1053,368 1045,396 M1181,263 1199,258 M1306,457 1193,416 M409,352 420,352 M722,307 691,322 M316,206 351,268 M903,202 897,178 M610,477 574,527 M944,191 820,151 M904,338 800,258 M944,265 964,332 M1134,324 1186,347 M332,326 299,297 M1186,286 1150,312 M794,118 802,200 M826,228 802,225 M877,435 901,401 M1175,465 1217,309 M1205,338 1199,258 M831,277 863,260 M700,319 691,322 M949,289 950,333 M730,279 761,266 M1207,397 1193,416 M830,260 863,260 M885,333 863,260 M965,453 964,332 M802,276 761,266 M584,512 574,527 M744,283 762,282 M809,191 806,200 M975,340 901,401 M1161,393 1139,382 M762,282 760,250 M802,225 794,220 M425,394 442,379 M879,445 901,401 M455,180 510,241 M1184,463 1161,459 M428,298 416,263 M1142,424 1151,430 M786,437 901,401 M409,355 416,263 M381,231 416,252 M858,479 970,513 M1179,312 1217,309 M1231,168 1199,269 M617,457 574,527 M745,293 761,266 M488,477 457,482 M695,230 751,204 M399,254 416,257 M965,516 970,513 M745,293 762,282 M260,185 285,229 M808,287 801,263 M1020,343 1048,320 M1016,324 1048,320 M488,388 445,333 M861,539 901,401 M830,305 861,284 M664,370 691,322 M1298,477 1197,564 M1171,435 1151,430 M751,276 782,235 M1184,463 1150,312 M460,250 468,268 M380,213 416,257 M1216,379 1217,336 M1016,275 964,332 M970,513 901,401 M341,337 472,261 M408,304 428,298 M889,296 863,260 M1255,438 1339,544 M463,411 498,402 M1018,261 1048,320 M1252,298 1270,294 M1138,348 1142,424 M1175,430 1193,416 M1323,514 1339,544 M1192,328 1186,347 M1171,340 1186,347 M411,383 442,379 M1155,396 1139,382 M903,274 886,305 M1174,264 1199,269 M521,192 510,241 M505,304 484,250 M1186,322 1186,347 M785,218 794,220 M1307,383 1270,294 M1224,393 1270,294 M1270,294 1289,288 M806,200 794,220 M1016,324 966,336 M285,229 284,279 M761,266 760,250 M1180,330 1193,416 M785,388 762,282 M280,247 299,297 M981,255 964,332 M447,280 468,268 M788,258 800,258 M819,523 861,539 M1310,376 1199,269 M344,291 381,301 M327,237 351,268 M476,133 510,241 M1189,126 1199,269 M416,203 468,268 M1047,402 1142,424 M871,312 886,305 M734,297 760,262 M34,620 43,588 M400,293 416,263 M863,260 862,252 M605,449 574,527 M452,291 441,323 M1198,468 1186,347 M281,220 285,229 M1121,369 1142,424 M1111,337 1193,416 M395,284 416,263 M437,344 445,333 M1018,261 966,336 M446,346 445,333 M810,279 801,263 M640,367 664,370 M488,523 457,482 M423,204 416,257 M1317,579 1307,591 M566,545 498,402 M1267,407 1193,416 M457,482 498,402 M507,393 498,402 M400,313 441,323 M361,349 381,301 M728,192 772,195 M1227,403 1193,416 M794,288 801,263 M1099,341 1138,373 M299,297 284,279 M867,57 820,151 M283,239 284,279 M737,415 691,322 M445,265 416,263 M1227,503 1197,564 M1037,307 1048,320 M457,336 445,333 M740,175 802,200 M361,349 416,252 M441,323 445,333 M1231,168 1199,258 M722,386 861,284 M418,312 428,298 M718,273 760,262 M1139,382 1151,430 M377,176 416,257 M452,329 420,352 M852,244 863,260 M1055,352 1048,320 M1047,402 1045,396 M1232,429 1193,416 M314,127 299,297 M1184,303 1189,294 M920,330 861,284 M936,318 950,333 M788,194 802,200 M441,359 442,379 M875,453 901,401 M1253,232 1238,280 M1295,253 1289,288 M598,513 574,527 M906,428 901,401 M1175,430 1142,424 M1138,373 970,513 M747,388 760,262 M747,388 664,370 M1291,514 1339,544 M517,394 528,577 M791,190 802,200 M772,195 751,204 M790,419 761,266 M751,276 762,282 M511,364 498,402 M1059,385 1150,312 M429,360 441,323 M234,150 285,229 M830,242 862,252 M1305,252 1289,288 M313,302 323,299 M732,282 761,266 M1065,352 1048,320 M1311,500 1339,544 M1034,182 1048,320 M732,282 762,282 M1138,348 1138,373 M441,323 420,352 M466,426 498,402 M951,302 950,333 M905,250 862,252 M862,252 863,260 M1168,372 1138,373 M1161,459 1151,430 M1047,250 966,336 M922,305 950,333 M569,497 457,482 M1037,307 966,336 M237,158 285,229 M1151,430 1142,424 M930,277 886,305 M1129,404 1193,416 M905,250 863,260 M484,250 468,268 M1197,564 1161,459 M341,337 323,299 M750,242 760,250 M966,336 964,332 M1169,294 1199,269 M1316,471 1193,416 M815,273 801,263 M868,147 897,178 M502,534 528,577 M1162,226 1199,258 M746,229 760,262 M510,503 574,527 M1189,126 1199,258 M1225,256 1199,258 M794,220 802,225 M407,437 420,352 M1121,369 1138,373 M1310,376 1289,288 M830,242 802,225 M1059,385 1045,396 M798,454 901,401 M1150,312 1189,294 M1294,264 1238,280 M574,527 528,577 M843,135 897,178 M1271,298 1270,294 M451,204 448,248 M445,306 441,323 M479,555 528,577 M1041,357 1048,320 M375,316 420,352 M1201,307 1199,269 M1174,336 1139,382 M961,368 966,336 M484,430 498,402 M848,143 820,151 M898,329 886,305"/>
<path fill="none" stroke="#888888" stroke-opacity="0.75" stroke-width="0.9" d="M299,298 310,282 323,265 336,249 351,232 368,215 387,198 408,181 432,166 459,152 489,141 522,133 555,129 589,130 622,136 654,145 682,158 708,173 731,189 751,205 M284,280 296,263 309,244 324,226 341,206 360,187 383,168 408,150 438,134 471,121 507,112 545,109 583,112 620,120 653,133 683,149 709,167 731,186 751,205 M284,280 294,263 306,244 318,225 333,206 350,186 370,166 392,146 419,126 450,109 485,95 524,87 564,85 604,90 642,100 675,116 705,134 730,154 751,174 770,194 786,214 M284,229 299,208 316,187 337,166 361,144 389,123 422,105 460,91 501,83 545,82 587,89 625,103 659,121 688,141 713,162 733,184 751,205 M281,219 296,198 314,176 335,154 359,132 389,112 424,93 463,80 506,73 550,75 592,84 630,99 663,119 691,140 714,162 734,184 751,205 M281,219 294,197 310,174 330,149 353,125 381,100 416,77 457,59 504,48 554,46 602,55 644,73 681,95 710,119 735,144 755,168 771,192 786,214 M316,207 334,187 354,167 378,148 406,129 438,113 473,101 512,94 552,94 591,100 627,112 660,128 688,146 712,165 733,185 751,205 M352,269 366,253 382,237 400,221 420,206 442,191 466,177 493,165 522,156 553,150 585,148 617,150 648,156 677,165 704,177 729,190 751,205 M416,259 434,243 453,229 474,215 498,202 523,191 551,182 580,175 610,172 640,173 670,177 699,184 726,194 751,205 M416,259 432,244 450,229 470,215 491,201 515,189 541,179 569,171 598,166 627,164 657,165 686,170 714,178 740,189 764,201 786,214 M396,243 413,227 432,210 453,194 477,179 504,166 533,156 565,148 598,145 631,145 663,150 694,159 722,171 748,185 771,200 M433,257 451,242 470,227 491,212 514,199 540,187 567,178 597,171 627,167 658,168 689,171 718,178 746,188 771,200 M448,250 466,236 487,223 509,210 533,200 559,191 586,184 614,180 643,180 672,182 700,187 726,195 751,205 M448,250 466,235 487,221 509,207 534,196 561,186 589,178 619,174 649,173 679,176 709,182 736,190 762,201 786,214 M448,250 467,237 488,226 511,216 535,208 560,201 587,197 614,195 641,196 667,200 693,206 717,214 740,224 762,235 781,247 800,259 M470,240 490,228 511,217 534,207 558,199 584,193 611,190 638,189 665,190 691,195 716,201 740,210 762,220 M470,240 490,227 512,215 535,204 560,195 587,188 615,184 643,182 672,184 699,189 726,196 751,205 M470,265 487,252 506,240 525,228 547,218 570,208 594,201 620,195 647,192 673,192 700,194 726,198 751,205 M470,265 489,252 508,240 530,229 553,219 578,211 604,204 631,201 658,199 685,201 712,205 738,212 762,220 M470,265 487,252 506,239 527,226 549,215 573,205 599,197 625,191 653,188 681,188 709,191 736,196 761,204 786,214 M470,265 488,251 507,237 527,224 550,211 575,201 601,192 629,186 658,183 687,182 716,186 744,192 771,200 M470,265 490,257 512,249 534,243 557,239 581,236 605,235 629,237 652,239 675,244 697,250 719,258 739,266 M470,265 488,255 508,244 528,235 550,227 573,221 596,216 621,214 645,213 670,215 694,218 717,224 740,231 761,239 781,249 800,259 M470,265 488,252 508,240 530,229 553,219 577,210 603,204 630,200 658,199 685,200 712,204 738,210 762,219 785,229 M470,265 487,252 505,239 525,227 546,215 570,205 594,197 620,191 647,187 675,187 702,188 729,193 M470,265 491,258 514,253 537,248 560,246 584,245 608,246 631,249 654,253 676,259 697,266 718,275 M470,265 487,252 506,239 527,227 549,215 573,206 598,198 625,192 652,189 680,189 707,192 734,197 760,204 784,214 806,225 827,237 846,250 863,264 M470,265 483,248 497,229 513,211 531,192 552,174 577,156 604,139 635,125 670,115 707,110 744,110 780,116 814,127 845,141 872,158 896,176 M470,265 487,253 506,242 526,232 548,222 570,215 594,208 619,204 644,202 670,202 695,205 720,210 743,217 766,225 787,235 806,245 825,257 842,269 858,281 872,294 886,306 M470,265 488,254 508,243 528,233 551,224 574,216 598,211 624,208 649,207 675,208 700,211 724,217 748,225 770,233 790,244 810,255 828,266 844,279 M481,257 499,244 519,231 541,220 565,210 590,202 616,196 643,192 671,191 698,193 725,198 751,205 M481,257 499,243 519,230 541,218 565,207 590,198 617,192 644,188 673,187 701,188 729,193 M481,257 494,238 510,219 528,199 548,179 572,160 600,142 631,126 666,114 M456,274 473,260 492,246 512,233 535,221 559,210 584,202 611,195 640,191 668,191 697,193 724,198 751,205 M456,274 472,260 490,247 509,234 529,222 552,211 576,202 601,194 628,189 655,187 683,187 710,190 737,196 762,204 786,214 M429,299 444,285 460,271 477,257 496,244 516,231 538,220 562,210 587,201 614,195 642,191 670,191 698,193 725,198 751,205 M429,299 444,286 460,273 477,260 495,248 515,236 537,226 559,216 584,209 609,203 635,200 662,199 688,201 714,205 739,212 762,220 M445,334 458,320 471,307 486,294 501,281 518,268 535,255 555,244 575,233 598,223 621,214 646,208 672,204 698,202 725,202 751,205 M445,334 460,324 476,314 493,304 510,295 529,287 548,280 567,273 588,267 609,263 630,260 652,258 674,258 696,259 718,262 739,266 M387,316 400,302 413,288 427,274 443,261 460,247 478,234 498,222 519,211 542,201 567,193 593,187 620,183 648,182 675,184 701,189 727,196 751,205 M381,302 394,288 409,273 425,258 442,244 461,230 482,217 505,204 530,194 556,185 584,179 614,176 643,176 672,179 700,186 726,194 751,205 M464,269 482,256 500,243 520,231 542,219 565,209 590,201 617,195 644,192 671,191 699,193 725,198 751,205 M443,292 457,279 473,265 490,253 508,240 528,229 549,218 572,209 596,202 621,196 648,193 674,192 700,194 726,199 751,205 M441,322 454,309 468,296 483,283 499,270 516,258 534,246 554,234 575,224 598,215 622,208 647,203 673,200 699,199 725,201 751,205 M441,322 454,308 468,294 484,280 500,266 518,252 537,239 558,226 581,215 606,205 632,197 659,192 688,190 716,190 744,193 M509,243 529,232 550,221 573,212 596,204 622,198 648,194 674,194 700,195 726,199 751,205 M509,243 530,231 551,219 575,209 600,201 626,195 653,192 681,191 709,193 735,198 761,205 786,214 M551,228 573,218 596,210 621,203 647,199 673,196 699,197 726,200 751,205 M575,528 583,513 591,498 599,484 607,469 614,455 622,441 629,426 636,412 644,398 652,383 660,369 668,354 677,338 686,323 696,307 706,291 718,275 M686,379 692,363 698,347 705,331 713,314 721,297 729,279 739,260 750,240 762,220 M666,114 693,137 716,160 735,183 751,205 M666,114 706,124 742,139 774,158 801,178 M666,114 712,117 756,128 795,145 M500,364 513,354 527,345 542,335 556,326 572,317 588,308 605,300 622,293 640,286 659,280 678,275 698,271 719,268 739,266 M509,243 529,231 550,220 572,209 596,201 622,194 648,190 675,188 702,189 729,193 M551,228 572,217 596,208 621,200 647,194 674,191 701,191 729,193 M751,205 775,211 799,218 821,227 842,237 861,248 879,260 896,272 912,285 926,297 940,310 953,323 965,336 M751,205 776,212 800,221 822,232 842,243 861,256 879,269 895,282 910,295 925,309 938,322 950,336 M751,205 778,202 804,201 831,203 858,207 883,214 907,222 929,232 950,244 970,256 988,268 1004,281 1020,295 1034,308 1048,322 M751,205 777,207 803,211 829,217 852,225 875,234 896,245 915,257 934,269 950,282 966,295 981,308 995,322 1008,335 1020,348 1032,361 M751,205 773,192 798,181 825,171 853,164 882,160 912,160 942,163 971,169 998,179 1023,190 1046,202 1067,216 1085,231 1103,246 1118,261 1132,276 1145,291 1157,305 1169,320 1179,334 1189,348 M751,205 777,201 804,199 830,200 857,203 882,208 907,216 930,225 951,236 971,247 990,260 1007,273 1023,286 1038,299 1051,312 1064,326 1077,339 1088,352 1100,366 1110,379 1121,392 1131,405 1141,418 1151,431 M751,205 771,187 794,169 821,152 851,137 884,126 920,119 957,117 994,121 1029,130 1060,143 1089,159 1114,177 1136,195 1155,214 1171,232 1186,250 1199,268 M751,205 776,199 801,195 828,193 854,193 880,197 905,202 929,210 952,219 973,229 993,241 1011,253 1028,266 1043,279 1058,292 1071,305 1084,318 1096,331 1107,344 1118,357 1129,370 1139,383 M751,205 778,208 804,213 829,220 853,229 875,239 896,251 915,263 933,276 949,289 M751,205 776,217 799,231 820,245 839,260 856,276 872,291 886,306 M751,205 774,220 795,235 813,251 830,267 846,283 860,299 873,315 M751,205 762,228 771,250 779,271 786,290 792,309 798,327 804,344 809,361 814,377 818,394 823,410 827,426 832,441 836,457 841,473 846,489 850,506 856,523 861,540 M751,205 767,223 782,241 795,259 806,276 817,292 827,308 836,324 844,340 852,355 859,369 867,384 874,398 881,413 887,427 894,441 M751,205 753,232 755,256 757,278 758,300 760,320 761,339 762,358 763,376 764,393 765,411 M762,220 787,226 810,233 832,242 852,251 872,262 890,274 907,286 923,298 937,311 951,323 965,336 M762,220 787,217 812,216 837,218 861,221 885,226 908,233 929,242 950,252 969,262 987,273 1004,285 1019,297 1034,309 1048,322 M762,220 777,199 794,178 813,156 837,134 865,113 898,94 936,79 977,71 1021,69 1064,76 1103,90 1137,108 1166,129 1191,150 1212,172 1229,194 1244,214 1257,235 1269,254 1279,272 1288,290 M762,220 787,215 812,211 838,210 863,211 889,214 913,220 936,227 959,236 979,246 999,257 1017,269 1034,281 1050,294 1065,306 1079,319 1092,332 1104,345 1116,358 1128,370 1139,383 M762,220 763,243 764,265 765,285 M762,220 751,242 741,262 732,282 724,300 M762,220 774,242 783,264 792,284 M786,214 810,222 832,233 853,244 873,256 891,269 908,282 924,295 938,309 952,322 965,336 M786,214 811,213 836,215 861,218 885,224 908,231 929,240 950,250 969,261 987,272 1004,284 1019,297 1034,309 1048,322 M786,214 807,199 830,186 856,174 883,164 913,157 944,154 975,155 1006,159 1035,166 1063,177 1088,189 1110,203 1131,218 1149,233 1166,249 1181,264 1195,280 1208,295 1219,310 M786,214 811,213 836,214 860,217 884,222 907,229 929,238 950,248 969,258 987,270 1004,281 1020,294 1035,306 1049,318 1062,331 1074,344 1086,356 1098,369 1109,381 1120,394 1130,406 1141,418 1151,431 M771,200 796,208 819,218 841,229 861,241 879,254 896,268 912,281 926,295 940,309 953,322 965,336 M896,176 909,200 920,222 930,244 939,264 946,283 953,301 959,319 965,336 M896,176 921,191 944,207 963,223 981,240 997,257 1012,273 1025,290 1037,306 1048,322 M896,176 924,169 954,165 984,165 1013,168 1042,174 1069,183 M896,176 925,171 955,169 986,171 M896,176 924,166 953,158 984,154 1015,154 1046,158 1076,165 1104,174 1129,187 1153,200 M896,176 915,152 939,127 967,102 1002,79 1044,60 1091,49 1141,47 1189,57 1233,74 1269,97 1299,121 1323,146 1343,171 1360,195 M896,176 922,188 945,201 966,216 985,231 1002,247 1018,262 M863,264 883,275 901,286 919,298 935,311 950,323 965,336 M863,264 880,275 896,287 911,299 925,311 938,324 950,336 M863,264 884,265 904,268 924,271 944,276 963,282 981,289 999,296 1016,304 1032,313 1048,322 M863,264 885,270 905,278 925,286 944,295 961,305 978,316 995,326 1010,337 M863,264 885,259 907,256 929,254 952,254 974,255 996,258 1018,262 M863,264 885,256 907,251 930,246 954,244 977,243 1001,244 1025,247 1048,251 M863,264 886,268 908,274 929,281 949,289 M863,264 868,290 873,315 M863,264 872,282 881,300 889,318 896,335 903,351 M863,264 879,278 894,293 907,308 920,323 932,337 M863,264 867,284 871,304 875,323 878,341 881,358 884,375 886,392 889,408 892,425 894,441 M863,264 869,283 875,302 880,320 885,337 889,353 893,370 897,386 901,401 M965,336 985,331 1006,327 1027,324 1048,322 M965,336 982,342 999,348 1016,355 1032,361 M965,336 983,345 1001,355 1018,365 1034,375 1050,385 M965,336 982,343 998,351 1014,360 1030,368 1045,377 1060,386 M965,336 987,336 1010,337 M965,336 984,335 1003,334 1023,334 1042,335 1061,337 1080,339 1099,342 M965,336 983,338 1002,341 1020,345 1037,349 1055,354 1072,359 1089,364 1106,370 1122,377 1139,383 M965,336 982,342 999,349 1016,356 1032,364 1047,372 1063,380 1078,388 1093,396 1108,405 1122,413 1137,422 1151,431 M965,336 982,333 999,331 1017,330 1034,329 1052,329 1070,329 1087,330 1105,332 1122,334 1139,337 1156,340 1173,344 1189,348 M965,336 982,335 1000,335 1017,335 1035,336 1052,338 1070,340 1087,343 1104,346 1121,350 1137,354 1153,358 1169,363 1185,368 1201,374 1216,380 M965,336 981,344 996,352 1011,360 1026,369 1040,377 1054,386 1068,395 1082,404 1095,413 1108,423 1122,432 1135,441 1148,450 1161,460 M965,336 957,351 949,366 941,381 934,395 927,409 920,424 913,438 906,452 899,466 892,481 885,495 877,510 869,525 861,540 M965,336 954,351 943,367 933,382 923,397 913,412 904,426 894,441 M965,336 947,330 929,326 911,321 892,318 873,315 M965,336 951,349 938,362 925,375 913,388 901,401 M965,336 966,353 967,370 967,387 968,403 969,419 970,435 970,451 971,467 972,483 973,499 974,516 M965,336 979,346 994,356 1007,366 1021,377 1033,387 1046,398 1059,408 M965,336 983,336 1001,336 1020,337 1038,339 1056,341 1074,344 1092,347 M965,336 981,342 997,348 1013,355 1028,362 1043,370 1058,377 1073,385 1087,393 1101,401 1115,409 1129,417 1142,426 M950,336 969,332 989,328 1008,325 1028,323 1048,322 M950,336 967,340 984,345 1000,350 1016,356 1032,361 M950,336 970,336 990,336 1010,337 M950,336 969,338 987,340 1004,343 1022,346 1040,350 1057,355 1074,360 1090,365 1107,371 1123,377 1139,383 M950,336 968,341 984,347 1001,354 1017,361 1033,368 1048,375 1064,383 1079,390 1093,398 1108,406 1122,414 1137,423 1151,431 M950,336 968,335 985,334 1002,334 1020,334 1037,336 1054,337 1072,340 1089,342 1105,346 1122,349 1138,354 1154,358 1170,363 1186,368 1201,374 1216,380 M950,336 966,343 982,350 997,358 1012,366 1026,374 1040,382 1054,390 1068,399 1082,407 1095,416 1108,425 1121,433 1135,442 1148,451 1161,460 M950,336 943,352 936,368 929,384 922,399 915,415 909,430 903,445 896,461 890,476 883,492 876,507 869,523 861,540 M950,336 941,352 933,367 925,382 917,397 909,412 902,426 894,441 M950,336 937,353 925,369 913,385 901,401 M950,336 968,342 986,348 1003,354 1019,361 1035,369 1051,376 1067,384 1082,392 1098,400 1113,409 1128,417 1142,426 M901,401 898,421 894,441 M901,401 896,418 892,435 887,452 882,469 877,486 872,504 867,521 861,540 M901,401 884,402 867,403 850,404 833,405 816,406 799,407 782,409 765,411 M901,401 885,402 868,403 851,404 835,406 818,407 802,409 785,411 769,412 752,415 M901,401 885,398 869,395 853,392 836,390 820,387 803,385 786,383 770,382 753,381 736,380 719,379 703,379 686,379 M901,401 896,385 891,368 885,351 879,333 873,315 M894,441 889,457 884,473 878,489 873,506 867,523 861,540 M894,441 904,458 914,475 924,492 935,509 M894,441 907,454 920,466 933,479 946,491 960,504 974,516 M894,441 878,437 862,433 846,429 830,425 814,422 798,418 782,414 765,411 M861,540 843,557 824,574 M861,540 880,537 900,534 919,531 937,526 956,521 974,516 M861,540 880,533 899,526 917,518 935,509 M861,540 849,525 837,510 826,496 816,482 806,467 795,453 785,439 775,425 765,411 M861,540 849,527 837,514 825,502 814,489 804,477 793,464 783,452 773,439 762,427 752,415 M765,411 759,413 752,415 M765,411 750,404 734,397 718,391 702,385 686,379 M724,300 715,317 707,333 700,348 692,364 686,379 M724,300 729,321 734,341 739,360 744,378 748,397 752,415 M1048,322 1040,342 1032,361 M1048,322 1049,344 1050,365 1050,385 M1048,322 1052,344 1056,365 1060,386 M1048,322 1070,334 1092,347 M1048,322 1065,328 1082,335 1099,342 M1048,322 1029,329 1010,337 M1048,322 1048,300 1048,276 1048,251 M1048,322 1039,303 1029,283 1018,262 M1032,361 1041,373 1050,385 M1032,361 1046,374 1060,386 M1032,361 1041,377 1050,393 1059,408 M1032,361 1051,356 1071,351 1092,347 M1151,431 1147,428 1142,426 M1151,431 1156,445 1161,460 M1151,431 1147,415 1143,399 1139,383 M1151,431 1158,415 1166,398 1173,382 1181,365 1189,348 M1151,431 1164,421 1177,410 1190,400 1203,390 1216,380 M1151,431 1156,413 1161,394 M1151,431 1163,442 1175,454 1188,465 1200,476 1213,488 1226,499 1239,510 1253,522 1267,533 1282,544 1298,554 1315,565 1332,574 M1151,431 1156,447 1161,463 1167,479 1172,496 1178,512 1184,529 1190,547 1197,565 M1151,431 1160,418 1169,404 1178,391 1187,378 1197,364 1207,350 1217,337 M1151,431 1159,416 1166,402 1174,387 1182,372 1191,357 1200,342 1209,326 1219,310 M1189,348 1172,360 1155,371 1139,383 M1189,348 1203,364 1216,380 M1189,348 1203,342 1217,337 M1189,348 1204,329 1219,310 M1189,348 1191,330 1194,310 1196,290 1199,268 M1189,348 1204,338 1219,327 1235,317 1252,308 1270,299 1288,290 M1189,348 1200,332 1211,315 1224,298 1237,281 M1189,348 1179,364 1170,379 1161,394 M1189,348 1173,350 1158,353 M1189,348 1168,342 1147,337 M1189,348 1171,331 1151,313 M1199,268 1210,290 1219,310 M1199,268 1196,288 1192,308 1189,326 1187,344 M1199,268 1182,283 1166,298 1151,313 M1199,268 1184,282 1169,295 M1199,268 1178,261 1156,256 1134,252 1111,249 1088,248 M1199,268 1184,286 1171,303 1159,320 1147,337 M1199,268 1222,272 1245,277 1267,283 1288,290 M1199,268 1219,274 1237,281 M1199,268 1186,246 1171,224 1153,200 M1219,310 1202,327 1187,344 M1219,310 1196,310 1174,311 1151,313 M1219,310 1241,302 1264,296 1288,290 M1219,310 1228,296 1237,281 M1219,310 1245,302 1271,295 M1219,310 1218,324 1217,337 M1219,310 1195,302 1169,295 M1288,290 1263,285 1237,281 M1288,290 1269,301 1251,313 1233,324 1217,337 M1288,290 1274,305 1261,321 1249,336 1238,351 1227,365 1216,380 M1288,290 1270,298 1253,306 1237,315 1222,324 1207,333 1192,343 1178,353 1165,363 1151,373 1139,383 M1288,290 1291,309 1294,327 1297,344 1300,361 1302,377 1305,393 1307,409 1309,425 1311,441 1314,456 1316,472 1318,488 1321,505 1323,521 1326,538 1329,556 1332,574 M1288,290 1283,269 1277,247 1271,223 M1237,281 1230,300 1223,319 1217,337 M1237,281 1232,302 1228,323 1224,342 1220,361 1216,380 M1237,281 1222,294 1208,307 1195,319 1183,332 1171,345 1160,358 1149,370 1139,383 M1237,281 1247,266 1259,251 M1187,344 1167,340 1147,337 M1187,344 1169,328 1151,313 M1187,344 1178,361 1169,378 1161,394 M1187,344 1172,348 1158,353 M1139,383 1150,389 1161,394 M1139,383 1148,368 1158,353 M1139,383 1143,360 1147,337 M1139,383 1123,371 1108,359 1092,347 M1139,383 1126,369 1113,356 1099,342 M1332,574 1320,583 1308,592 M1332,574 1336,560 1339,545 M1332,574 1312,576 1293,577 1273,576 1254,575 1235,572 1216,569 1197,565 M1332,574 1354,580 1376,584 1399,587 1405,588 M26,588 43,589 M1332,574 1347,562 1362,549 1376,536 1389,522 M1308,592 1284,589 1261,585 1239,580 1218,573 1197,565 M1339,545 1329,530 1320,516 1311,502 M1339,545 1333,526 1327,508 1322,490 1317,472 M43,589 46,566 49,545 51,525 53,505 M43,589 34,571 26,556 M1405,556 1405,555 1397,538 1389,522 M299,298 283,287 266,276 248,266 229,256 209,248 187,241 165,235 142,230 119,228 95,227 71,229 48,232 26,236 M1405,236 1404,237 1382,243 1361,251 1341,259 1323,269 1305,279 1288,290 M299,298 285,284 270,271 253,259 236,246 216,234 196,223 174,214 150,206 125,199 99,195 73,194 47,195 26,197 M1405,197 1400,198 1375,204 1351,211 1328,221 1307,231 1287,243 1269,255 1253,268 1237,281 M299,298 284,285 268,273 250,261 232,250 212,239 190,230 168,221 144,215 119,210 94,208 68,208 43,210 26,213 M1405,213 1397,215 1373,221 1351,229 1329,239 1309,249 1290,261 1273,272 1257,285 1242,297 1227,310 1214,323 1201,336 1189,348 M299,298 283,307 267,317 252,327 238,338 224,349 211,359 198,370 185,381 173,392 161,403 149,414 138,425 126,436 114,447 103,458 91,469 79,480 67,491 54,502 41,513 28,523 26,525 M1405,525 1393,534 1379,545 1364,555 1348,565 1332,574 M284,280 267,270 248,259 229,250 208,242 187,235 164,229 141,225 117,223 93,223 69,225 46,229 26,233 M1405,233 1402,234 1381,241 1360,249 1340,258 1322,268 1305,279 1288,290 M284,280 268,267 250,253 231,240 211,228 188,217 164,207 139,200 112,194 85,192 57,192 29,195 26,195 M1405,195 1382,200 1356,208 1332,218 1310,229 1290,241 1271,254 1253,267 1237,281 M284,280 268,268 250,256 231,244 211,234 189,224 166,216 142,210 117,206 91,204 66,204 40,207 26,210 M1405,210 1394,212 1371,219 1348,227 1327,237 1307,248 1289,259 1271,272 1255,284 1240,297 1226,310 1213,323 1201,335 1189,348 M281,219 258,207 234,197 208,189 180,184 152,181 123,181 95,184 68,191 42,199 26,206 M1405,206 1397,209 1375,221 1354,234 1336,248 1318,262 1303,276 1288,290 M470,265 467,244 463,221 459,196 454,168 448,138 439,103 428,64 412,17 386,-40 341,-109 254,-182 113,-207 26,-166 M1405,-166 1371,-151 1306,-77 1271,-14 1250,38 1236,82 1226,119 1219,152 1213,181 1209,207 1205,231 1201,253 1198,274 1196,294 1193,313 1191,331 1189,348 M470,265 460,246 448,225 434,204 419,182 400,159 377,135 350,112 317,90 279,72 235,60 188,57 142,63 99,77 62,97 32,119 26,124 M1405,124 1385,143 1364,166 1346,189 1331,211 1318,232 1307,252 1297,272 1288,290 M470,265 464,245 457,223 448,199 438,173 426,146 411,115 391,82 364,46 328,9 277,-26 211,-50 136,-53 68,-33 26,-6 M1405,-6 1393,1 1354,39 1325,75 1304,109 1288,140 1275,168 1265,194 1256,218 1249,240 1243,261 1237,281 M416,259 406,239 394,219 381,198 366,176 347,153 325,129 298,106 266,84 228,65 184,53 137,50 91,55 48,69 26,81 M1405,81 1390,88 1359,111 1334,134 1312,158 1295,180 1280,202 1267,223 1256,243 1246,263 1237,281 M429,299 421,281 412,263 401,244 390,224 376,204 361,182 343,160 321,137 295,115 263,94 227,76 185,64 140,59 95,64 53,76 26,89 M1405,89 1395,93 1364,114 1338,137 1316,159 1297,182 1282,203 1268,224 1257,244 1246,263 1237,281 M387,316 375,302 361,288 346,274 330,261 313,247 294,234 273,222 251,211 227,202 202,195 175,189 148,187 120,187 93,190 66,196 41,203 26,210 M1405,210 1397,213 1375,224 1355,236 1336,249 1319,263 1303,276 1288,290 M381,302 367,288 353,274 337,260 319,246 300,233 279,220 257,209 233,199 207,191 180,185 151,183 123,183 95,186 68,192 42,200 26,207 M1405,207 1397,210 1375,222 1355,235 1336,248 1319,262 1303,276 1288,290 M148,352 132,344 116,336 100,328 82,321 65,314 47,308 28,303 26,302 M1405,302 1388,298 1368,294 1349,292 1328,290 1308,290 1288,290 M148,352 136,366 125,379 114,392 103,405 93,418 82,431 72,443 62,456 51,469 40,482 29,495 26,499 M1405,499 1397,508 1385,522 1373,535 1360,548 1346,561 1332,574 M178,138 145,138 113,143 82,152 53,163 28,177 26,178 M1405,178 1384,192 1363,208 1345,225 1328,241 1314,258 1300,274 1288,290 M429,299 408,296 386,294 364,293 342,293 321,295 299,298 M429,299 410,293 390,288 369,284 348,281 327,280 305,279 284,280 M429,299 405,300 381,302 M429,299 411,290 392,282 372,275 352,269 M429,299 412,287 394,275 375,263 354,253 332,243 309,235 284,229 M429,299 438,317 445,334 M429,299 449,282 470,265 M429,299 423,279 416,259 M429,299 445,285 462,270 481,257 M429,299 408,307 387,316 M429,299 414,314 399,330 386,345 373,360 M429,299 426,318 423,336 420,354 M429,299 408,297 387,296 366,296 345,298 324,300 M429,299 410,295 391,291 371,289 351,287 332,287 312,288 M429,299 435,311 441,322 M416,259 395,262 374,268 354,274 335,281 317,289 299,298 M416,259 393,258 370,260 348,263 326,268 304,273 284,280 M416,259 397,281 381,302 M416,259 394,261 373,264 352,269 M416,259 396,250 375,243 353,237 331,233 308,230 284,229 M416,259 424,279 432,298 439,316 445,334 M416,259 443,261 470,265 M416,259 437,256 459,256 481,257 M416,259 405,278 396,297 387,316 M416,259 396,265 376,273 358,281 340,290 324,300 M416,259 394,262 372,267 351,273 331,280 312,288 M416,259 406,251 396,243 M416,259 432,254 448,250 M381,302 361,300 340,298 320,297 299,298 M381,302 363,296 344,291 324,286 304,283 284,280 M381,302 367,286 352,269 M381,302 365,287 347,272 328,257 307,242 284,229 M381,302 403,312 425,323 445,334 M381,302 402,292 423,282 446,273 470,265 M381,302 384,309 387,316 M381,302 378,322 376,342 373,360 M381,302 362,301 343,300 324,300 M381,302 358,296 335,291 312,288 M352,269 333,278 316,288 299,298 M352,269 329,271 306,275 284,280 M352,269 331,255 309,241 284,229 M352,269 375,265 399,263 423,262 446,263 470,265 M352,269 337,285 324,300 M352,269 331,278 312,288 M352,269 338,267 324,265 M352,269 341,250 330,229 316,207 M470,265 448,265 425,265 403,268 381,271 359,276 338,282 318,290 299,298 M470,265 449,262 428,259 407,258 386,259 364,261 343,264 323,268 303,274 284,280 M470,265 450,255 429,247 406,239 383,233 359,229 334,227 309,227 284,229 M470,265 461,289 453,312 445,334 M470,265 452,274 434,284 418,294 402,305 387,316 M470,265 459,285 450,304 441,322 M470,265 459,257 448,250 M470,265 466,287 463,308 459,328 457,347 454,365 451,383 449,401 M470,265 470,287 470,308 469,328 469,347 469,365 469,383 469,401 469,418 M470,265 477,287 484,307 489,327 495,346 500,364 M470,265 474,287 477,308 480,327 483,346 486,364 M299,298 292,289 284,280 M299,298 295,276 290,253 284,229 M299,298 316,310 331,322 346,335 360,347 373,360 M299,298 281,301 262,306 245,311 227,316 211,323 194,330 178,337 163,344 148,352 M299,298 311,299 324,300 M299,298 305,293 312,288 M299,298 311,281 324,265 M299,298 294,273 288,247 281,219 M448,250 427,240 404,232 381,225 356,221 331,218 306,217 281,219 M448,250 425,237 400,227 373,218 345,211 316,207 M448,250 459,245 470,240 M448,250 478,245 509,243 M448,250 427,237 404,225 380,215 M448,250 426,235 402,222 376,210 348,200 318,194 M281,219 298,213 316,207 M281,219 298,206 318,194 M281,219 261,198 237,177 210,156 178,138 M445,334 446,351 447,368 448,385 449,401 M445,334 450,351 455,368 460,385 464,402 469,418 M445,334 447,351 448,368 449,385 451,401 452,418 453,434 455,450 456,466 457,482 M445,334 459,349 472,365 484,380 496,395 M445,334 441,340 437,345 M445,334 464,343 482,354 500,364 M445,334 466,349 486,364 M445,334 432,344 420,354 M387,316 380,338 373,360 M387,316 399,330 410,345 420,359 430,373 439,387 449,401 M387,316 401,330 413,345 425,360 437,375 448,389 458,404 469,418 M387,316 395,332 402,348 409,363 415,379 422,394 428,408 433,423 439,438 445,453 451,467 457,482 M373,360 396,356 420,354 M373,360 389,368 404,376 419,384 434,393 449,401 M373,360 390,369 406,379 422,388 438,398 453,408 469,418 M373,360 383,374 393,388 402,401 411,415 421,428 430,442 439,455 448,469 457,482 M449,401 459,410 469,418 M449,401 450,417 452,434 454,450 456,466 457,482 M449,401 464,399 480,397 496,395 M575,528 581,527 587,526 M575,528 560,545 545,562 528,578 M575,528 557,538 540,547 521,556 502,564 482,572 M575,528 557,523 540,517 522,511 506,504 489,497 473,490 457,482 M575,528 562,516 549,504 537,492 525,479 514,467 502,455 491,442 480,430 469,418 M457,482 462,499 466,517 471,534 476,553 482,572 M457,482 460,466 463,450 466,434 469,418 M284,229 268,210 250,192 229,173 206,155 178,138"/>
<rect x="0" y="0" width="25" height="719" fill="#000"/><rect x="1404" y="0" width="26" height="719" fill="#000"/>
<rect x="2" y="700" width="207" height="17.5" fill="#1c1f2b" fill-opacity="0.9"/>
</svg>
<div class="t" style="left:480.5px;top:937.2px;font-size:13.0px;color:#fff;">&copy; 2023 Mapbox &copy; OpenStreetMap</div>
<div class="a" style="left:0.0px;top:967.0px;width:1920.0px;height:37.0px;background:#e6e6e6;border-top:1px solid #d0d0d0"></div>
<div class="a" style="left:162.5px;top:968.0px;width:69.0px;height:36.0px;background:#f9f9f9;border-left:1px solid #d0d0d0;border-right:1px solid #d0d0d0"></div>
<div class="a" style="left:263.5px;top:968.0px;width:1.0px;height:36.0px;background:#d0d0d0"></div>
<div class="a" style="left:295.6px;top:968.0px;width:1.0px;height:36.0px;background:#d0d0d0"></div>
<div class="a" style="left:327.5px;top:968.0px;width:1.0px;height:36.0px;background:#d0d0d0"></div>
<svg class="a" style="left:0.0px;top:971.5px;" width="340" height="36" viewBox="0 0 340 36"><path d="M11 8.5v11c0 1 1.5 1.6 3.6 1.6s3.6-.6 3.6-1.6v-11M11 8.5c0-1 1.5-1.6 3.6-1.6s3.6.6 3.6 1.6M11 8.5c0 1 1.5 1.6 3.6 1.6s3.6-.6 3.6-1.6" fill="none" stroke="#666" stroke-width="1"/><g fill="none" stroke="#555" stroke-width="1.1"><rect x="241" y="7.5" width="11" height="11"/><rect x="273" y="7.5" width="11" height="11"/><path d="M278.5 7.5v11M273 13h11"/><path d="M305 7.5l5 2 5-2v11l-5 2-5-2z M310 9.5v11"/></g><path d="M243.5 16v-3M245.5 16v-5M247.5 16v-2" stroke="#555" stroke-width="1"/><path d="M249 18.5h7M252.5 15v7M281 18.5h7M284.5 15v7M313 18.5h7M316.5 15v7" stroke="#555" stroke-width="1.8"/></svg>
<div class="t" style="left:25.0px;top:978.9px;font-size:15.2px;color:#555;">Data Source</div>
<div class="t" style="left:170.0px;top:978.8px;font-size:15.0px;color:#555;font-weight:bold">Sheet 1</div>
<div class="a" style="left:0.0px;top:1004.0px;width:1920.0px;height:26.0px;background:#ebebeb;border-top:1px solid #d2d2d2"></div>
<div class="t" style="left:3.2px;top:1010.8px;font-size:13.2px;color:#333;">2212 marks</div>
<div class="t" style="left:91.8px;top:1010.8px;font-size:13.2px;color:#333;">1 row by 1 column</div>
<div class="t" style="left:217.3px;top:1010.8px;font-size:13.2px;color:#333;">SUM of AVG(Dest Lat): 16.468,0</div>
<div class="a" style="left:1501.6px;top:1005.0px;width:1.0px;height:25.0px;background:#d2d2d2"></div>
<div class="a" style="left:1658.0px;top:1005.0px;width:1.0px;height:25.0px;background:#d2d2d2"></div>
<div class="a" style="left:1690.4px;top:1005.0px;width:1.0px;height:25.0px;background:#d2d2d2"></div>
<div class="a" style="left:1722.3px;top:1005.0px;width:1.0px;height:25.0px;background:#d2d2d2"></div>
<div class="a" style="left:1779.2px;top:1005.0px;width:1.0px;height:25.0px;background:#d2d2d2"></div>
<div class="a" style="left:1850.2px;top:1005.0px;width:1.0px;height:25.0px;background:#d2d2d2"></div>
<svg class="a" style="left:1500.0px;top:1004.0px;" width="420" height="26" viewBox="0 0 420 26"><circle cx="13" cy="9.5" r="3" fill="none" stroke="#555" stroke-width="1.1"/><path d="M8 19.5v-2.5a5 3.5 0 0 1 10 0v2.5z" fill="none" stroke="#555" stroke-width="1.1"/><path d="M140.5 11h8l-4 4.5z" fill="#222"/><g fill="#bdbdbd"><path d="M288.5 8v9M298 8.5l-6 4 6 4z"/><path d="M311 8.5l-5.5 4 5.5 4z"/><path d="M320.5 8.5l5.5 4-5.5 4z"/><path d="M334.5 8.5l6 4-6 4z"/></g><path d="M288.5 8v9M342 8v9" stroke="#bdbdbd" stroke-width="1.2"/><g fill="#a0a0a0"><rect x="359" y="8" width="3" height="3"/><rect x="363" y="8" width="3" height="3"/><rect x="367" y="8" width="3" height="3"/><rect x="359" y="12" width="3" height="3"/><rect x="363" y="12" width="3" height="3"/><rect x="367" y="12" width="3" height="3"/><rect x="359" y="16" width="3" height="3"/><rect x="363" y="16" width="3" height="3"/><rect x="367" y="16" width="3" height="3"/></g><g fill="#a0a0a0"><rect x="381" y="8" width="11" height="6"/><rect x="381" y="15.5" width="3" height="3"/><rect x="385" y="15.5" width="3" height="3"/><rect x="389" y="15.5" width="3" height="3"/></g><rect x="403" y="8" width="11" height="11" fill="#555"/></svg>
<div class="t" style="left:1528.0px;top:1010.5px;font-size:13.3px;color:#222;">Boglárka Lipka</div>
<div class="a" style="left:0.0px;top:1030.0px;width:1920.0px;height:4.0px;background:#1f3843"></div>
<div class="a" style="left:683.0px;top:1030.0px;width:60.0px;height:4.0px;background:#4b5f67"></div>
</body></html>
